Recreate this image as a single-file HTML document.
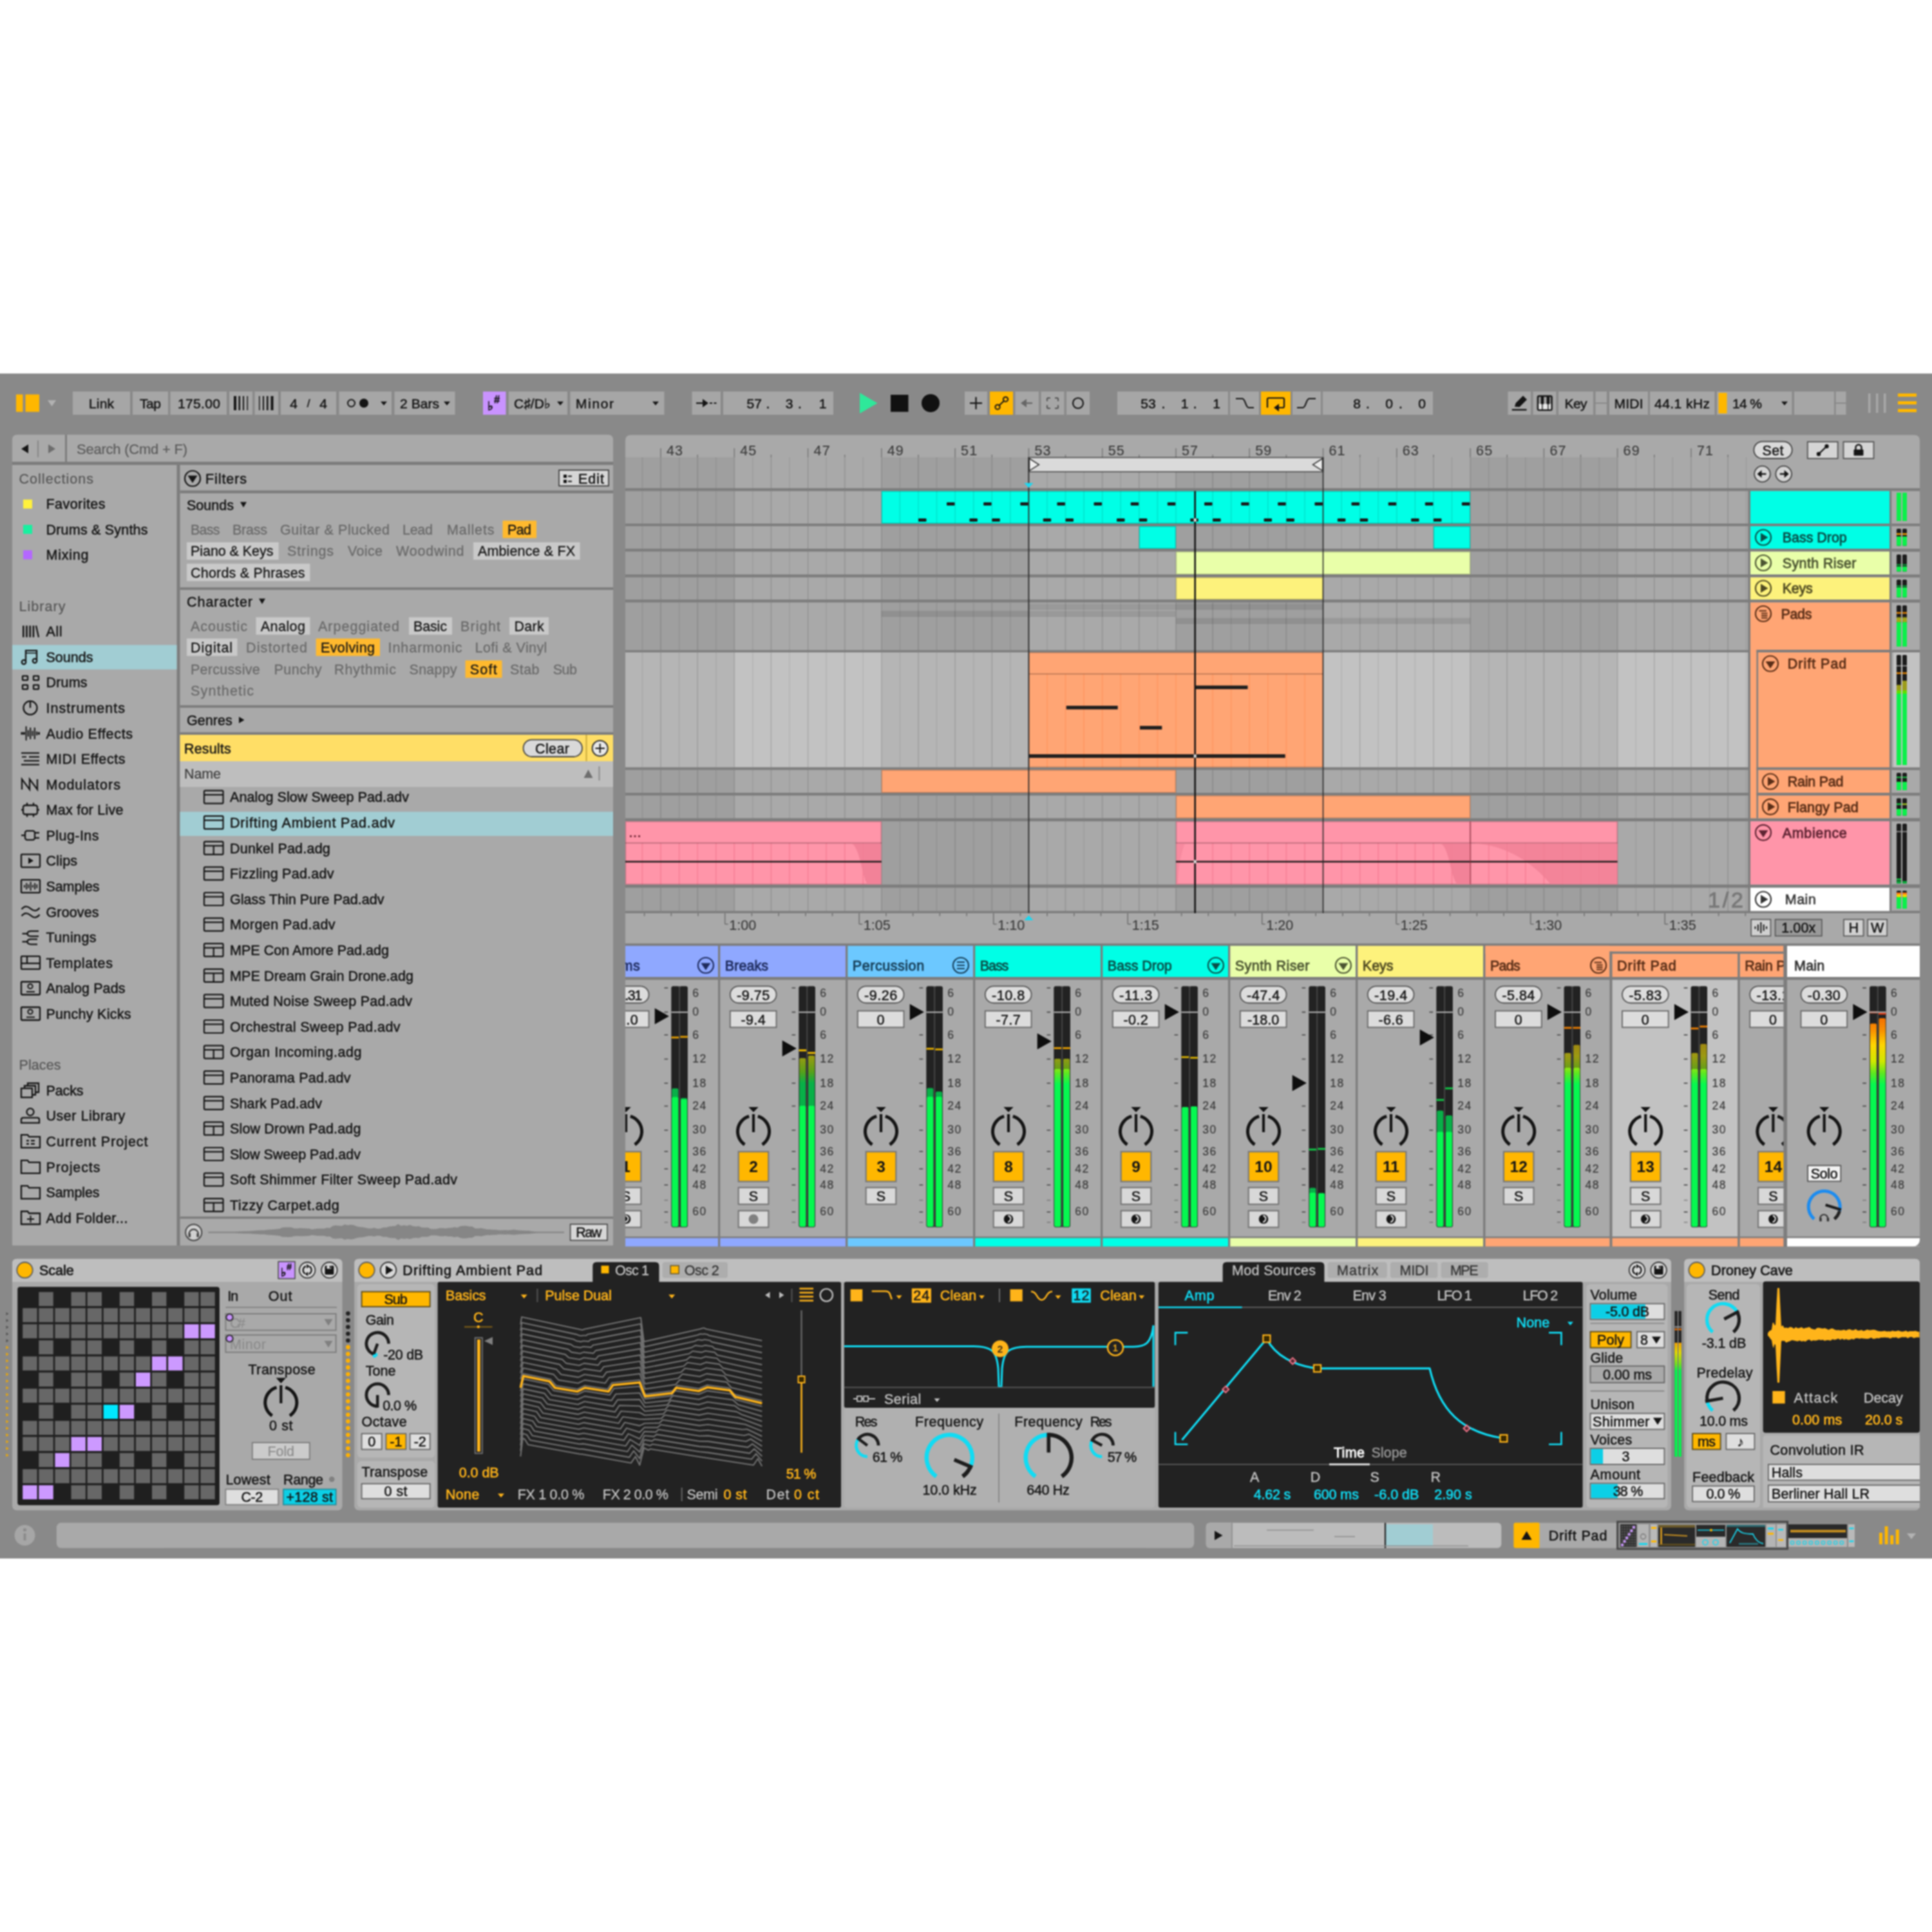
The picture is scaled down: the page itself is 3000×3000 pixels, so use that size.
<!DOCTYPE html>
<html><head><meta charset="utf-8"><title>Live</title>
<style>html,body{margin:0;padding:0;background:#fff}svg{display:block}text{font-family:"Liberation Sans",sans-serif;white-space:pre}</style>
</head><body>
<svg width="3000" height="3000" viewBox="0 0 3000 3000">
<g style="filter:blur(0.9px)"><rect x="-10" y="-10" width="3020" height="3020" fill="#fff"/>
<rect x="-10" y="580" width="3020" height="1840" fill="#898989"/>
<rect x="25" y="612.5" width="10.5" height="27" fill="#ffb700"/>
<rect x="39.5" y="612.5" width="21.5" height="27" fill="#ffb700"/>
<polygon points="74,621.5 87,621.5 80.5,631" fill="#b2b2b2" />
<rect x="113" y="608" width="89" height="36" fill="#a6a6a6"/>
<text x="157.5" y="633.5" font-size="21" fill="#151515" text-anchor="middle" textLength="39" lengthAdjust="spacing" stroke="#151515" stroke-width="0.5" >Link</text>
<rect x="206" y="608" width="55" height="36" fill="#a6a6a6"/>
<text x="233.5" y="633.5" font-size="21" fill="#151515" text-anchor="middle" textLength="33" lengthAdjust="spacing" stroke="#151515" stroke-width="0.5" >Tap</text>
<rect x="264.5" y="608" width="87.5" height="36" fill="#a6a6a6"/>
<text x="309" y="633.5" font-size="21" fill="#151515" text-anchor="middle" textLength="66" lengthAdjust="spacing" stroke="#151515" stroke-width="0.5" >175.00</text>
<rect x="356" y="608" width="36" height="36" fill="#a6a6a6"/>
<rect x="363" y="615" width="4" height="22" fill="#151515"/>
<rect x="370.5" y="615" width="2.5" height="22" fill="#151515"/>
<rect x="377" y="615" width="2" height="22" fill="#151515"/>
<rect x="383.5" y="615" width="1.5" height="22" fill="#151515"/>
<rect x="395.5" y="608" width="36.5" height="36" fill="#a6a6a6"/>
<rect x="402" y="615" width="1.5" height="22" fill="#151515"/>
<rect x="408" y="615" width="2" height="22" fill="#151515"/>
<rect x="414" y="615" width="2.5" height="22" fill="#151515"/>
<rect x="420.5" y="615" width="4" height="22" fill="#151515"/>
<rect x="436" y="608" width="86" height="36" fill="#a6a6a6"/>
<text x="456" y="633.5" font-size="21" fill="#151515" text-anchor="middle" stroke="#151515" stroke-width="0.5" >4</text>
<text x="479" y="632.1" font-size="17" fill="#151515" text-anchor="middle" stroke="#151515" stroke-width="0.5" >/</text>
<text x="502" y="633.5" font-size="21" fill="#151515" text-anchor="middle" stroke="#151515" stroke-width="0.5" >4</text>
<rect x="526.5" y="608" width="81.5" height="36" fill="#a6a6a6"/>
<circle cx="545.5" cy="626" r="5.5" fill="none" stroke="#151515" stroke-width="2" />
<circle cx="565" cy="626" r="7" fill="#151515" />
<polygon points="591,623.5 601,623.5 596,629.5" fill="#151515" />
<rect x="612.5" y="608" width="94" height="36" fill="#a6a6a6"/>
<text x="621" y="633.5" font-size="21" fill="#151515" textLength="61" lengthAdjust="spacing" stroke="#151515" stroke-width="0.5" >2 Bars</text>
<polygon points="689,623.5 699,623.5 694,629.5" fill="#151515" />
<rect x="750" y="608" width="35.5" height="36" fill="#c993ff"/>
<text x="756.5" y="636.8" font-size="19" fill="#151515" stroke="#151515" stroke-width="0.9" >♭</text>
<text x="767" y="626.4" font-size="16.5" fill="#151515" font-weight="bold" stroke="#151515" stroke-width="0.4" >#</text>
<rect x="790" y="608" width="91" height="36" fill="#a6a6a6"/>
<text x="798" y="633.5" font-size="21" fill="#151515" textLength="57" lengthAdjust="spacing" stroke="#151515" stroke-width="0.5" >C♯/D♭</text>
<polygon points="865,623.5 875,623.5 870,629.5" fill="#151515" />
<rect x="885.5" y="608" width="146" height="36" fill="#a6a6a6"/>
<text x="894" y="633.5" font-size="21" fill="#151515" textLength="59" lengthAdjust="spacing" stroke="#151515" stroke-width="0.5" >Minor</text>
<polygon points="1013,623.5 1023,623.5 1018,629.5" fill="#151515" />
<rect x="1074.5" y="608" width="44.5" height="36" fill="#a6a6a6"/>
<line x1="1081" y1="626" x2="1097" y2="626" stroke="#151515" stroke-width="2.2" />
<polygon points="1091,619.5 1100,626 1091,632.5" fill="#151515" />
<line x1="1102" y1="626" x2="1106" y2="626" stroke="#151515" stroke-width="2" />
<line x1="1108.5" y1="626" x2="1112.5" y2="626" stroke="#151515" stroke-width="2" />
<rect x="1123" y="608" width="171" height="36" fill="#a6a6a6"/>
<text x="1171.3" y="633.5" font-size="21" fill="#151515" text-anchor="middle" stroke="#151515" stroke-width="0.5" >57</text>
<text x="1192.5" y="633.5" font-size="21" fill="#151515" text-anchor="middle" stroke="#151515" stroke-width="0.5" >.</text>
<text x="1225.5" y="633.5" font-size="21" fill="#151515" text-anchor="middle" stroke="#151515" stroke-width="0.5" >3</text>
<text x="1242" y="633.5" font-size="21" fill="#151515" text-anchor="middle" stroke="#151515" stroke-width="0.5" >.</text>
<text x="1277.5" y="633.5" font-size="21" fill="#151515" text-anchor="middle" stroke="#151515" stroke-width="0.5" >1</text>
<polygon points="1335,610 1335,642 1362.5,626" fill="#2ee89a" />
<rect x="1383" y="613" width="27.5" height="26.5" fill="#111"/>
<circle cx="1445" cy="626" r="14" fill="#111" />
<rect x="1498" y="608" width="35" height="36" fill="#a6a6a6"/>
<line x1="1506" y1="626" x2="1525" y2="626" stroke="#151515" stroke-width="2.2" />
<line x1="1515.5" y1="616.5" x2="1515.5" y2="635.5" stroke="#151515" stroke-width="2.2" />
<rect x="1537" y="608" width="36" height="36" fill="#ffb700"/>
<circle cx="1549" cy="632" r="3.6" fill="none" stroke="#151515" stroke-width="2" />
<circle cx="1561.5" cy="620" r="3.6" fill="none" stroke="#151515" stroke-width="2" />
<line x1="1551.5" y1="629.5" x2="1559" y2="622.5" stroke="#151515" stroke-width="2" />
<rect x="1576.5" y="608" width="36.5" height="36" fill="#a6a6a6"/>
<line x1="1588" y1="626" x2="1603" y2="626" stroke="#666" stroke-width="2.2" />
<polygon points="1594,619.5 1585,626 1594,632.5" fill="#666" />
<rect x="1616.5" y="608" width="36" height="36" fill="#a6a6a6"/>
<path d="M1626 618h5M1626 618v5" fill="none" stroke="#555" stroke-width="2" />
<path d="M1643 618h-5M1643 618v5" fill="none" stroke="#555" stroke-width="2" />
<path d="M1626 634h5M1626 634v-5" fill="none" stroke="#555" stroke-width="2" />
<path d="M1643 634h-5M1643 634v-5" fill="none" stroke="#555" stroke-width="2" />
<rect x="1656" y="608" width="36" height="36" fill="#a6a6a6"/>
<circle cx="1674" cy="626" r="8" fill="none" stroke="#151515" stroke-width="2.2" />
<rect x="1735" y="608" width="172" height="36" fill="#a6a6a6"/>
<text x="1783" y="633.5" font-size="21" fill="#151515" text-anchor="middle" stroke="#151515" stroke-width="0.5" >53</text>
<text x="1806.4" y="633.5" font-size="21" fill="#151515" text-anchor="middle" stroke="#151515" stroke-width="0.5" >.</text>
<text x="1839.5" y="633.5" font-size="21" fill="#151515" text-anchor="middle" stroke="#151515" stroke-width="0.5" >1</text>
<text x="1855.6" y="633.5" font-size="21" fill="#151515" text-anchor="middle" stroke="#151515" stroke-width="0.5" >.</text>
<text x="1889.2" y="633.5" font-size="21" fill="#151515" text-anchor="middle" stroke="#151515" stroke-width="0.5" >1</text>
<rect x="1910" y="608" width="45" height="36" fill="#a6a6a6"/>
<path d="M1919 619h10c5 0 5 14 10 14h8" fill="none" stroke="#151515" stroke-width="2.2" />
<rect x="1958" y="608" width="46" height="36" fill="#ffb700"/>
<path d="M1968 633v-13a2 2 0 0 1 2-2h22a2 2 0 0 1 2 2v11a2 2 0 0 1-2 2h-6" fill="none" stroke="#151515" stroke-width="2.2" />
<polygon points="1978,633 1986,627 1986,639" fill="#151515" />
<rect x="2007" y="608" width="44" height="36" fill="#a6a6a6"/>
<path d="M2014 633h9c5 0 5-14 10-14h10" fill="none" stroke="#151515" stroke-width="2.2" />
<rect x="2054" y="608" width="171" height="36" fill="#a6a6a6"/>
<text x="2107" y="633.5" font-size="21" fill="#151515" text-anchor="middle" stroke="#151515" stroke-width="0.5" >8</text>
<text x="2124" y="633.5" font-size="21" fill="#151515" text-anchor="middle" stroke="#151515" stroke-width="0.5" >.</text>
<text x="2157" y="633.5" font-size="21" fill="#151515" text-anchor="middle" stroke="#151515" stroke-width="0.5" >0</text>
<text x="2175" y="633.5" font-size="21" fill="#151515" text-anchor="middle" stroke="#151515" stroke-width="0.5" >.</text>
<text x="2208" y="633.5" font-size="21" fill="#151515" text-anchor="middle" stroke="#151515" stroke-width="0.5" >0</text>
<rect x="2341.5" y="608" width="35.5" height="36" fill="#a6a6a6"/>
<path d="M2352 631.5l1.5 -5.5l11.5 -11.5l6 6l-11.5 11.5z" fill="#151515" />
<line x1="2347.7" y1="636.3" x2="2370.5" y2="636.3" stroke="#151515" stroke-width="2.4" />
<rect x="2380.5" y="608" width="36" height="36" fill="#a6a6a6"/>
<rect x="2388" y="615" width="21.5" height="21.8" fill="#a6a6a6" rx="2" stroke="#151515" stroke-width="2.6"/>
<rect x="2389.3" y="627" width="19" height="8.5" fill="#e8e8e8"/>
<rect x="2392.6" y="615" width="4.6" height="12.5" fill="#151515"/>
<rect x="2401.6" y="615" width="4.6" height="12.5" fill="#151515"/>
<line x1="2394.9" y1="627" x2="2394.9" y2="636" stroke="#151515" stroke-width="1.4" />
<line x1="2403.9" y1="627" x2="2403.9" y2="636" stroke="#151515" stroke-width="1.4" />
<rect x="2420" y="608" width="54" height="36" fill="#a6a6a6"/>
<text x="2447" y="633.5" font-size="21" fill="#151515" text-anchor="middle" textLength="35" lengthAdjust="spacing" stroke="#151515" stroke-width="0.5" >Key</text>
<rect x="2477.5" y="608" width="17.5" height="17" fill="#a6a6a6"/>
<rect x="2477.5" y="627" width="17.5" height="17" fill="#a6a6a6"/>
<rect x="2499" y="608" width="60" height="36" fill="#a6a6a6"/>
<text x="2529" y="633.5" font-size="21" fill="#151515" text-anchor="middle" textLength="45" lengthAdjust="spacing" stroke="#151515" stroke-width="0.5" >MIDI</text>
<rect x="2562" y="608" width="100.5" height="36" fill="#a6a6a6"/>
<text x="2612" y="633.5" font-size="21" fill="#151515" text-anchor="middle" textLength="86" lengthAdjust="spacing" stroke="#151515" stroke-width="0.5" >44.1 kHz</text>
<rect x="2666" y="608" width="116.5" height="36" fill="#a6a6a6"/>
<rect x="2668.5" y="610" width="13" height="32" fill="#ffb700"/>
<text x="2690" y="633.5" font-size="21" fill="#151515" textLength="46" lengthAdjust="spacing" stroke="#151515" stroke-width="0.5" >14 %</text>
<polygon points="2766,623.5 2776,623.5 2771,629.5" fill="#151515" />
<rect x="2786" y="608" width="62" height="36" fill="#a6a6a6"/>
<rect x="2850.5" y="608" width="16" height="17" fill="#a6a6a6"/>
<rect x="2850.5" y="627" width="16" height="17" fill="#a6a6a6"/>
<rect x="2901" y="611" width="3.5" height="30" fill="#a8a8a8"/>
<rect x="2913" y="611" width="3.5" height="30" fill="#a8a8a8"/>
<rect x="2925" y="611" width="3.5" height="30" fill="#a8a8a8"/>
<rect x="2947" y="611" width="29" height="5" fill="#ffb700"/>
<rect x="2947" y="623" width="29" height="5" fill="#ffb700"/>
<rect x="2947" y="635" width="29" height="5" fill="#ffb700"/>
<clipPath id="dvclip"><rect x="0" y="1950" width="2981" height="400"/></clipPath>
<linearGradient id="dvm" gradientUnits="userSpaceOnUse" x1="0" y1="2060" x2="0" y2="2262"><stop offset="0" stop-color="#f06000"/><stop offset="0.12" stop-color="#f8a000"/><stop offset="0.2" stop-color="#e8e000"/><stop offset="0.29" stop-color="#70e820"/><stop offset="0.34" stop-color="#06f850"/><stop offset="1" stop-color="#06f850"/></linearGradient>
<path d="M19 1934V683q0 -8 8 -8H944q8 0 8 8V1934z" fill="#a9a9a9" />
<rect x="19" y="717" width="933" height="5" fill="#7d7d7d"/>
<rect x="101" y="675" width="3" height="44" fill="#7d7d7d"/>
<polygon points="33,697 44,690 44,704" fill="#151515" />
<line x1="59" y1="684" x2="59" y2="710" stroke="#7d7d7d" stroke-width="1.5" />
<polygon points="86,697 75,690 75,704" fill="#6d6d6d" />
<text x="119" y="704.9" font-size="22" fill="#5a5a5a" textLength="172" lengthAdjust="spacing" stroke="#5a5a5a" stroke-width="0.2" >Search (Cmd + F)</text>
<rect x="274.5" y="722" width="5" height="1212" fill="#7d7d7d"/>
<text x="29.5" y="750.7" font-size="21.5" fill="#555" textLength="115.5" lengthAdjust="spacing" stroke="#555" stroke-width="0.2" >Collections</text>
<rect x="36" y="775.7" width="14" height="14" fill="#fff13c"/>
<text x="71.5" y="790.4" font-size="21.5" fill="#151515" textLength="92" lengthAdjust="spacing" stroke="#151515" stroke-width="0.5" >Favorites</text>
<rect x="36" y="815" width="14" height="14" fill="#19f0a0"/>
<text x="71.5" y="829.7" font-size="21.5" fill="#151515" textLength="158" lengthAdjust="spacing" stroke="#151515" stroke-width="0.5" >Drums &amp; Synths</text>
<rect x="36" y="854.5" width="14" height="14" fill="#b467ff"/>
<text x="71.5" y="869.2" font-size="21.5" fill="#151515" textLength="66" lengthAdjust="spacing" stroke="#151515" stroke-width="0.5" >Mixing</text>
<text x="29.5" y="948.7" font-size="21.5" fill="#555" textLength="72" lengthAdjust="spacing" stroke="#555" stroke-width="0.2" >Library</text>
<rect x="35" y="971.5" width="2.6" height="18" fill="#151515"/>
<rect x="40.2" y="971.5" width="2.6" height="18" fill="#151515"/>
<rect x="45.4" y="971.5" width="2.6" height="18" fill="#151515"/>
<rect x="50.6" y="971.5" width="2.6" height="18" fill="#151515"/>
<line x1="56" y1="971.5" x2="60" y2="989.5" stroke="#151515" stroke-width="2.3" />
<text x="71.5" y="988.2" font-size="21.5" fill="#151515" textLength="25" lengthAdjust="spacing" stroke="#151515" stroke-width="0.5" >All</text>
<rect x="19" y="1001.5" width="255.5" height="38" fill="#a1cdd3"/>
<path d="M40 1027.1v-17h17v15" fill="none" stroke="#151515" stroke-width="2.3" />
<line x1="40" y1="1014.1" x2="57" y2="1014.1" stroke="#151515" stroke-width="1.6" />
<circle cx="37" cy="1028.1" r="3.2" fill="none" stroke="#151515" stroke-width="2.3" />
<circle cx="54" cy="1026.1" r="3.2" fill="none" stroke="#151515" stroke-width="2.3" />
<text x="71.5" y="1027.8" font-size="21.5" fill="#151515" textLength="73" lengthAdjust="spacing" stroke="#151515" stroke-width="0.5" >Sounds</text>
<rect x="35" y="1049.6" width="8" height="6.5" fill="none" rx="0.5" stroke="#151515" stroke-width="2.3"/>
<rect x="35" y="1063.6" width="8" height="6.5" fill="none" rx="0.5" stroke="#151515" stroke-width="2.3"/>
<rect x="52" y="1049.6" width="8" height="6.5" fill="none" rx="0.5" stroke="#151515" stroke-width="2.3"/>
<rect x="52" y="1063.6" width="8" height="6.5" fill="none" rx="0.5" stroke="#151515" stroke-width="2.3"/>
<text x="71.5" y="1067.3" font-size="21.5" fill="#151515" textLength="64" lengthAdjust="spacing" stroke="#151515" stroke-width="0.5" >Drums</text>
<circle cx="47" cy="1099.2" r="10.5" fill="none" stroke="#151515" stroke-width="2.3" />
<line x1="47" y1="1088.2" x2="47" y2="1099.2" stroke="#151515" stroke-width="2.3" />
<text x="71.5" y="1106.9" font-size="21.5" fill="#151515" textLength="122.5" lengthAdjust="spacing" stroke="#151515" stroke-width="0.5" >Instruments</text>
<line x1="34" y1="1136.8" x2="34" y2="1140.8" stroke="#151515" stroke-width="3" />
<line x1="37.3" y1="1136.8" x2="37.3" y2="1140.8" stroke="#151515" stroke-width="3" />
<line x1="40.6" y1="1127.8" x2="40.6" y2="1149.8" stroke="#151515" stroke-width="2" />
<line x1="43.9" y1="1133.8" x2="43.9" y2="1143.8" stroke="#151515" stroke-width="2" />
<line x1="47.2" y1="1129.8" x2="47.2" y2="1147.8" stroke="#151515" stroke-width="2" />
<line x1="50.5" y1="1134.8" x2="50.5" y2="1142.8" stroke="#151515" stroke-width="2" />
<line x1="53.8" y1="1129.8" x2="53.8" y2="1147.8" stroke="#151515" stroke-width="2" />
<line x1="57.1" y1="1135.8" x2="57.1" y2="1141.8" stroke="#151515" stroke-width="2" />
<line x1="60.4" y1="1136.8" x2="60.4" y2="1140.8" stroke="#151515" stroke-width="3" />
<text x="71.5" y="1146.5" font-size="21.5" fill="#151515" textLength="134.6" lengthAdjust="spacing" stroke="#151515" stroke-width="0.5" >Audio Effects</text>
<line x1="33" y1="1169.3" x2="61" y2="1169.3" stroke="#151515" stroke-width="2.2" />
<line x1="45" y1="1175.3" x2="61" y2="1175.3" stroke="#151515" stroke-width="2.2" />
<line x1="37" y1="1181.3" x2="61" y2="1181.3" stroke="#151515" stroke-width="2.2" />
<line x1="33" y1="1187.3" x2="61" y2="1187.3" stroke="#151515" stroke-width="2.2" />
<rect x="34" y="1172.3" width="9" height="5" fill="#a9a9a9"/>
<line x1="34" y1="1175.3" x2="41" y2="1175.3" stroke="#151515" stroke-width="2" />
<text x="71.5" y="1186" font-size="21.5" fill="#151515" textLength="123" lengthAdjust="spacing" stroke="#151515" stroke-width="0.5" >MIDI Effects</text>
<path d="M34 1225.9v-16l12 16v-16l12 16v-16" fill="none" stroke="#151515" stroke-width="2.3" />
<text x="71.5" y="1225.6" font-size="21.5" fill="#151515" textLength="115.4" lengthAdjust="spacing" stroke="#151515" stroke-width="0.5" >Modulators</text>
<rect x="36" y="1250.5" width="22" height="14" fill="none" rx="3" stroke="#151515" stroke-width="2.3"/>
<line x1="33" y1="1257.5" x2="36" y2="1257.5" stroke="#151515" stroke-width="2.3" />
<line x1="58" y1="1257.5" x2="61" y2="1257.5" stroke="#151515" stroke-width="2.3" />
<line x1="42" y1="1246.5" x2="42" y2="1250.5" stroke="#151515" stroke-width="2.3" />
<line x1="42" y1="1264.5" x2="42" y2="1268.5" stroke="#151515" stroke-width="2.3" />
<line x1="52" y1="1246.5" x2="52" y2="1250.5" stroke="#151515" stroke-width="2.3" />
<line x1="52" y1="1264.5" x2="52" y2="1268.5" stroke="#151515" stroke-width="2.3" />
<text x="71.5" y="1265.2" font-size="21.5" fill="#151515" textLength="120" lengthAdjust="spacing" stroke="#151515" stroke-width="0.5" >Max for Live</text>
<rect x="39" y="1290.1" width="15" height="14" fill="none" rx="3" stroke="#151515" stroke-width="2.3"/>
<line x1="33" y1="1297.1" x2="39" y2="1297.1" stroke="#151515" stroke-width="2.3" />
<line x1="54" y1="1293.1" x2="61" y2="1293.1" stroke="#151515" stroke-width="2.3" />
<line x1="54" y1="1301.1" x2="61" y2="1301.1" stroke="#151515" stroke-width="2.3" />
<text x="71.5" y="1304.8" font-size="21.5" fill="#151515" textLength="82" lengthAdjust="spacing" stroke="#151515" stroke-width="0.5" >Plug-Ins</text>
<rect x="33" y="1326.6" width="29" height="20" fill="none" rx="1" stroke="#151515" stroke-width="2.3"/>
<polygon points="44,1331.6 44,1341.6 52,1336.6" fill="#151515" />
<text x="71.5" y="1344.3" font-size="21.5" fill="#151515" textLength="48.6" lengthAdjust="spacing" stroke="#151515" stroke-width="0.5" >Clips</text>
<rect x="33" y="1366.2" width="29" height="20" fill="none" rx="1" stroke="#151515" stroke-width="2.3"/>
<line x1="38" y1="1374.2" x2="38" y2="1378.2" stroke="#151515" stroke-width="1.8" />
<line x1="41.2" y1="1371.2" x2="41.2" y2="1381.2" stroke="#151515" stroke-width="1.8" />
<line x1="44.4" y1="1373.2" x2="44.4" y2="1379.2" stroke="#151515" stroke-width="1.8" />
<line x1="47.6" y1="1369.2" x2="47.6" y2="1383.2" stroke="#151515" stroke-width="1.8" />
<line x1="50.8" y1="1374.2" x2="50.8" y2="1378.2" stroke="#151515" stroke-width="1.8" />
<line x1="54" y1="1371.2" x2="54" y2="1381.2" stroke="#151515" stroke-width="1.8" />
<line x1="57.2" y1="1373.2" x2="57.2" y2="1379.2" stroke="#151515" stroke-width="1.8" />
<text x="71.5" y="1383.9" font-size="21.5" fill="#151515" textLength="83" lengthAdjust="spacing" stroke="#151515" stroke-width="0.5" >Samples</text>
<path d="M33.5 1411.8c4.5 -5.5 9 -5.5 14 -1s9.5 4.5 14 -1" fill="none" stroke="#151515" stroke-width="2.3" />
<path d="M33.5 1422.3c4.5 -5.5 9 -5.5 14 -1s9.5 4.5 14 -1" fill="none" stroke="#151515" stroke-width="2.3" />
<text x="71.5" y="1423.5" font-size="21.5" fill="#151515" textLength="82" lengthAdjust="spacing" stroke="#151515" stroke-width="0.5" >Grooves</text>
<line x1="34.5" y1="1449.8" x2="42.5" y2="1449.8" stroke="#151515" stroke-width="2.3" />
<path d="M60 1445.8H48.5q-6 0 -6 4t6 4H60" fill="none" stroke="#151515" stroke-width="2.3" />
<line x1="34.5" y1="1462.3" x2="42.5" y2="1462.3" stroke="#151515" stroke-width="2.3" />
<path d="M58 1458.3H48.5q-6 0 -6 4t6 4H58" fill="none" stroke="#151515" stroke-width="2.3" />
<text x="71.5" y="1463" font-size="21.5" fill="#151515" textLength="78" lengthAdjust="spacing" stroke="#151515" stroke-width="0.5" >Tunings</text>
<rect x="33" y="1484.9" width="29" height="20" fill="none" rx="1" stroke="#151515" stroke-width="2.3"/>
<line x1="33" y1="1495.9" x2="62" y2="1495.9" stroke="#151515" stroke-width="2.3" />
<line x1="42" y1="1484.9" x2="42" y2="1495.9" stroke="#151515" stroke-width="2.3" />
<text x="71.5" y="1502.6" font-size="21.5" fill="#151515" textLength="103.5" lengthAdjust="spacing" stroke="#151515" stroke-width="0.5" >Templates</text>
<rect x="33" y="1524.5" width="29" height="20" fill="none" rx="1" stroke="#151515" stroke-width="2.3"/>
<circle cx="47" cy="1531.5" r="3.6" fill="none" stroke="#151515" stroke-width="2" />
<line x1="41" y1="1540" x2="54" y2="1540" stroke="#151515" stroke-width="2" />
<text x="71.5" y="1542.2" font-size="21.5" fill="#151515" textLength="123" lengthAdjust="spacing" stroke="#151515" stroke-width="0.5" >Analog Pads</text>
<rect x="33" y="1564" width="29" height="20" fill="none" rx="1" stroke="#151515" stroke-width="2.3"/>
<circle cx="47" cy="1571" r="3.6" fill="none" stroke="#151515" stroke-width="2" />
<line x1="41" y1="1579.5" x2="54" y2="1579.5" stroke="#151515" stroke-width="2" />
<text x="71.5" y="1581.7" font-size="21.5" fill="#151515" textLength="132" lengthAdjust="spacing" stroke="#151515" stroke-width="0.5" >Punchy Kicks</text>
<text x="29.5" y="1660.7" font-size="21.5" fill="#555" textLength="65" lengthAdjust="spacing" stroke="#555" stroke-width="0.2" >Places</text>
<rect x="33" y="1690" width="17" height="14" fill="none" stroke="#151515" stroke-width="2.3"/>
<path d="M38 1690v-4h17v14h-4" fill="none" stroke="#151515" stroke-width="2.3" />
<path d="M43 1686v-4h17v14h-4" fill="none" stroke="#151515" stroke-width="2.3" />
<text x="71.5" y="1700.7" font-size="21.5" fill="#151515" textLength="58" lengthAdjust="spacing" stroke="#151515" stroke-width="0.5" >Packs</text>
<circle cx="47" cy="1726.6" r="5.5" fill="none" stroke="#151515" stroke-width="2.3" />
<path d="M33 1743.6v-5q0 -3 3 -3h22q3 0 3 3v5z" fill="none" stroke="#151515" stroke-width="2.3" />
<text x="71.5" y="1740.3" font-size="21.5" fill="#151515" textLength="122.7" lengthAdjust="spacing" stroke="#151515" stroke-width="0.5" >User Library</text>
<path d="M33 1782.2v-20h10l2 3h17v17z" fill="none" stroke="#151515" stroke-width="2.3" />
<line x1="41" y1="1771.2" x2="45" y2="1771.2" stroke="#151515" stroke-width="2.4" />
<line x1="48" y1="1771.2" x2="54" y2="1771.2" stroke="#151515" stroke-width="2.4" />
<line x1="41" y1="1776.2" x2="45" y2="1776.2" stroke="#151515" stroke-width="2.4" />
<line x1="48" y1="1776.2" x2="54" y2="1776.2" stroke="#151515" stroke-width="2.4" />
<text x="71.5" y="1779.9" font-size="21.5" fill="#151515" textLength="158" lengthAdjust="spacing" stroke="#151515" stroke-width="0.5" >Current Project</text>
<path d="M33 1821.8v-20h10l2 3h17v17z" fill="none" stroke="#151515" stroke-width="2.3" />
<text x="71.5" y="1819.5" font-size="21.5" fill="#151515" textLength="84" lengthAdjust="spacing" stroke="#151515" stroke-width="0.5" >Projects</text>
<path d="M33 1861.4v-20h10l2 3h17v17z" fill="none" stroke="#151515" stroke-width="2.3" />
<text x="71.5" y="1859.1" font-size="21.5" fill="#151515" textLength="83" lengthAdjust="spacing" stroke="#151515" stroke-width="0.5" >Samples</text>
<path d="M33 1901v-20h10l2 3h17v17z" fill="none" stroke="#151515" stroke-width="2.3" />
<line x1="42" y1="1893" x2="53" y2="1893" stroke="#151515" stroke-width="2" />
<line x1="47.5" y1="1887.5" x2="47.5" y2="1898.5" stroke="#151515" stroke-width="2" />
<text x="71.5" y="1898.7" font-size="21.5" fill="#151515" textLength="127" lengthAdjust="spacing" stroke="#151515" stroke-width="0.5" >Add Folder...</text>
<circle cx="299" cy="743" r="12" fill="none" stroke="#151515" stroke-width="2.2" />
<polygon points="291.5,738.5 306.5,738.5 299,750" fill="#151515" />
<text x="319" y="750.7" font-size="21.5" fill="#151515" textLength="64" lengthAdjust="spacing" stroke="#151515" stroke-width="0.5" >Filters</text>
<rect x="868" y="730" width="77" height="24.5" fill="#d6d6d6" stroke="#333" stroke-width="1.6"/>
<rect x="875" y="737" width="5" height="5" fill="#151515"/>
<line x1="882" y1="739.5" x2="888" y2="739.5" stroke="#151515" stroke-width="2" />
<rect x="875" y="745" width="5" height="5" fill="#151515"/>
<line x1="882" y1="747.5" x2="888" y2="747.5" stroke="#151515" stroke-width="2" />
<text x="898" y="750.7" font-size="21.5" fill="#151515" textLength="40" lengthAdjust="spacing" stroke="#151515" stroke-width="0.5" >Edit</text>
<rect x="279.5" y="761.5" width="672.5" height="4.5" fill="#7d7d7d"/>
<text x="290" y="791.7" font-size="21.5" fill="#151515" textLength="73" lengthAdjust="spacing" stroke="#151515" stroke-width="0.5" >Sounds</text>
<polygon points="373,779.5 383,779.5 378,788" fill="#151515" />
<text x="296" y="829.7" font-size="21.5" fill="#6a6a6a" textLength="45.6" lengthAdjust="spacing" stroke="#6a6a6a" stroke-width="0.3" >Bass</text>
<text x="361" y="829.7" font-size="21.5" fill="#6a6a6a" textLength="54" lengthAdjust="spacing" stroke="#6a6a6a" stroke-width="0.3" >Brass</text>
<text x="435" y="829.7" font-size="21.5" fill="#6a6a6a" textLength="170" lengthAdjust="spacing" stroke="#6a6a6a" stroke-width="0.3" >Guitar &amp; Plucked</text>
<text x="625" y="829.7" font-size="21.5" fill="#6a6a6a" textLength="47" lengthAdjust="spacing" stroke="#6a6a6a" stroke-width="0.3" >Lead</text>
<text x="694" y="829.7" font-size="21.5" fill="#6a6a6a" textLength="73.6" lengthAdjust="spacing" stroke="#6a6a6a" stroke-width="0.3" >Mallets</text>
<rect x="780.5" y="808.5" width="52.5" height="27" fill="#ffb92e"/>
<text x="788" y="829.7" font-size="21.5" fill="#151515" textLength="37" lengthAdjust="spacing" stroke="#151515" stroke-width="0.3" >Pad</text>
<rect x="290" y="842.1" width="142.7" height="27" fill="#c9c9c9"/>
<text x="296" y="863.3" font-size="21.5" fill="#151515" textLength="128.4" lengthAdjust="spacing" stroke="#151515" stroke-width="0.3" >Piano &amp; Keys</text>
<text x="446" y="863.3" font-size="21.5" fill="#6a6a6a" textLength="72" lengthAdjust="spacing" stroke="#6a6a6a" stroke-width="0.3" >Strings</text>
<text x="540" y="863.3" font-size="21.5" fill="#6a6a6a" textLength="54" lengthAdjust="spacing" stroke="#6a6a6a" stroke-width="0.3" >Voice</text>
<text x="615" y="863.3" font-size="21.5" fill="#6a6a6a" textLength="105.5" lengthAdjust="spacing" stroke="#6a6a6a" stroke-width="0.3" >Woodwind</text>
<rect x="735" y="842.1" width="165.6" height="27" fill="#c9c9c9"/>
<text x="742" y="863.3" font-size="21.5" fill="#151515" textLength="151" lengthAdjust="spacing" stroke="#151515" stroke-width="0.3" >Ambience &amp; FX</text>
<rect x="290" y="875.3" width="191.4" height="27" fill="#c9c9c9"/>
<text x="296" y="896.5" font-size="21.5" fill="#151515" textLength="177.6" lengthAdjust="spacing" stroke="#151515" stroke-width="0.3" >Chords &amp; Phrases</text>
<rect x="279.5" y="912" width="672.5" height="4" fill="#7d7d7d"/>
<text x="290" y="941.7" font-size="21.5" fill="#151515" textLength="102" lengthAdjust="spacing" stroke="#151515" stroke-width="0.5" >Character</text>
<polygon points="402,929.5 412,929.5 407,938" fill="#151515" />
<text x="296" y="979.7" font-size="21.5" fill="#6a6a6a" textLength="88" lengthAdjust="spacing" stroke="#6a6a6a" stroke-width="0.3" >Acoustic</text>
<rect x="397.5" y="958.5" width="83.9" height="27" fill="#c9c9c9"/>
<text x="404.8" y="979.7" font-size="21.5" fill="#151515" textLength="69.2" lengthAdjust="spacing" stroke="#151515" stroke-width="0.3" >Analog</text>
<text x="494" y="979.7" font-size="21.5" fill="#6a6a6a" textLength="126" lengthAdjust="spacing" stroke="#6a6a6a" stroke-width="0.3" >Arpeggiated</text>
<rect x="635" y="958.5" width="67" height="27" fill="#c9c9c9"/>
<text x="642" y="979.7" font-size="21.5" fill="#151515" textLength="52" lengthAdjust="spacing" stroke="#151515" stroke-width="0.3" >Basic</text>
<text x="715" y="979.7" font-size="21.5" fill="#6a6a6a" textLength="62" lengthAdjust="spacing" stroke="#6a6a6a" stroke-width="0.3" >Bright</text>
<rect x="791" y="958.5" width="61" height="27" fill="#c9c9c9"/>
<text x="798.6" y="979.7" font-size="21.5" fill="#151515" textLength="46.1" lengthAdjust="spacing" stroke="#151515" stroke-width="0.3" >Dark</text>
<rect x="290" y="991.5" width="78.5" height="27" fill="#c9c9c9"/>
<text x="296" y="1012.7" font-size="21.5" fill="#151515" textLength="65" lengthAdjust="spacing" stroke="#151515" stroke-width="0.3" >Digital</text>
<text x="382" y="1012.7" font-size="21.5" fill="#6a6a6a" textLength="95" lengthAdjust="spacing" stroke="#6a6a6a" stroke-width="0.3" >Distorted</text>
<rect x="490.7" y="991.5" width="99.3" height="27" fill="#ffb92e"/>
<text x="498" y="1012.7" font-size="21.5" fill="#151515" textLength="84" lengthAdjust="spacing" stroke="#151515" stroke-width="0.3" >Evolving</text>
<text x="602.5" y="1012.7" font-size="21.5" fill="#6a6a6a" textLength="114.9" lengthAdjust="spacing" stroke="#6a6a6a" stroke-width="0.3" >Inharmonic</text>
<text x="737.6" y="1012.7" font-size="21.5" fill="#6a6a6a" textLength="111.8" lengthAdjust="spacing" stroke="#6a6a6a" stroke-width="0.3" >Lofi &amp; Vinyl</text>
<text x="296" y="1046.7" font-size="21.5" fill="#6a6a6a" textLength="107.7" lengthAdjust="spacing" stroke="#6a6a6a" stroke-width="0.3" >Percussive</text>
<text x="425.5" y="1046.7" font-size="21.5" fill="#6a6a6a" textLength="74" lengthAdjust="spacing" stroke="#6a6a6a" stroke-width="0.3" >Punchy</text>
<text x="519" y="1046.7" font-size="21.5" fill="#6a6a6a" textLength="96" lengthAdjust="spacing" stroke="#6a6a6a" stroke-width="0.3" >Rhythmic</text>
<text x="635.6" y="1046.7" font-size="21.5" fill="#6a6a6a" textLength="74" lengthAdjust="spacing" stroke="#6a6a6a" stroke-width="0.3" >Snappy</text>
<rect x="722.6" y="1025.5" width="56.9" height="27" fill="#ffb92e"/>
<text x="729.8" y="1046.7" font-size="21.5" fill="#151515" textLength="41.9" lengthAdjust="spacing" stroke="#151515" stroke-width="0.3" >Soft</text>
<text x="792" y="1046.7" font-size="21.5" fill="#6a6a6a" textLength="45.5" lengthAdjust="spacing" stroke="#6a6a6a" stroke-width="0.3" >Stab</text>
<text x="858.7" y="1046.7" font-size="21.5" fill="#6a6a6a" textLength="37.3" lengthAdjust="spacing" stroke="#6a6a6a" stroke-width="0.3" >Sub</text>
<text x="296" y="1079.7" font-size="21.5" fill="#6a6a6a" textLength="98" lengthAdjust="spacing" stroke="#6a6a6a" stroke-width="0.3" >Synthetic</text>
<rect x="279.5" y="1095" width="672.5" height="4" fill="#7d7d7d"/>
<text x="290" y="1125.7" font-size="21.5" fill="#151515" textLength="70.8" lengthAdjust="spacing" stroke="#151515" stroke-width="0.5" >Genres</text>
<polygon points="371,1113 371,1123 379.5,1118" fill="#151515" />
<rect x="279.5" y="1137" width="672.5" height="4" fill="#7d7d7d"/>
<rect x="279.5" y="1141" width="672.5" height="41" fill="#ffde66"/>
<text x="286" y="1169.7" font-size="21.5" fill="#151515" textLength="72.7" lengthAdjust="spacing" stroke="#151515" stroke-width="0.5" >Results</text>
<rect x="812.6" y="1148.6" width="91.4" height="26.4" fill="#d9d9d9" rx="13.2" stroke="#444" stroke-width="1.8"/>
<text x="831" y="1169.7" font-size="21.5" fill="#151515" textLength="53" lengthAdjust="spacing" stroke="#151515" stroke-width="0.5" >Clear</text>
<line x1="910.5" y1="1141" x2="910.5" y2="1182" stroke="#c9a93a" stroke-width="2" />
<circle cx="931.7" cy="1162" r="12" fill="#e8e8e8" stroke="#333" stroke-width="2" />
<line x1="924.5" y1="1162" x2="939" y2="1162" stroke="#151515" stroke-width="2" />
<line x1="931.7" y1="1154.8" x2="931.7" y2="1169.2" stroke="#151515" stroke-width="2" />
<rect x="279.5" y="1182" width="672.5" height="40" fill="#bebebe"/>
<text x="286" y="1209.1" font-size="21.5" fill="#3a3a3a" textLength="57" lengthAdjust="spacing" stroke="#3a3a3a" stroke-width="0.2" >Name</text>
<polygon points="906.5,1208 920.5,1208 913.5,1195" fill="#6e6e6e" />
<line x1="930.5" y1="1190" x2="930.5" y2="1212" stroke="#8a8a8a" stroke-width="2" />
<rect x="317" y="1227.6" width="29.5" height="20" fill="none" rx="1.5" stroke="#151515" stroke-width="2.2"/>
<line x1="317" y1="1234.1" x2="346.5" y2="1234.1" stroke="#151515" stroke-width="2.2" />
<text x="357" y="1245.3" font-size="21.5" fill="#151515" textLength="278" lengthAdjust="spacing" stroke="#151515" stroke-width="0.5" >Analog Slow Sweep Pad.adv</text>
<rect x="279.5" y="1260.5" width="672.5" height="37.5" fill="#a1cdd3"/>
<rect x="317" y="1267.2" width="29.5" height="20" fill="none" rx="1.5" stroke="#151515" stroke-width="2.2"/>
<line x1="317" y1="1273.7" x2="346.5" y2="1273.7" stroke="#151515" stroke-width="2.2" />
<text x="357" y="1284.9" font-size="21.5" fill="#151515" textLength="256" lengthAdjust="spacing" stroke="#151515" stroke-width="0.5" >Drifting Ambient Pad.adv</text>
<rect x="317" y="1306.8" width="29.5" height="20" fill="none" rx="1.5" stroke="#151515" stroke-width="2.2"/>
<line x1="317" y1="1313.3" x2="346.5" y2="1313.3" stroke="#151515" stroke-width="2.2" />
<line x1="331.7" y1="1313.3" x2="331.7" y2="1326.8" stroke="#151515" stroke-width="2.2" />
<text x="357" y="1324.5" font-size="21.5" fill="#151515" textLength="155.8" lengthAdjust="spacing" stroke="#151515" stroke-width="0.5" >Dunkel Pad.adg</text>
<rect x="317" y="1346.4" width="29.5" height="20" fill="none" rx="1.5" stroke="#151515" stroke-width="2.2"/>
<line x1="317" y1="1352.9" x2="346.5" y2="1352.9" stroke="#151515" stroke-width="2.2" />
<text x="357" y="1364.1" font-size="21.5" fill="#151515" textLength="161.5" lengthAdjust="spacing" stroke="#151515" stroke-width="0.5" >Fizzling Pad.adv</text>
<rect x="317" y="1386" width="29.5" height="20" fill="none" rx="1.5" stroke="#151515" stroke-width="2.2"/>
<line x1="317" y1="1392.5" x2="346.5" y2="1392.5" stroke="#151515" stroke-width="2.2" />
<text x="357" y="1403.7" font-size="21.5" fill="#151515" textLength="239.6" lengthAdjust="spacing" stroke="#151515" stroke-width="0.5" >Glass Thin Pure Pad.adv</text>
<rect x="317" y="1425.6" width="29.5" height="20" fill="none" rx="1.5" stroke="#151515" stroke-width="2.2"/>
<line x1="317" y1="1432.1" x2="346.5" y2="1432.1" stroke="#151515" stroke-width="2.2" />
<text x="357" y="1443.3" font-size="21.5" fill="#151515" textLength="163.6" lengthAdjust="spacing" stroke="#151515" stroke-width="0.5" >Morgen Pad.adv</text>
<rect x="317" y="1465.2" width="29.5" height="20" fill="none" rx="1.5" stroke="#151515" stroke-width="2.2"/>
<line x1="317" y1="1471.7" x2="346.5" y2="1471.7" stroke="#151515" stroke-width="2.2" />
<line x1="331.7" y1="1471.7" x2="331.7" y2="1485.2" stroke="#151515" stroke-width="2.2" />
<text x="357" y="1482.9" font-size="21.5" fill="#151515" textLength="247" lengthAdjust="spacing" stroke="#151515" stroke-width="0.5" >MPE Con Amore Pad.adg</text>
<rect x="317" y="1504.8" width="29.5" height="20" fill="none" rx="1.5" stroke="#151515" stroke-width="2.2"/>
<line x1="317" y1="1511.3" x2="346.5" y2="1511.3" stroke="#151515" stroke-width="2.2" />
<line x1="331.7" y1="1511.3" x2="331.7" y2="1524.8" stroke="#151515" stroke-width="2.2" />
<text x="357" y="1522.5" font-size="21.5" fill="#151515" textLength="285" lengthAdjust="spacing" stroke="#151515" stroke-width="0.5" >MPE Dream Grain Drone.adg</text>
<rect x="317" y="1544.4" width="29.5" height="20" fill="none" rx="1.5" stroke="#151515" stroke-width="2.2"/>
<line x1="317" y1="1550.9" x2="346.5" y2="1550.9" stroke="#151515" stroke-width="2.2" />
<text x="357" y="1562.1" font-size="21.5" fill="#151515" textLength="283" lengthAdjust="spacing" stroke="#151515" stroke-width="0.5" >Muted Noise Sweep Pad.adv</text>
<rect x="317" y="1584" width="29.5" height="20" fill="none" rx="1.5" stroke="#151515" stroke-width="2.2"/>
<line x1="317" y1="1590.5" x2="346.5" y2="1590.5" stroke="#151515" stroke-width="2.2" />
<text x="357" y="1601.7" font-size="21.5" fill="#151515" textLength="264.5" lengthAdjust="spacing" stroke="#151515" stroke-width="0.5" >Orchestral Sweep Pad.adv</text>
<rect x="317" y="1623.6" width="29.5" height="20" fill="none" rx="1.5" stroke="#151515" stroke-width="2.2"/>
<line x1="317" y1="1630.1" x2="346.5" y2="1630.1" stroke="#151515" stroke-width="2.2" />
<line x1="331.7" y1="1630.1" x2="331.7" y2="1643.6" stroke="#151515" stroke-width="2.2" />
<text x="357" y="1641.3" font-size="21.5" fill="#151515" textLength="204.5" lengthAdjust="spacing" stroke="#151515" stroke-width="0.5" >Organ Incoming.adg</text>
<rect x="317" y="1663.2" width="29.5" height="20" fill="none" rx="1.5" stroke="#151515" stroke-width="2.2"/>
<line x1="317" y1="1669.7" x2="346.5" y2="1669.7" stroke="#151515" stroke-width="2.2" />
<text x="357" y="1680.9" font-size="21.5" fill="#151515" textLength="187.4" lengthAdjust="spacing" stroke="#151515" stroke-width="0.5" >Panorama Pad.adv</text>
<rect x="317" y="1702.8" width="29.5" height="20" fill="none" rx="1.5" stroke="#151515" stroke-width="2.2"/>
<line x1="317" y1="1709.3" x2="346.5" y2="1709.3" stroke="#151515" stroke-width="2.2" />
<text x="357" y="1720.5" font-size="21.5" fill="#151515" textLength="142.9" lengthAdjust="spacing" stroke="#151515" stroke-width="0.5" >Shark Pad.adv</text>
<rect x="317" y="1742.4" width="29.5" height="20" fill="none" rx="1.5" stroke="#151515" stroke-width="2.2"/>
<line x1="317" y1="1748.9" x2="346.5" y2="1748.9" stroke="#151515" stroke-width="2.2" />
<line x1="331.7" y1="1748.9" x2="331.7" y2="1762.4" stroke="#151515" stroke-width="2.2" />
<text x="357" y="1760.1" font-size="21.5" fill="#151515" textLength="203.4" lengthAdjust="spacing" stroke="#151515" stroke-width="0.5" >Slow Drown Pad.adg</text>
<rect x="317" y="1782" width="29.5" height="20" fill="none" rx="1.5" stroke="#151515" stroke-width="2.2"/>
<line x1="317" y1="1788.5" x2="346.5" y2="1788.5" stroke="#151515" stroke-width="2.2" />
<text x="357" y="1799.7" font-size="21.5" fill="#151515" textLength="202.9" lengthAdjust="spacing" stroke="#151515" stroke-width="0.5" >Slow Sweep Pad.adv</text>
<rect x="317" y="1821.6" width="29.5" height="20" fill="none" rx="1.5" stroke="#151515" stroke-width="2.2"/>
<line x1="317" y1="1828.1" x2="346.5" y2="1828.1" stroke="#151515" stroke-width="2.2" />
<text x="357" y="1839.3" font-size="21.5" fill="#151515" textLength="353" lengthAdjust="spacing" stroke="#151515" stroke-width="0.5" >Soft Shimmer Filter Sweep Pad.adv</text>
<rect x="317" y="1861.2" width="29.5" height="20" fill="none" rx="1.5" stroke="#151515" stroke-width="2.2"/>
<line x1="317" y1="1867.7" x2="346.5" y2="1867.7" stroke="#151515" stroke-width="2.2" />
<line x1="331.7" y1="1867.7" x2="331.7" y2="1881.2" stroke="#151515" stroke-width="2.2" />
<text x="357" y="1878.9" font-size="21.5" fill="#151515" textLength="169.8" lengthAdjust="spacing" stroke="#151515" stroke-width="0.5" >Tizzy Carpet.adg</text>
<rect x="279.5" y="1889" width="672.5" height="3.5" fill="#7d7d7d"/>
<circle cx="300.7" cy="1913.7" r="12.5" fill="#d0d0d0" stroke="#444" stroke-width="2" />
<path d="M293.5 1916a7.2 7.2 0 0 1 14.4 0" fill="none" stroke="#444" stroke-width="2.2" />
<rect x="292.5" y="1915" width="3.5" height="6" fill="#444"/>
<rect x="305.4" y="1915" width="3.5" height="6" fill="#444"/>
<path d="M323.5 1912.5L328.1 1912.5L332.7 1912.5L337.3 1912.5L341.9 1912.5L346.5 1912.5L351.1 1912.5L355.7 1912.5L360.3 1912.5L364.9 1912.5L369.5 1912.3L374.1 1912L378.8 1911.7L383.4 1911.7L388 1911.6L392.6 1911.3L397.2 1910.8L401.8 1910.6L406.4 1910.2L411 1910.3L415.6 1909.4L420.2 1909.2L424.8 1908.9L429.4 1908.5L434 1907.9L438.6 1905.9L443.2 1905.8L447.8 1905.7L452.4 1905.8L457 1907.4L461.6 1907.4L466.2 1907.1L470.8 1907.3L475.4 1907.5L480 1907.7L484.6 1909.1L489.2 1908.2L493.9 1907.8L498.5 1907.7L503.1 1907.8L507.7 1906.4L512.3 1906.7L516.9 1903.4L521.5 1902.8L526.1 1903.2L530.7 1903.8L535.3 1901.2L539.9 1902.6L544.5 1901.7L549.1 1902.3L553.7 1904.2L558.3 1905.2L562.9 1905.4L567.5 1906.5L572.1 1907.6L576.7 1907.6L581.3 1906.6L585.9 1908.1L590.5 1907.8L595.1 1905.9L599.8 1906.1L604.4 1904.6L609 1904L613.6 1903.8L618.2 1900.7L622.8 1903.5L627.4 1902.5L632 1903.5L636.6 1902.1L641.2 1904L645.8 1904.4L650.4 1904L655 1906.1L659.6 1906.2L664.2 1906.1L668.8 1908.3L673.4 1908.6L678 1908.3L682.6 1907.1L687.2 1907.1L691.8 1907.4L696.4 1906.7L701 1906.6L705.6 1905.4L710.2 1906.3L714.9 1904.1L719.5 1903.5L724.1 1903.5L728.7 1904.6L733.3 1904.6L737.9 1907.6L742.5 1907.6L747.1 1906.9L751.7 1908L756.3 1909.1L760.9 1908.9L765.5 1909.6L770.1 1909.6L774.7 1910.2L779.3 1910.3L783.9 1910L788.5 1910.2L793.1 1909.9L797.7 1909.3L802.3 1910.1L806.9 1910.6L811.5 1910.8L816.1 1911L820.8 1911.1L825.4 1911.7L830 1912.2L834.6 1912.5L839.2 1912.5L843.8 1912.5L848.4 1912.5L853 1912.5L857.6 1912.5L862.2 1912.5L866.8 1912.5L871.4 1912.5L876 1912.5L876 1914.8L871.4 1914.8L866.8 1914.8L862.2 1914.8L857.6 1914.8L853 1914.8L848.4 1914.8L843.8 1914.8L839.2 1914.8L834.6 1914.8L830 1915L825.4 1915.5L820.8 1916.1L816.1 1916.1L811.5 1916.3L806.9 1916.5L802.3 1917L797.7 1917.6L793.1 1917.1L788.5 1916.8L783.9 1917L779.3 1916.8L774.7 1916.8L770.1 1917.4L765.5 1917.4L760.9 1918L756.3 1917.8L751.7 1918.8L747.1 1919.8L742.5 1919.2L737.9 1919.2L733.3 1921.9L728.7 1921.9L724.1 1922.8L719.5 1922.9L714.9 1922.3L710.2 1920.3L705.6 1921.2L701 1920.1L696.4 1920L691.8 1919.3L687.2 1919.7L682.6 1919.6L678 1918.6L673.4 1918.3L668.8 1918.6L664.2 1920.5L659.6 1920.4L655 1920.6L650.4 1922.4L645.8 1922L641.2 1922.4L636.6 1924.1L632 1922.9L627.4 1923.8L622.8 1922.9L618.2 1925.4L613.6 1922.6L609 1922.4L604.4 1921.9L599.8 1920.5L595.1 1920.7L590.5 1919L585.9 1918.7L581.3 1920.1L576.7 1919.2L572.1 1919.2L567.5 1920.2L562.9 1921.2L558.3 1921.4L553.7 1922.3L549.1 1923.9L544.5 1924.5L539.9 1923.7L535.3 1924.9L530.7 1922.7L526.1 1923.1L521.5 1923.5L516.9 1923L512.3 1920L507.7 1920.3L503.1 1919L498.5 1919.1L493.9 1919L489.2 1918.6L484.6 1917.8L480 1919.1L475.4 1919.3L470.8 1919.4L466.2 1919.6L461.6 1919.3L457 1919.4L452.4 1920.8L447.8 1920.9L443.2 1920.8L438.6 1920.7L434 1919L429.4 1918.4L424.8 1918.1L420.2 1917.7L415.6 1917.5L411 1916.8L406.4 1916.8L401.8 1916.5L397.2 1916.3L392.6 1915.9L388 1915.6L383.4 1915.5L378.8 1915.5L374.1 1915.2L369.5 1915L364.9 1914.8L360.3 1914.8L355.7 1914.8L351.1 1914.8L346.5 1914.8L341.9 1914.8L337.3 1914.8L332.7 1914.8L328.1 1914.8L323.5 1914.8z" fill="#868686" />
<rect x="885.6" y="1901" width="57.4" height="25" fill="#d6d6d6" stroke="#444" stroke-width="1.6"/>
<text x="914.3" y="1921.4" font-size="21.5" fill="#151515" text-anchor="middle" textLength="40" lengthAdjust="spacing" stroke="#151515" stroke-width="0.5" >Raw</text>
<path d="M971 1465V684q0 -8.5 8.5 -8.5H2972.5q8.5 0 8.5 8.5V1465z" fill="#a9a9a9" />
<rect x="971" y="710" width="1743" height="48" fill="#a9a9a9"/>
<rect x="971" y="710" width="169.3" height="48" fill="#9f9f9f"/>
<rect x="1368.8" y="710" width="228.6" height="48" fill="#9f9f9f"/>
<rect x="1826" y="710" width="228.6" height="48" fill="#9f9f9f"/>
<rect x="2283.1" y="710" width="228.6" height="48" fill="#9f9f9f"/>
<path d="M1026 710V758M1083.1 710V758M1140.3 710V758M1197.4 710V758M1254.6 710V758M1311.7 710V758M1368.8 710V758M1426 710V758M1483.1 710V758M1540.3 710V758M1597.4 710V758M1654.5 710V758M1711.7 710V758M1768.8 710V758M1826 710V758M1883.1 710V758M1940.2 710V758M1997.4 710V758M2054.5 710V758M2111.7 710V758M2168.8 710V758M2225.9 710V758M2283.1 710V758M2340.2 710V758M2397.4 710V758M2454.5 710V758M2511.6 710V758M2568.8 710V758M2625.9 710V758M2683.1 710V758" fill="none" stroke="rgba(0,0,0,0.13)" stroke-width="1.6" />
<path d="M997.4 710V758M1054.6 710V758M1111.7 710V758M1168.8 710V758M1226 710V758M1283.1 710V758M1340.3 710V758M1397.4 710V758M1454.5 710V758M1511.7 710V758M1568.8 710V758M1626 710V758M1683.1 710V758M1740.2 710V758M1797.4 710V758M1854.5 710V758M1911.7 710V758M1968.8 710V758M2026 710V758M2083.1 710V758M2140.2 710V758M2197.4 710V758M2254.5 710V758M2311.7 710V758M2368.8 710V758M2425.9 710V758M2483.1 710V758M2540.2 710V758M2597.3 710V758M2654.5 710V758M2711.6 710V758" fill="none" stroke="rgba(0,0,0,0.07)" stroke-width="1.6" />
<line x1="1026" y1="696" x2="1026" y2="710" stroke="#7a7a7a" stroke-width="1.6" />
<text x="1035" y="706.7" font-size="21.5" fill="#3c3c3c" textLength="25" lengthAdjust="spacing" stroke="#3c3c3c" stroke-width="0.2" >43</text>
<line x1="1083.1" y1="706" x2="1083.1" y2="710" stroke="#7a7a7a" stroke-width="1.6" />
<line x1="1140.3" y1="696" x2="1140.3" y2="710" stroke="#7a7a7a" stroke-width="1.6" />
<text x="1149.3" y="706.7" font-size="21.5" fill="#3c3c3c" textLength="25" lengthAdjust="spacing" stroke="#3c3c3c" stroke-width="0.2" >45</text>
<line x1="1197.4" y1="706" x2="1197.4" y2="710" stroke="#7a7a7a" stroke-width="1.6" />
<line x1="1254.6" y1="696" x2="1254.6" y2="710" stroke="#7a7a7a" stroke-width="1.6" />
<text x="1263.6" y="706.7" font-size="21.5" fill="#3c3c3c" textLength="25" lengthAdjust="spacing" stroke="#3c3c3c" stroke-width="0.2" >47</text>
<line x1="1311.7" y1="706" x2="1311.7" y2="710" stroke="#7a7a7a" stroke-width="1.6" />
<line x1="1368.8" y1="696" x2="1368.8" y2="710" stroke="#7a7a7a" stroke-width="1.6" />
<text x="1377.8" y="706.7" font-size="21.5" fill="#3c3c3c" textLength="25" lengthAdjust="spacing" stroke="#3c3c3c" stroke-width="0.2" >49</text>
<line x1="1426" y1="706" x2="1426" y2="710" stroke="#7a7a7a" stroke-width="1.6" />
<line x1="1483.1" y1="696" x2="1483.1" y2="710" stroke="#7a7a7a" stroke-width="1.6" />
<text x="1492.1" y="706.7" font-size="21.5" fill="#3c3c3c" textLength="25" lengthAdjust="spacing" stroke="#3c3c3c" stroke-width="0.2" >51</text>
<line x1="1540.3" y1="706" x2="1540.3" y2="710" stroke="#7a7a7a" stroke-width="1.6" />
<line x1="1597.4" y1="696" x2="1597.4" y2="710" stroke="#7a7a7a" stroke-width="1.6" />
<text x="1606.4" y="706.7" font-size="21.5" fill="#3c3c3c" textLength="25" lengthAdjust="spacing" stroke="#3c3c3c" stroke-width="0.2" >53</text>
<line x1="1654.5" y1="706" x2="1654.5" y2="710" stroke="#7a7a7a" stroke-width="1.6" />
<line x1="1711.7" y1="696" x2="1711.7" y2="710" stroke="#7a7a7a" stroke-width="1.6" />
<text x="1720.7" y="706.7" font-size="21.5" fill="#3c3c3c" textLength="25" lengthAdjust="spacing" stroke="#3c3c3c" stroke-width="0.2" >55</text>
<line x1="1768.8" y1="706" x2="1768.8" y2="710" stroke="#7a7a7a" stroke-width="1.6" />
<line x1="1826" y1="696" x2="1826" y2="710" stroke="#7a7a7a" stroke-width="1.6" />
<text x="1835" y="706.7" font-size="21.5" fill="#3c3c3c" textLength="25" lengthAdjust="spacing" stroke="#3c3c3c" stroke-width="0.2" >57</text>
<line x1="1883.1" y1="706" x2="1883.1" y2="710" stroke="#7a7a7a" stroke-width="1.6" />
<line x1="1940.2" y1="696" x2="1940.2" y2="710" stroke="#7a7a7a" stroke-width="1.6" />
<text x="1949.2" y="706.7" font-size="21.5" fill="#3c3c3c" textLength="25" lengthAdjust="spacing" stroke="#3c3c3c" stroke-width="0.2" >59</text>
<line x1="1997.4" y1="706" x2="1997.4" y2="710" stroke="#7a7a7a" stroke-width="1.6" />
<line x1="2054.5" y1="696" x2="2054.5" y2="710" stroke="#7a7a7a" stroke-width="1.6" />
<text x="2063.5" y="706.7" font-size="21.5" fill="#3c3c3c" textLength="25" lengthAdjust="spacing" stroke="#3c3c3c" stroke-width="0.2" >61</text>
<line x1="2111.7" y1="706" x2="2111.7" y2="710" stroke="#7a7a7a" stroke-width="1.6" />
<line x1="2168.8" y1="696" x2="2168.8" y2="710" stroke="#7a7a7a" stroke-width="1.6" />
<text x="2177.8" y="706.7" font-size="21.5" fill="#3c3c3c" textLength="25" lengthAdjust="spacing" stroke="#3c3c3c" stroke-width="0.2" >63</text>
<line x1="2225.9" y1="706" x2="2225.9" y2="710" stroke="#7a7a7a" stroke-width="1.6" />
<line x1="2283.1" y1="696" x2="2283.1" y2="710" stroke="#7a7a7a" stroke-width="1.6" />
<text x="2292.1" y="706.7" font-size="21.5" fill="#3c3c3c" textLength="25" lengthAdjust="spacing" stroke="#3c3c3c" stroke-width="0.2" >65</text>
<line x1="2340.2" y1="706" x2="2340.2" y2="710" stroke="#7a7a7a" stroke-width="1.6" />
<line x1="2397.4" y1="696" x2="2397.4" y2="710" stroke="#7a7a7a" stroke-width="1.6" />
<text x="2406.4" y="706.7" font-size="21.5" fill="#3c3c3c" textLength="25" lengthAdjust="spacing" stroke="#3c3c3c" stroke-width="0.2" >67</text>
<line x1="2454.5" y1="706" x2="2454.5" y2="710" stroke="#7a7a7a" stroke-width="1.6" />
<line x1="2511.6" y1="696" x2="2511.6" y2="710" stroke="#7a7a7a" stroke-width="1.6" />
<text x="2520.6" y="706.7" font-size="21.5" fill="#3c3c3c" textLength="25" lengthAdjust="spacing" stroke="#3c3c3c" stroke-width="0.2" >69</text>
<line x1="2568.8" y1="706" x2="2568.8" y2="710" stroke="#7a7a7a" stroke-width="1.6" />
<line x1="2625.9" y1="696" x2="2625.9" y2="710" stroke="#7a7a7a" stroke-width="1.6" />
<text x="2634.9" y="706.7" font-size="21.5" fill="#3c3c3c" textLength="25" lengthAdjust="spacing" stroke="#3c3c3c" stroke-width="0.2" >71</text>
<line x1="2683.1" y1="706" x2="2683.1" y2="710" stroke="#7a7a7a" stroke-width="1.6" />
<rect x="971" y="762.5" width="1743" height="50.5" fill="#a9a9a9"/>
<rect x="971" y="762.5" width="169.3" height="50.5" fill="#9f9f9f"/>
<rect x="1368.8" y="762.5" width="228.6" height="50.5" fill="#9f9f9f"/>
<rect x="1826" y="762.5" width="228.6" height="50.5" fill="#9f9f9f"/>
<rect x="2283.1" y="762.5" width="228.6" height="50.5" fill="#9f9f9f"/>
<path d="M1026 762.5V813M1083.1 762.5V813M1140.3 762.5V813M1197.4 762.5V813M1254.6 762.5V813M1311.7 762.5V813M1368.8 762.5V813M1426 762.5V813M1483.1 762.5V813M1540.3 762.5V813M1597.4 762.5V813M1654.5 762.5V813M1711.7 762.5V813M1768.8 762.5V813M1826 762.5V813M1883.1 762.5V813M1940.2 762.5V813M1997.4 762.5V813M2054.5 762.5V813M2111.7 762.5V813M2168.8 762.5V813M2225.9 762.5V813M2283.1 762.5V813M2340.2 762.5V813M2397.4 762.5V813M2454.5 762.5V813M2511.6 762.5V813M2568.8 762.5V813M2625.9 762.5V813M2683.1 762.5V813" fill="none" stroke="rgba(0,0,0,0.13)" stroke-width="1.6" />
<path d="M997.4 762.5V813M1054.6 762.5V813M1111.7 762.5V813M1168.8 762.5V813M1226 762.5V813M1283.1 762.5V813M1340.3 762.5V813M1397.4 762.5V813M1454.5 762.5V813M1511.7 762.5V813M1568.8 762.5V813M1626 762.5V813M1683.1 762.5V813M1740.2 762.5V813M1797.4 762.5V813M1854.5 762.5V813M1911.7 762.5V813M1968.8 762.5V813M2026 762.5V813M2083.1 762.5V813M2140.2 762.5V813M2197.4 762.5V813M2254.5 762.5V813M2311.7 762.5V813M2368.8 762.5V813M2425.9 762.5V813M2483.1 762.5V813M2540.2 762.5V813M2597.3 762.5V813M2654.5 762.5V813M2711.6 762.5V813" fill="none" stroke="rgba(0,0,0,0.07)" stroke-width="1.6" />
<rect x="971" y="817" width="1743" height="35" fill="#a9a9a9"/>
<rect x="971" y="817" width="169.3" height="35" fill="#9f9f9f"/>
<rect x="1368.8" y="817" width="228.6" height="35" fill="#9f9f9f"/>
<rect x="1826" y="817" width="228.6" height="35" fill="#9f9f9f"/>
<rect x="2283.1" y="817" width="228.6" height="35" fill="#9f9f9f"/>
<path d="M1026 817V852M1083.1 817V852M1140.3 817V852M1197.4 817V852M1254.6 817V852M1311.7 817V852M1368.8 817V852M1426 817V852M1483.1 817V852M1540.3 817V852M1597.4 817V852M1654.5 817V852M1711.7 817V852M1768.8 817V852M1826 817V852M1883.1 817V852M1940.2 817V852M1997.4 817V852M2054.5 817V852M2111.7 817V852M2168.8 817V852M2225.9 817V852M2283.1 817V852M2340.2 817V852M2397.4 817V852M2454.5 817V852M2511.6 817V852M2568.8 817V852M2625.9 817V852M2683.1 817V852" fill="none" stroke="rgba(0,0,0,0.13)" stroke-width="1.6" />
<path d="M997.4 817V852M1054.6 817V852M1111.7 817V852M1168.8 817V852M1226 817V852M1283.1 817V852M1340.3 817V852M1397.4 817V852M1454.5 817V852M1511.7 817V852M1568.8 817V852M1626 817V852M1683.1 817V852M1740.2 817V852M1797.4 817V852M1854.5 817V852M1911.7 817V852M1968.8 817V852M2026 817V852M2083.1 817V852M2140.2 817V852M2197.4 817V852M2254.5 817V852M2311.7 817V852M2368.8 817V852M2425.9 817V852M2483.1 817V852M2540.2 817V852M2597.3 817V852M2654.5 817V852M2711.6 817V852" fill="none" stroke="rgba(0,0,0,0.07)" stroke-width="1.6" />
<rect x="971" y="856.5" width="1743" height="35.5" fill="#a9a9a9"/>
<rect x="971" y="856.5" width="169.3" height="35.5" fill="#9f9f9f"/>
<rect x="1368.8" y="856.5" width="228.6" height="35.5" fill="#9f9f9f"/>
<rect x="1826" y="856.5" width="228.6" height="35.5" fill="#9f9f9f"/>
<rect x="2283.1" y="856.5" width="228.6" height="35.5" fill="#9f9f9f"/>
<path d="M1026 856.5V892M1083.1 856.5V892M1140.3 856.5V892M1197.4 856.5V892M1254.6 856.5V892M1311.7 856.5V892M1368.8 856.5V892M1426 856.5V892M1483.1 856.5V892M1540.3 856.5V892M1597.4 856.5V892M1654.5 856.5V892M1711.7 856.5V892M1768.8 856.5V892M1826 856.5V892M1883.1 856.5V892M1940.2 856.5V892M1997.4 856.5V892M2054.5 856.5V892M2111.7 856.5V892M2168.8 856.5V892M2225.9 856.5V892M2283.1 856.5V892M2340.2 856.5V892M2397.4 856.5V892M2454.5 856.5V892M2511.6 856.5V892M2568.8 856.5V892M2625.9 856.5V892M2683.1 856.5V892" fill="none" stroke="rgba(0,0,0,0.13)" stroke-width="1.6" />
<path d="M997.4 856.5V892M1054.6 856.5V892M1111.7 856.5V892M1168.8 856.5V892M1226 856.5V892M1283.1 856.5V892M1340.3 856.5V892M1397.4 856.5V892M1454.5 856.5V892M1511.7 856.5V892M1568.8 856.5V892M1626 856.5V892M1683.1 856.5V892M1740.2 856.5V892M1797.4 856.5V892M1854.5 856.5V892M1911.7 856.5V892M1968.8 856.5V892M2026 856.5V892M2083.1 856.5V892M2140.2 856.5V892M2197.4 856.5V892M2254.5 856.5V892M2311.7 856.5V892M2368.8 856.5V892M2425.9 856.5V892M2483.1 856.5V892M2540.2 856.5V892M2597.3 856.5V892M2654.5 856.5V892M2711.6 856.5V892" fill="none" stroke="rgba(0,0,0,0.07)" stroke-width="1.6" />
<rect x="971" y="896.5" width="1743" height="34.5" fill="#a9a9a9"/>
<rect x="971" y="896.5" width="169.3" height="34.5" fill="#9f9f9f"/>
<rect x="1368.8" y="896.5" width="228.6" height="34.5" fill="#9f9f9f"/>
<rect x="1826" y="896.5" width="228.6" height="34.5" fill="#9f9f9f"/>
<rect x="2283.1" y="896.5" width="228.6" height="34.5" fill="#9f9f9f"/>
<path d="M1026 896.5V931M1083.1 896.5V931M1140.3 896.5V931M1197.4 896.5V931M1254.6 896.5V931M1311.7 896.5V931M1368.8 896.5V931M1426 896.5V931M1483.1 896.5V931M1540.3 896.5V931M1597.4 896.5V931M1654.5 896.5V931M1711.7 896.5V931M1768.8 896.5V931M1826 896.5V931M1883.1 896.5V931M1940.2 896.5V931M1997.4 896.5V931M2054.5 896.5V931M2111.7 896.5V931M2168.8 896.5V931M2225.9 896.5V931M2283.1 896.5V931M2340.2 896.5V931M2397.4 896.5V931M2454.5 896.5V931M2511.6 896.5V931M2568.8 896.5V931M2625.9 896.5V931M2683.1 896.5V931" fill="none" stroke="rgba(0,0,0,0.13)" stroke-width="1.6" />
<path d="M997.4 896.5V931M1054.6 896.5V931M1111.7 896.5V931M1168.8 896.5V931M1226 896.5V931M1283.1 896.5V931M1340.3 896.5V931M1397.4 896.5V931M1454.5 896.5V931M1511.7 896.5V931M1568.8 896.5V931M1626 896.5V931M1683.1 896.5V931M1740.2 896.5V931M1797.4 896.5V931M1854.5 896.5V931M1911.7 896.5V931M1968.8 896.5V931M2026 896.5V931M2083.1 896.5V931M2140.2 896.5V931M2197.4 896.5V931M2254.5 896.5V931M2311.7 896.5V931M2368.8 896.5V931M2425.9 896.5V931M2483.1 896.5V931M2540.2 896.5V931M2597.3 896.5V931M2654.5 896.5V931M2711.6 896.5V931" fill="none" stroke="rgba(0,0,0,0.07)" stroke-width="1.6" />
<rect x="971" y="935.5" width="1743" height="74" fill="#a9a9a9"/>
<rect x="971" y="935.5" width="169.3" height="74" fill="#9f9f9f"/>
<rect x="1368.8" y="935.5" width="228.6" height="74" fill="#9f9f9f"/>
<rect x="1826" y="935.5" width="228.6" height="74" fill="#9f9f9f"/>
<rect x="2283.1" y="935.5" width="228.6" height="74" fill="#9f9f9f"/>
<path d="M1026 935.5V1009.5M1083.1 935.5V1009.5M1140.3 935.5V1009.5M1197.4 935.5V1009.5M1254.6 935.5V1009.5M1311.7 935.5V1009.5M1368.8 935.5V1009.5M1426 935.5V1009.5M1483.1 935.5V1009.5M1540.3 935.5V1009.5M1597.4 935.5V1009.5M1654.5 935.5V1009.5M1711.7 935.5V1009.5M1768.8 935.5V1009.5M1826 935.5V1009.5M1883.1 935.5V1009.5M1940.2 935.5V1009.5M1997.4 935.5V1009.5M2054.5 935.5V1009.5M2111.7 935.5V1009.5M2168.8 935.5V1009.5M2225.9 935.5V1009.5M2283.1 935.5V1009.5M2340.2 935.5V1009.5M2397.4 935.5V1009.5M2454.5 935.5V1009.5M2511.6 935.5V1009.5M2568.8 935.5V1009.5M2625.9 935.5V1009.5M2683.1 935.5V1009.5" fill="none" stroke="rgba(0,0,0,0.13)" stroke-width="1.6" />
<path d="M997.4 935.5V1009.5M1054.6 935.5V1009.5M1111.7 935.5V1009.5M1168.8 935.5V1009.5M1226 935.5V1009.5M1283.1 935.5V1009.5M1340.3 935.5V1009.5M1397.4 935.5V1009.5M1454.5 935.5V1009.5M1511.7 935.5V1009.5M1568.8 935.5V1009.5M1626 935.5V1009.5M1683.1 935.5V1009.5M1740.2 935.5V1009.5M1797.4 935.5V1009.5M1854.5 935.5V1009.5M1911.7 935.5V1009.5M1968.8 935.5V1009.5M2026 935.5V1009.5M2083.1 935.5V1009.5M2140.2 935.5V1009.5M2197.4 935.5V1009.5M2254.5 935.5V1009.5M2311.7 935.5V1009.5M2368.8 935.5V1009.5M2425.9 935.5V1009.5M2483.1 935.5V1009.5M2540.2 935.5V1009.5M2597.3 935.5V1009.5M2654.5 935.5V1009.5M2711.6 935.5V1009.5" fill="none" stroke="rgba(0,0,0,0.07)" stroke-width="1.6" />
<rect x="971" y="1013" width="1743" height="178.5" fill="#c2c2c2"/>
<rect x="971" y="1013" width="169.3" height="178.5" fill="#b5b5b5"/>
<rect x="1368.8" y="1013" width="228.6" height="178.5" fill="#b5b5b5"/>
<rect x="1826" y="1013" width="228.6" height="178.5" fill="#b5b5b5"/>
<rect x="2283.1" y="1013" width="228.6" height="178.5" fill="#b5b5b5"/>
<path d="M1026 1013V1191.5M1083.1 1013V1191.5M1140.3 1013V1191.5M1197.4 1013V1191.5M1254.6 1013V1191.5M1311.7 1013V1191.5M1368.8 1013V1191.5M1426 1013V1191.5M1483.1 1013V1191.5M1540.3 1013V1191.5M1597.4 1013V1191.5M1654.5 1013V1191.5M1711.7 1013V1191.5M1768.8 1013V1191.5M1826 1013V1191.5M1883.1 1013V1191.5M1940.2 1013V1191.5M1997.4 1013V1191.5M2054.5 1013V1191.5M2111.7 1013V1191.5M2168.8 1013V1191.5M2225.9 1013V1191.5M2283.1 1013V1191.5M2340.2 1013V1191.5M2397.4 1013V1191.5M2454.5 1013V1191.5M2511.6 1013V1191.5M2568.8 1013V1191.5M2625.9 1013V1191.5M2683.1 1013V1191.5" fill="none" stroke="rgba(0,0,0,0.13)" stroke-width="1.6" />
<path d="M997.4 1013V1191.5M1054.6 1013V1191.5M1111.7 1013V1191.5M1168.8 1013V1191.5M1226 1013V1191.5M1283.1 1013V1191.5M1340.3 1013V1191.5M1397.4 1013V1191.5M1454.5 1013V1191.5M1511.7 1013V1191.5M1568.8 1013V1191.5M1626 1013V1191.5M1683.1 1013V1191.5M1740.2 1013V1191.5M1797.4 1013V1191.5M1854.5 1013V1191.5M1911.7 1013V1191.5M1968.8 1013V1191.5M2026 1013V1191.5M2083.1 1013V1191.5M2140.2 1013V1191.5M2197.4 1013V1191.5M2254.5 1013V1191.5M2311.7 1013V1191.5M2368.8 1013V1191.5M2425.9 1013V1191.5M2483.1 1013V1191.5M2540.2 1013V1191.5M2597.3 1013V1191.5M2654.5 1013V1191.5M2711.6 1013V1191.5" fill="none" stroke="rgba(0,0,0,0.07)" stroke-width="1.6" />
<rect x="971" y="1195.5" width="1743" height="35.5" fill="#a9a9a9"/>
<rect x="971" y="1195.5" width="169.3" height="35.5" fill="#9f9f9f"/>
<rect x="1368.8" y="1195.5" width="228.6" height="35.5" fill="#9f9f9f"/>
<rect x="1826" y="1195.5" width="228.6" height="35.5" fill="#9f9f9f"/>
<rect x="2283.1" y="1195.5" width="228.6" height="35.5" fill="#9f9f9f"/>
<path d="M1026 1195.5V1231M1083.1 1195.5V1231M1140.3 1195.5V1231M1197.4 1195.5V1231M1254.6 1195.5V1231M1311.7 1195.5V1231M1368.8 1195.5V1231M1426 1195.5V1231M1483.1 1195.5V1231M1540.3 1195.5V1231M1597.4 1195.5V1231M1654.5 1195.5V1231M1711.7 1195.5V1231M1768.8 1195.5V1231M1826 1195.5V1231M1883.1 1195.5V1231M1940.2 1195.5V1231M1997.4 1195.5V1231M2054.5 1195.5V1231M2111.7 1195.5V1231M2168.8 1195.5V1231M2225.9 1195.5V1231M2283.1 1195.5V1231M2340.2 1195.5V1231M2397.4 1195.5V1231M2454.5 1195.5V1231M2511.6 1195.5V1231M2568.8 1195.5V1231M2625.9 1195.5V1231M2683.1 1195.5V1231" fill="none" stroke="rgba(0,0,0,0.13)" stroke-width="1.6" />
<path d="M997.4 1195.5V1231M1054.6 1195.5V1231M1111.7 1195.5V1231M1168.8 1195.5V1231M1226 1195.5V1231M1283.1 1195.5V1231M1340.3 1195.5V1231M1397.4 1195.5V1231M1454.5 1195.5V1231M1511.7 1195.5V1231M1568.8 1195.5V1231M1626 1195.5V1231M1683.1 1195.5V1231M1740.2 1195.5V1231M1797.4 1195.5V1231M1854.5 1195.5V1231M1911.7 1195.5V1231M1968.8 1195.5V1231M2026 1195.5V1231M2083.1 1195.5V1231M2140.2 1195.5V1231M2197.4 1195.5V1231M2254.5 1195.5V1231M2311.7 1195.5V1231M2368.8 1195.5V1231M2425.9 1195.5V1231M2483.1 1195.5V1231M2540.2 1195.5V1231M2597.3 1195.5V1231M2654.5 1195.5V1231M2711.6 1195.5V1231" fill="none" stroke="rgba(0,0,0,0.07)" stroke-width="1.6" />
<rect x="971" y="1235.3" width="1743" height="35.2" fill="#a9a9a9"/>
<rect x="971" y="1235.3" width="169.3" height="35.2" fill="#9f9f9f"/>
<rect x="1368.8" y="1235.3" width="228.6" height="35.2" fill="#9f9f9f"/>
<rect x="1826" y="1235.3" width="228.6" height="35.2" fill="#9f9f9f"/>
<rect x="2283.1" y="1235.3" width="228.6" height="35.2" fill="#9f9f9f"/>
<path d="M1026 1235.3V1270.5M1083.1 1235.3V1270.5M1140.3 1235.3V1270.5M1197.4 1235.3V1270.5M1254.6 1235.3V1270.5M1311.7 1235.3V1270.5M1368.8 1235.3V1270.5M1426 1235.3V1270.5M1483.1 1235.3V1270.5M1540.3 1235.3V1270.5M1597.4 1235.3V1270.5M1654.5 1235.3V1270.5M1711.7 1235.3V1270.5M1768.8 1235.3V1270.5M1826 1235.3V1270.5M1883.1 1235.3V1270.5M1940.2 1235.3V1270.5M1997.4 1235.3V1270.5M2054.5 1235.3V1270.5M2111.7 1235.3V1270.5M2168.8 1235.3V1270.5M2225.9 1235.3V1270.5M2283.1 1235.3V1270.5M2340.2 1235.3V1270.5M2397.4 1235.3V1270.5M2454.5 1235.3V1270.5M2511.6 1235.3V1270.5M2568.8 1235.3V1270.5M2625.9 1235.3V1270.5M2683.1 1235.3V1270.5" fill="none" stroke="rgba(0,0,0,0.13)" stroke-width="1.6" />
<path d="M997.4 1235.3V1270.5M1054.6 1235.3V1270.5M1111.7 1235.3V1270.5M1168.8 1235.3V1270.5M1226 1235.3V1270.5M1283.1 1235.3V1270.5M1340.3 1235.3V1270.5M1397.4 1235.3V1270.5M1454.5 1235.3V1270.5M1511.7 1235.3V1270.5M1568.8 1235.3V1270.5M1626 1235.3V1270.5M1683.1 1235.3V1270.5M1740.2 1235.3V1270.5M1797.4 1235.3V1270.5M1854.5 1235.3V1270.5M1911.7 1235.3V1270.5M1968.8 1235.3V1270.5M2026 1235.3V1270.5M2083.1 1235.3V1270.5M2140.2 1235.3V1270.5M2197.4 1235.3V1270.5M2254.5 1235.3V1270.5M2311.7 1235.3V1270.5M2368.8 1235.3V1270.5M2425.9 1235.3V1270.5M2483.1 1235.3V1270.5M2540.2 1235.3V1270.5M2597.3 1235.3V1270.5M2654.5 1235.3V1270.5M2711.6 1235.3V1270.5" fill="none" stroke="rgba(0,0,0,0.07)" stroke-width="1.6" />
<rect x="971" y="1275.3" width="1743" height="98.2" fill="#a9a9a9"/>
<rect x="971" y="1275.3" width="169.3" height="98.2" fill="#9f9f9f"/>
<rect x="1368.8" y="1275.3" width="228.6" height="98.2" fill="#9f9f9f"/>
<rect x="1826" y="1275.3" width="228.6" height="98.2" fill="#9f9f9f"/>
<rect x="2283.1" y="1275.3" width="228.6" height="98.2" fill="#9f9f9f"/>
<path d="M1026 1275.3V1373.5M1083.1 1275.3V1373.5M1140.3 1275.3V1373.5M1197.4 1275.3V1373.5M1254.6 1275.3V1373.5M1311.7 1275.3V1373.5M1368.8 1275.3V1373.5M1426 1275.3V1373.5M1483.1 1275.3V1373.5M1540.3 1275.3V1373.5M1597.4 1275.3V1373.5M1654.5 1275.3V1373.5M1711.7 1275.3V1373.5M1768.8 1275.3V1373.5M1826 1275.3V1373.5M1883.1 1275.3V1373.5M1940.2 1275.3V1373.5M1997.4 1275.3V1373.5M2054.5 1275.3V1373.5M2111.7 1275.3V1373.5M2168.8 1275.3V1373.5M2225.9 1275.3V1373.5M2283.1 1275.3V1373.5M2340.2 1275.3V1373.5M2397.4 1275.3V1373.5M2454.5 1275.3V1373.5M2511.6 1275.3V1373.5M2568.8 1275.3V1373.5M2625.9 1275.3V1373.5M2683.1 1275.3V1373.5" fill="none" stroke="rgba(0,0,0,0.13)" stroke-width="1.6" />
<path d="M997.4 1275.3V1373.5M1054.6 1275.3V1373.5M1111.7 1275.3V1373.5M1168.8 1275.3V1373.5M1226 1275.3V1373.5M1283.1 1275.3V1373.5M1340.3 1275.3V1373.5M1397.4 1275.3V1373.5M1454.5 1275.3V1373.5M1511.7 1275.3V1373.5M1568.8 1275.3V1373.5M1626 1275.3V1373.5M1683.1 1275.3V1373.5M1740.2 1275.3V1373.5M1797.4 1275.3V1373.5M1854.5 1275.3V1373.5M1911.7 1275.3V1373.5M1968.8 1275.3V1373.5M2026 1275.3V1373.5M2083.1 1275.3V1373.5M2140.2 1275.3V1373.5M2197.4 1275.3V1373.5M2254.5 1275.3V1373.5M2311.7 1275.3V1373.5M2368.8 1275.3V1373.5M2425.9 1275.3V1373.5M2483.1 1275.3V1373.5M2540.2 1275.3V1373.5M2597.3 1275.3V1373.5M2654.5 1275.3V1373.5M2711.6 1275.3V1373.5" fill="none" stroke="rgba(0,0,0,0.07)" stroke-width="1.6" />
<rect x="971" y="1378.5" width="1743" height="36" fill="#a9a9a9"/>
<rect x="971" y="1378.5" width="169.3" height="36" fill="#9f9f9f"/>
<rect x="1368.8" y="1378.5" width="228.6" height="36" fill="#9f9f9f"/>
<rect x="1826" y="1378.5" width="228.6" height="36" fill="#9f9f9f"/>
<rect x="2283.1" y="1378.5" width="228.6" height="36" fill="#9f9f9f"/>
<path d="M1026 1378.5V1414.5M1083.1 1378.5V1414.5M1140.3 1378.5V1414.5M1197.4 1378.5V1414.5M1254.6 1378.5V1414.5M1311.7 1378.5V1414.5M1368.8 1378.5V1414.5M1426 1378.5V1414.5M1483.1 1378.5V1414.5M1540.3 1378.5V1414.5M1597.4 1378.5V1414.5M1654.5 1378.5V1414.5M1711.7 1378.5V1414.5M1768.8 1378.5V1414.5M1826 1378.5V1414.5M1883.1 1378.5V1414.5M1940.2 1378.5V1414.5M1997.4 1378.5V1414.5M2054.5 1378.5V1414.5M2111.7 1378.5V1414.5M2168.8 1378.5V1414.5M2225.9 1378.5V1414.5M2283.1 1378.5V1414.5M2340.2 1378.5V1414.5M2397.4 1378.5V1414.5M2454.5 1378.5V1414.5M2511.6 1378.5V1414.5M2568.8 1378.5V1414.5M2625.9 1378.5V1414.5M2683.1 1378.5V1414.5" fill="none" stroke="rgba(0,0,0,0.13)" stroke-width="1.6" />
<path d="M997.4 1378.5V1414.5M1054.6 1378.5V1414.5M1111.7 1378.5V1414.5M1168.8 1378.5V1414.5M1226 1378.5V1414.5M1283.1 1378.5V1414.5M1340.3 1378.5V1414.5M1397.4 1378.5V1414.5M1454.5 1378.5V1414.5M1511.7 1378.5V1414.5M1568.8 1378.5V1414.5M1626 1378.5V1414.5M1683.1 1378.5V1414.5M1740.2 1378.5V1414.5M1797.4 1378.5V1414.5M1854.5 1378.5V1414.5M1911.7 1378.5V1414.5M1968.8 1378.5V1414.5M2026 1378.5V1414.5M2083.1 1378.5V1414.5M2140.2 1378.5V1414.5M2197.4 1378.5V1414.5M2254.5 1378.5V1414.5M2311.7 1378.5V1414.5M2368.8 1378.5V1414.5M2425.9 1378.5V1414.5M2483.1 1378.5V1414.5M2540.2 1378.5V1414.5M2597.3 1378.5V1414.5M2654.5 1378.5V1414.5M2711.6 1378.5V1414.5" fill="none" stroke="rgba(0,0,0,0.07)" stroke-width="1.6" />
<rect x="971" y="758" width="2010" height="4.5" fill="#7d7d7d"/>
<rect x="971" y="813" width="2010" height="4" fill="#7d7d7d"/>
<rect x="971" y="852" width="2010" height="4.5" fill="#7d7d7d"/>
<rect x="971" y="892" width="2010" height="4.5" fill="#7d7d7d"/>
<rect x="971" y="931" width="2010" height="4.5" fill="#7d7d7d"/>
<rect x="971" y="1009.5" width="2010" height="3.5" fill="#7d7d7d"/>
<rect x="971" y="1191.5" width="2010" height="4" fill="#7d7d7d"/>
<rect x="971" y="1231" width="2010" height="4.3" fill="#7d7d7d"/>
<rect x="971" y="1270.5" width="2010" height="4.8" fill="#7d7d7d"/>
<rect x="971" y="1373.5" width="2010" height="5" fill="#7d7d7d"/>
<rect x="971" y="1414.5" width="2010" height="3.5" fill="#7d7d7d"/>
<rect x="1368.8" y="762.5" width="914.2" height="50.5" fill="#00ffe6"/>
<path d="M1397.4 762.5V813M1426 762.5V813M1454.5 762.5V813M1483.1 762.5V813M1511.7 762.5V813M1540.3 762.5V813M1568.8 762.5V813M1597.4 762.5V813M1626 762.5V813M1654.5 762.5V813M1683.1 762.5V813M1711.7 762.5V813M1740.2 762.5V813M1768.8 762.5V813M1797.4 762.5V813M1826 762.5V813M1854.5 762.5V813M1883.1 762.5V813M1911.7 762.5V813M1940.2 762.5V813M1968.8 762.5V813M1997.4 762.5V813M2026 762.5V813M2054.5 762.5V813M2083.1 762.5V813M2111.7 762.5V813M2140.2 762.5V813M2168.8 762.5V813M2197.4 762.5V813M2225.9 762.5V813M2254.5 762.5V813" fill="none" stroke="rgba(0,0,0,0.12)" stroke-width="1.4" />
<rect x="1369.4" y="763.1" width="913" height="49.3" fill="none" stroke="rgba(0,0,0,0.22)" stroke-width="1.2"/>
<rect x="1470" y="780" width="12.5" height="5" fill="#1a1a1a" rx="1"/>
<rect x="1527.1" y="780" width="12.5" height="5" fill="#1a1a1a" rx="1"/>
<rect x="1584.3" y="780" width="12.5" height="5" fill="#1a1a1a" rx="1"/>
<rect x="1641.4" y="780" width="12.5" height="5" fill="#1a1a1a" rx="1"/>
<rect x="1698.5" y="780" width="12.5" height="5" fill="#1a1a1a" rx="1"/>
<rect x="1755.7" y="780" width="12.5" height="5" fill="#1a1a1a" rx="1"/>
<rect x="1812.8" y="780" width="12.5" height="5" fill="#1a1a1a" rx="1"/>
<rect x="1870" y="780" width="12.5" height="5" fill="#1a1a1a" rx="1"/>
<rect x="1927.1" y="780" width="12.5" height="5" fill="#1a1a1a" rx="1"/>
<rect x="1984.2" y="780" width="12.5" height="5" fill="#1a1a1a" rx="1"/>
<rect x="2041.4" y="780" width="12.5" height="5" fill="#1a1a1a" rx="1"/>
<rect x="2098.5" y="780" width="12.5" height="5" fill="#1a1a1a" rx="1"/>
<rect x="2155.7" y="780" width="12.5" height="5" fill="#1a1a1a" rx="1"/>
<rect x="2212.8" y="780" width="12.5" height="5" fill="#1a1a1a" rx="1"/>
<rect x="2269.9" y="780" width="12.5" height="5" fill="#1a1a1a" rx="1"/>
<rect x="1426" y="805" width="12.5" height="5" fill="#1a1a1a" rx="1"/>
<rect x="1505.4" y="805" width="12.5" height="5" fill="#1a1a1a" rx="1"/>
<rect x="1540.3" y="805" width="12.5" height="5" fill="#1a1a1a" rx="1"/>
<rect x="1619.7" y="805" width="12.5" height="5" fill="#1a1a1a" rx="1"/>
<rect x="1654.5" y="805" width="12.5" height="5" fill="#1a1a1a" rx="1"/>
<rect x="1734" y="805" width="12.5" height="5" fill="#1a1a1a" rx="1"/>
<rect x="1768.8" y="805" width="12.5" height="5" fill="#1a1a1a" rx="1"/>
<rect x="1848.2" y="805" width="12.5" height="5" fill="#1a1a1a" rx="1"/>
<rect x="1883.1" y="805" width="12.5" height="5" fill="#1a1a1a" rx="1"/>
<rect x="1962.5" y="805" width="12.5" height="5" fill="#1a1a1a" rx="1"/>
<rect x="1997.4" y="805" width="12.5" height="5" fill="#1a1a1a" rx="1"/>
<rect x="2076.8" y="805" width="12.5" height="5" fill="#1a1a1a" rx="1"/>
<rect x="2111.7" y="805" width="12.5" height="5" fill="#1a1a1a" rx="1"/>
<rect x="2191.1" y="805" width="12.5" height="5" fill="#1a1a1a" rx="1"/>
<rect x="2225.9" y="805" width="12.5" height="5" fill="#1a1a1a" rx="1"/>
<rect x="1768.8" y="817" width="57.1" height="35" fill="#00ffe6"/>
<rect x="1769.4" y="817.6" width="55.9" height="33.8" fill="none" stroke="rgba(0,0,0,0.22)" stroke-width="1.2"/>
<rect x="2225.9" y="817" width="57.1" height="35" fill="#00ffe6"/>
<rect x="2226.5" y="817.6" width="55.9" height="33.8" fill="none" stroke="rgba(0,0,0,0.22)" stroke-width="1.2"/>
<rect x="1826" y="856.5" width="457.1" height="35.5" fill="#e9ffa9"/>
<rect x="1826.6" y="857.1" width="455.9" height="34.3" fill="none" stroke="rgba(0,0,0,0.22)" stroke-width="1.2"/>
<rect x="1826" y="896.5" width="228.6" height="34.5" fill="#fdf27c"/>
<rect x="1826.6" y="897.1" width="227.4" height="33.3" fill="none" stroke="rgba(0,0,0,0.22)" stroke-width="1.2"/>
<rect x="1597.4" y="937.5" width="457.1" height="9.5" fill="rgba(0,0,0,0.09)"/>
<rect x="1368.8" y="948.5" width="457.1" height="9.5" fill="rgba(0,0,0,0.09)"/>
<rect x="1826" y="959.5" width="457.1" height="9.5" fill="rgba(0,0,0,0.09)"/>
<rect x="1597.4" y="1013" width="457.1" height="178.5" fill="#ffa574"/>
<path d="M1626 1046.5V1191.5M1654.5 1046.5V1191.5M1683.1 1046.5V1191.5M1711.7 1046.5V1191.5M1740.2 1046.5V1191.5M1768.8 1046.5V1191.5M1797.4 1046.5V1191.5M1826 1046.5V1191.5M1854.5 1046.5V1191.5M1883.1 1046.5V1191.5M1911.7 1046.5V1191.5M1940.2 1046.5V1191.5M1968.8 1046.5V1191.5M1997.4 1046.5V1191.5M2026 1046.5V1191.5" fill="none" stroke="rgba(255,120,60,0.35)" stroke-width="1.4" />
<rect x="1598" y="1013.6" width="455.9" height="177.3" fill="none" stroke="rgba(0,0,0,0.22)" stroke-width="1.2"/>
<line x1="1597.4" y1="1046.5" x2="2054.5" y2="1046.5" stroke="rgba(0,0,0,0.3)" stroke-width="1.4" />
<rect x="1856" y="1064.5" width="81.5" height="5.6" fill="#1f1f1f"/>
<rect x="1655.7" y="1095.9" width="80" height="5.6" fill="#1f1f1f"/>
<rect x="1770" y="1127.2" width="34.3" height="5.6" fill="#1f1f1f"/>
<rect x="1597.3" y="1171.2" width="398.4" height="5.6" fill="#1f1f1f"/>
<rect x="1368.8" y="1195.5" width="457.1" height="35.5" fill="#ffa574"/>
<rect x="1369.4" y="1196.1" width="455.9" height="34.3" fill="none" stroke="rgba(0,0,0,0.22)" stroke-width="1.2"/>
<rect x="1826" y="1235.3" width="457.1" height="35.2" fill="#ffa574"/>
<rect x="1826.6" y="1235.9" width="455.9" height="34" fill="none" stroke="rgba(0,0,0,0.22)" stroke-width="1.2"/>
<rect x="971" y="1275.3" width="397.8" height="98.2" fill="#ff95a9"/>
<path d="M997.4 1309V1373.5M1026 1309V1373.5M1054.6 1309V1373.5M1083.1 1309V1373.5M1111.7 1309V1373.5M1140.3 1309V1373.5M1168.8 1309V1373.5M1197.4 1309V1373.5M1226 1309V1373.5M1254.6 1309V1373.5M1283.1 1309V1373.5M1311.7 1309V1373.5M1340.3 1309V1373.5" fill="none" stroke="rgba(220,60,90,0.28)" stroke-width="1.4" />
<rect x="971.6" y="1275.9" width="396.6" height="97" fill="none" stroke="rgba(0,0,0,0.22)" stroke-width="1.2"/>
<line x1="971" y1="1309" x2="1368.8" y2="1309" stroke="rgba(0,0,0,0.3)" stroke-width="1.4" />
<rect x="1826" y="1275.3" width="457.1" height="98.2" fill="#ff95a9"/>
<path d="M1854.5 1309V1373.5M1883.1 1309V1373.5M1911.7 1309V1373.5M1940.2 1309V1373.5M1968.8 1309V1373.5M1997.4 1309V1373.5M2026 1309V1373.5M2054.5 1309V1373.5M2083.1 1309V1373.5M2111.7 1309V1373.5M2140.2 1309V1373.5M2168.8 1309V1373.5M2197.4 1309V1373.5M2225.9 1309V1373.5M2254.5 1309V1373.5" fill="none" stroke="rgba(220,60,90,0.28)" stroke-width="1.4" />
<rect x="1826.6" y="1275.9" width="455.9" height="97" fill="none" stroke="rgba(0,0,0,0.22)" stroke-width="1.2"/>
<line x1="1826" y1="1309" x2="2283.1" y2="1309" stroke="rgba(0,0,0,0.3)" stroke-width="1.4" />
<rect x="2283.1" y="1275.3" width="228.6" height="98.2" fill="#ff95a9"/>
<path d="M2311.7 1309V1373.5M2340.2 1309V1373.5M2368.8 1309V1373.5M2397.4 1309V1373.5M2425.9 1309V1373.5M2454.5 1309V1373.5M2483.1 1309V1373.5" fill="none" stroke="rgba(220,60,90,0.28)" stroke-width="1.4" />
<rect x="2283.7" y="1275.9" width="227.4" height="97" fill="none" stroke="rgba(0,0,0,0.22)" stroke-width="1.2"/>
<line x1="2283.1" y1="1309" x2="2511.6" y2="1309" stroke="rgba(0,0,0,0.3)" stroke-width="1.4" />
<path d="M1321 1309.5C1335 1312 1338 1360 1347 1373H1367V1309.5z" fill="#f07f95" opacity="0.85"/>
<path d="M1826 1373V1309.5h14C1832 1330 1830 1350 1829 1373z" fill="#f07f95" opacity="0.5"/>
<path d="M2236 1309.5C2250 1313 2252 1360 2262.5 1373H2283.1 V1309.5z" fill="#f07f95" opacity="0.85"/>
<path d="M2287.1 1309.5C2340 1312 2380 1340 2408 1373H2511.6V1309.5z" fill="#f07f95" opacity="0.8"/>
<line x1="971" y1="1338" x2="1368.8" y2="1338" stroke="#1c1c1c" stroke-width="2.6" />
<line x1="1826" y1="1338" x2="2283.1" y2="1338" stroke="#1c1c1c" stroke-width="2.6" />
<line x1="2283.1" y1="1338" x2="2511.6" y2="1338" stroke="#1c1c1c" stroke-width="2.6" />
<line x1="2283.1" y1="1275.3" x2="2283.1" y2="1373.5" stroke="rgba(150,40,60,0.6)" stroke-width="1.5" />
<rect x="978" y="1297" width="3" height="3" fill="#7d3040"/>
<rect x="984.5" y="1297" width="3" height="3" fill="#7d3040"/>
<rect x="991" y="1297" width="3" height="3" fill="#7d3040"/>
<rect x="1597.4" y="710.5" width="457.1" height="22" fill="#dadada" stroke="#444" stroke-width="1.5"/>
<path d="M1598.4 712l15 9.5l-15 9.5z" fill="#ededed" stroke="#333" stroke-width="1.5" />
<path d="M2053.5 712l-15 9.5l15 9.5z" fill="#ededed" stroke="#333" stroke-width="1.5" />
<line x1="1597.4" y1="710" x2="1597.4" y2="1418" stroke="#2a2a2a" stroke-width="1.8" />
<line x1="2054.5" y1="710" x2="2054.5" y2="1418" stroke="#2a2a2a" stroke-width="1.6" />
<polygon points="1590.4,750 1604.4,750 1597.4,757.5" fill="#19d8f0" />
<line x1="1855.7" y1="762.5" x2="1855.7" y2="1418" stroke="#151515" stroke-width="2.6" />
<rect x="1853.7" y="805" width="4" height="5" fill="#e0e0e0"/>
<rect x="1853.7" y="1171.5" width="4" height="5" fill="#e0e0e0"/>
<rect x="1853.7" y="1335.5" width="4" height="5" fill="#e0e0e0"/>
<text x="2707" y="1409.2" font-size="34" fill="#787878" text-anchor="end" textLength="55" lengthAdjust="spacing" stroke="#787878" stroke-width="1" >1/2</text>
<rect x="971" y="1418" width="2010" height="47" fill="#a9a9a9"/>
<line x1="1000.6" y1="1418" x2="1000.6" y2="1422.5" stroke="#707070" stroke-width="1.6" />
<line x1="1042.3" y1="1418" x2="1042.3" y2="1422.5" stroke="#707070" stroke-width="1.6" />
<line x1="1084" y1="1418" x2="1084" y2="1422.5" stroke="#707070" stroke-width="1.6" />
<line x1="1125.7" y1="1418" x2="1125.7" y2="1435" stroke="#707070" stroke-width="1.6" />
<line x1="1125.7" y1="1435" x2="1130.7" y2="1435" stroke="#707070" stroke-width="1.6" />
<text x="1132.2" y="1443.7" font-size="21.5" fill="#3c3c3c" textLength="42" lengthAdjust="spacing" stroke="#3c3c3c" stroke-width="0.2" >1:00</text>
<line x1="1167.4" y1="1418" x2="1167.4" y2="1422.5" stroke="#707070" stroke-width="1.6" />
<line x1="1209.1" y1="1418" x2="1209.1" y2="1422.5" stroke="#707070" stroke-width="1.6" />
<line x1="1250.8" y1="1418" x2="1250.8" y2="1422.5" stroke="#707070" stroke-width="1.6" />
<line x1="1292.5" y1="1418" x2="1292.5" y2="1422.5" stroke="#707070" stroke-width="1.6" />
<line x1="1334.2" y1="1418" x2="1334.2" y2="1435" stroke="#707070" stroke-width="1.6" />
<line x1="1334.2" y1="1435" x2="1339.2" y2="1435" stroke="#707070" stroke-width="1.6" />
<text x="1340.7" y="1443.7" font-size="21.5" fill="#3c3c3c" textLength="42" lengthAdjust="spacing" stroke="#3c3c3c" stroke-width="0.2" >1:05</text>
<line x1="1375.9" y1="1418" x2="1375.9" y2="1422.5" stroke="#707070" stroke-width="1.6" />
<line x1="1417.6" y1="1418" x2="1417.6" y2="1422.5" stroke="#707070" stroke-width="1.6" />
<line x1="1459.3" y1="1418" x2="1459.3" y2="1422.5" stroke="#707070" stroke-width="1.6" />
<line x1="1501" y1="1418" x2="1501" y2="1422.5" stroke="#707070" stroke-width="1.6" />
<line x1="1542.7" y1="1418" x2="1542.7" y2="1435" stroke="#707070" stroke-width="1.6" />
<line x1="1542.7" y1="1435" x2="1547.7" y2="1435" stroke="#707070" stroke-width="1.6" />
<text x="1549.2" y="1443.7" font-size="21.5" fill="#3c3c3c" textLength="42" lengthAdjust="spacing" stroke="#3c3c3c" stroke-width="0.2" >1:10</text>
<line x1="1584.4" y1="1418" x2="1584.4" y2="1422.5" stroke="#707070" stroke-width="1.6" />
<line x1="1626.1" y1="1418" x2="1626.1" y2="1422.5" stroke="#707070" stroke-width="1.6" />
<line x1="1667.8" y1="1418" x2="1667.8" y2="1422.5" stroke="#707070" stroke-width="1.6" />
<line x1="1709.5" y1="1418" x2="1709.5" y2="1422.5" stroke="#707070" stroke-width="1.6" />
<line x1="1751.2" y1="1418" x2="1751.2" y2="1435" stroke="#707070" stroke-width="1.6" />
<line x1="1751.2" y1="1435" x2="1756.2" y2="1435" stroke="#707070" stroke-width="1.6" />
<text x="1757.7" y="1443.7" font-size="21.5" fill="#3c3c3c" textLength="42" lengthAdjust="spacing" stroke="#3c3c3c" stroke-width="0.2" >1:15</text>
<line x1="1792.9" y1="1418" x2="1792.9" y2="1422.5" stroke="#707070" stroke-width="1.6" />
<line x1="1834.6" y1="1418" x2="1834.6" y2="1422.5" stroke="#707070" stroke-width="1.6" />
<line x1="1876.3" y1="1418" x2="1876.3" y2="1422.5" stroke="#707070" stroke-width="1.6" />
<line x1="1918" y1="1418" x2="1918" y2="1422.5" stroke="#707070" stroke-width="1.6" />
<line x1="1959.7" y1="1418" x2="1959.7" y2="1435" stroke="#707070" stroke-width="1.6" />
<line x1="1959.7" y1="1435" x2="1964.7" y2="1435" stroke="#707070" stroke-width="1.6" />
<text x="1966.2" y="1443.7" font-size="21.5" fill="#3c3c3c" textLength="42" lengthAdjust="spacing" stroke="#3c3c3c" stroke-width="0.2" >1:20</text>
<line x1="2001.4" y1="1418" x2="2001.4" y2="1422.5" stroke="#707070" stroke-width="1.6" />
<line x1="2043.1" y1="1418" x2="2043.1" y2="1422.5" stroke="#707070" stroke-width="1.6" />
<line x1="2084.8" y1="1418" x2="2084.8" y2="1422.5" stroke="#707070" stroke-width="1.6" />
<line x1="2126.5" y1="1418" x2="2126.5" y2="1422.5" stroke="#707070" stroke-width="1.6" />
<line x1="2168.2" y1="1418" x2="2168.2" y2="1435" stroke="#707070" stroke-width="1.6" />
<line x1="2168.2" y1="1435" x2="2173.2" y2="1435" stroke="#707070" stroke-width="1.6" />
<text x="2174.7" y="1443.7" font-size="21.5" fill="#3c3c3c" textLength="42" lengthAdjust="spacing" stroke="#3c3c3c" stroke-width="0.2" >1:25</text>
<line x1="2209.9" y1="1418" x2="2209.9" y2="1422.5" stroke="#707070" stroke-width="1.6" />
<line x1="2251.6" y1="1418" x2="2251.6" y2="1422.5" stroke="#707070" stroke-width="1.6" />
<line x1="2293.3" y1="1418" x2="2293.3" y2="1422.5" stroke="#707070" stroke-width="1.6" />
<line x1="2335" y1="1418" x2="2335" y2="1422.5" stroke="#707070" stroke-width="1.6" />
<line x1="2376.7" y1="1418" x2="2376.7" y2="1435" stroke="#707070" stroke-width="1.6" />
<line x1="2376.7" y1="1435" x2="2381.7" y2="1435" stroke="#707070" stroke-width="1.6" />
<text x="2383.2" y="1443.7" font-size="21.5" fill="#3c3c3c" textLength="42" lengthAdjust="spacing" stroke="#3c3c3c" stroke-width="0.2" >1:30</text>
<line x1="2418.4" y1="1418" x2="2418.4" y2="1422.5" stroke="#707070" stroke-width="1.6" />
<line x1="2460.1" y1="1418" x2="2460.1" y2="1422.5" stroke="#707070" stroke-width="1.6" />
<line x1="2501.8" y1="1418" x2="2501.8" y2="1422.5" stroke="#707070" stroke-width="1.6" />
<line x1="2543.5" y1="1418" x2="2543.5" y2="1422.5" stroke="#707070" stroke-width="1.6" />
<line x1="2585.2" y1="1418" x2="2585.2" y2="1435" stroke="#707070" stroke-width="1.6" />
<line x1="2585.2" y1="1435" x2="2590.2" y2="1435" stroke="#707070" stroke-width="1.6" />
<text x="2591.7" y="1443.7" font-size="21.5" fill="#3c3c3c" textLength="42" lengthAdjust="spacing" stroke="#3c3c3c" stroke-width="0.2" >1:35</text>
<line x1="2626.9" y1="1418" x2="2626.9" y2="1422.5" stroke="#707070" stroke-width="1.6" />
<line x1="2668.6" y1="1418" x2="2668.6" y2="1422.5" stroke="#707070" stroke-width="1.6" />
<line x1="2710.3" y1="1418" x2="2710.3" y2="1422.5" stroke="#707070" stroke-width="1.6" />
<polygon points="1590.4,1429 1604.4,1429 1597.4,1421.5" fill="#19d8f0" />
<rect x="2714.5" y="758" width="3.5" height="660" fill="#7d7d7d"/>
<rect x="2934" y="762.5" width="3.5" height="652" fill="#7d7d7d"/>
<rect x="2937.5" y="762.5" width="2.5" height="652" fill="#a9a9a9"/>
<rect x="2937.5" y="813" width="43.5" height="4" fill="#7d7d7d"/>
<rect x="2937.5" y="852" width="43.5" height="4.5" fill="#7d7d7d"/>
<rect x="2937.5" y="892" width="43.5" height="4.5" fill="#7d7d7d"/>
<rect x="2937.5" y="931" width="43.5" height="4.5" fill="#7d7d7d"/>
<rect x="2937.5" y="1009.5" width="43.5" height="3.5" fill="#7d7d7d"/>
<rect x="2937.5" y="1191.5" width="43.5" height="4" fill="#7d7d7d"/>
<rect x="2937.5" y="1231" width="43.5" height="4.3" fill="#7d7d7d"/>
<rect x="2937.5" y="1270.5" width="43.5" height="4.8" fill="#7d7d7d"/>
<rect x="2937.5" y="1373.5" width="43.5" height="5" fill="#7d7d7d"/>
<rect x="2937.5" y="1414.5" width="43.5" height="3.5" fill="#7d7d7d"/>
<rect x="2718" y="762.5" width="216" height="50.5" fill="#00ffe6"/>
<rect x="2718" y="817" width="216" height="35" fill="#00ffe6"/>
<circle cx="2738" cy="834.5" r="12" fill="none" stroke="#0a4f49" stroke-width="2.2" />
<polygon points="2734,827.5 2734,841.5 2745.5,834.5" fill="#0a4f49" />
<text x="2767.8" y="842.2" font-size="21.5" fill="#0a4f49" textLength="100" lengthAdjust="spacing" stroke="#0a4f49" stroke-width="0.8" >Bass Drop</text>
<rect x="2718" y="856.5" width="216" height="35.5" fill="#e9ffa9"/>
<circle cx="2738" cy="874" r="12" fill="none" stroke="#4c5532" stroke-width="2.2" />
<polygon points="2734,867 2734,881 2745.5,874" fill="#4c5532" />
<text x="2767.8" y="881.7" font-size="21.5" fill="#4c5532" textLength="114.7" lengthAdjust="spacing" stroke="#4c5532" stroke-width="0.8" >Synth Riser</text>
<rect x="2718" y="896.5" width="216" height="34.5" fill="#fdf27c"/>
<circle cx="2738" cy="913.5" r="12" fill="none" stroke="#4f4a22" stroke-width="2.2" />
<polygon points="2734,906.5 2734,920.5 2745.5,913.5" fill="#4f4a22" />
<text x="2767.8" y="921.2" font-size="21.5" fill="#4f4a22" textLength="47" lengthAdjust="spacing" stroke="#4f4a22" stroke-width="0.8" >Keys</text>
<rect x="2718" y="935.5" width="216" height="335" fill="#ffa574"/>
<circle cx="2738" cy="953" r="12" fill="none" stroke="#5a2f18" stroke-width="2.2" />
<line x1="2731.5" y1="948.5" x2="2743" y2="948.5" stroke="#5a2f18" stroke-width="2" />
<line x1="2735" y1="952.5" x2="2744.5" y2="952.5" stroke="#5a2f18" stroke-width="2" />
<line x1="2735" y1="956" x2="2744.5" y2="956" stroke="#5a2f18" stroke-width="2" />
<line x1="2735" y1="959.5" x2="2744.5" y2="959.5" stroke="#5a2f18" stroke-width="2" />
<text x="2765.4" y="960.7" font-size="21.5" fill="#5a2f18" textLength="48" lengthAdjust="spacing" stroke="#5a2f18" stroke-width="0.8" >Pads</text>
<rect x="2727.5" y="1009" width="206.5" height="4" fill="#7d7d7d"/>
<rect x="2727.5" y="1009" width="2.5" height="261.5" fill="#7d7d7d"/>
<rect x="2727.5" y="1191.5" width="206.5" height="4" fill="#7d7d7d"/>
<rect x="2727.5" y="1231" width="206.5" height="4.3" fill="#7d7d7d"/>
<circle cx="2749" cy="1030.5" r="12" fill="none" stroke="#5a2f18" stroke-width="2.2" />
<polygon points="2741.5,1027 2756.5,1027 2749,1038" fill="#5a2f18" />
<text x="2775.8" y="1038.2" font-size="21.5" fill="#5a2f18" textLength="91.5" lengthAdjust="spacing" stroke="#5a2f18" stroke-width="0.8" >Drift Pad</text>
<circle cx="2749" cy="1213.5" r="12" fill="none" stroke="#5a2f18" stroke-width="2.2" />
<polygon points="2745,1206.5 2745,1220.5 2756.5,1213.5" fill="#5a2f18" />
<text x="2775.8" y="1221.2" font-size="21.5" fill="#5a2f18" textLength="86.7" lengthAdjust="spacing" stroke="#5a2f18" stroke-width="0.8" >Rain Pad</text>
<circle cx="2749" cy="1252.8" r="12" fill="none" stroke="#5a2f18" stroke-width="2.2" />
<polygon points="2745,1245.8 2745,1259.8 2756.5,1252.8" fill="#5a2f18" />
<text x="2775.8" y="1260.5" font-size="21.5" fill="#5a2f18" textLength="110" lengthAdjust="spacing" stroke="#5a2f18" stroke-width="0.8" >Flangy Pad</text>
<rect x="2718" y="1275.3" width="216" height="98.2" fill="#ff95a9"/>
<circle cx="2738" cy="1292.8" r="12" fill="none" stroke="#5e2433" stroke-width="2.2" />
<polygon points="2730.5,1289.3 2745.5,1289.3 2738,1300.3" fill="#5e2433" />
<text x="2767.8" y="1300.5" font-size="21.5" fill="#5e2433" textLength="100" lengthAdjust="spacing" stroke="#5e2433" stroke-width="0.8" >Ambience</text>
<rect x="2718" y="1378.5" width="216" height="36" fill="#ffffff"/>
<circle cx="2738" cy="1396.5" r="12" fill="none" stroke="#333" stroke-width="2.2" />
<polygon points="2734,1389.5 2734,1403.5 2745.5,1396.5" fill="#333" />
<text x="2771.8" y="1404.2" font-size="21.5" fill="#333" textLength="48" lengthAdjust="spacing" stroke="#333" stroke-width="0.6" >Main</text>
<rect x="2940" y="1013" width="41" height="178.5" fill="#c2c2c2"/>
<rect x="2945" y="765" width="7" height="44" fill="#1c1c1c" rx="1.5"/>
<rect x="2954" y="765" width="7" height="44" fill="#1c1c1c" rx="1.5"/>
<rect x="2945" y="765" width="7" height="44" fill="#0cf04a" rx="1"/>
<rect x="2954" y="765" width="7" height="44" fill="#0cf04a" rx="1"/>
<rect x="2945" y="821" width="7" height="26.5" fill="#1c1c1c" rx="1.5"/>
<rect x="2954" y="821" width="7" height="26.5" fill="#1c1c1c" rx="1.5"/>
<rect x="2945" y="828" width="7" height="2.5" fill="#f0a000"/>
<rect x="2954" y="828" width="7" height="2.5" fill="#f0a000"/>
<rect x="2945" y="833" width="7" height="14.5" fill="#0cf04a" rx="1"/>
<rect x="2954" y="833" width="7" height="14.5" fill="#0cf04a" rx="1"/>
<rect x="2945" y="861" width="7" height="26.5" fill="#1c1c1c" rx="1.5"/>
<rect x="2954" y="861" width="7" height="26.5" fill="#1c1c1c" rx="1.5"/>
<rect x="2945" y="876" width="7" height="2" fill="#0a9a38"/>
<rect x="2954" y="876" width="7" height="2" fill="#0a9a38"/>
<rect x="2945" y="879.5" width="7" height="8" fill="#0cf04a" rx="1"/>
<rect x="2954" y="879.5" width="7" height="8" fill="#0cf04a" rx="1"/>
<rect x="2945" y="900" width="7" height="27.5" fill="#1c1c1c" rx="1.5"/>
<rect x="2954" y="900" width="7" height="27.5" fill="#1c1c1c" rx="1.5"/>
<rect x="2945" y="909" width="7" height="2" fill="#0a9a38"/>
<rect x="2954" y="909" width="7" height="2" fill="#0a9a38"/>
<rect x="2945" y="912" width="7" height="15.5" fill="#0cf04a" rx="1"/>
<rect x="2954" y="912" width="7" height="15.5" fill="#0cf04a" rx="1"/>
<rect x="2945" y="940" width="7" height="64" fill="#1c1c1c" rx="1.5"/>
<rect x="2954" y="940" width="7" height="64" fill="#1c1c1c" rx="1.5"/>
<rect x="2945" y="950.5" width="7" height="2.5" fill="#e08000"/>
<rect x="2954" y="950.5" width="7" height="2.5" fill="#e08000"/>
<rect x="2945" y="958.5" width="7" height="7.5" fill="#a3a41c" rx="1"/>
<rect x="2954" y="958.5" width="7" height="7.5" fill="#a3a41c" rx="1"/>
<rect x="2945" y="966" width="7" height="38" fill="#0cf04a" rx="1"/>
<rect x="2954" y="966" width="7" height="38" fill="#0cf04a" rx="1"/>
<rect x="2945" y="1017" width="7" height="171" fill="#1c1c1c" rx="1.5"/>
<rect x="2954" y="1017" width="7" height="171" fill="#1c1c1c" rx="1.5"/>
<rect x="2945" y="1044" width="7" height="2.5" fill="#e08000"/>
<rect x="2954" y="1044" width="7" height="2.5" fill="#e08000"/>
<rect x="2945" y="1063.5" width="7" height="12.5" fill="#9c9c1a" rx="1"/>
<rect x="2954" y="1057" width="7" height="19" fill="#9c9c1a" rx="1"/>
<rect x="2945" y="1072" width="7" height="6" fill="#5fe000" rx="1"/>
<rect x="2954" y="1072" width="7" height="6" fill="#5fe000" rx="1"/>
<rect x="2945" y="1077" width="7" height="111" fill="#0cf04a" rx="1"/>
<rect x="2954" y="1077" width="7" height="111" fill="#0cf04a" rx="1"/>
<rect x="2945" y="1033" width="7" height="1.6" fill="#9a9a9a"/>
<rect x="2954" y="1033" width="7" height="1.6" fill="#9a9a9a"/>
<rect x="2945" y="1200" width="7" height="27" fill="#1c1c1c" rx="1.5"/>
<rect x="2954" y="1200" width="7" height="27" fill="#1c1c1c" rx="1.5"/>
<rect x="2945" y="1206" width="7" height="2" fill="#12c040"/>
<rect x="2954" y="1206" width="7" height="2" fill="#12c040"/>
<rect x="2945" y="1214" width="7" height="13" fill="#0cf04a" rx="1"/>
<rect x="2954" y="1214" width="7" height="13" fill="#0cf04a" rx="1"/>
<rect x="2945" y="1239.5" width="7" height="27" fill="#1c1c1c" rx="1.5"/>
<rect x="2954" y="1239.5" width="7" height="27" fill="#1c1c1c" rx="1.5"/>
<rect x="2945" y="1247.5" width="7" height="2.5" fill="#12c040"/>
<rect x="2954" y="1247.5" width="7" height="2.5" fill="#9abf20"/>
<rect x="2945" y="1256" width="7" height="10.5" fill="#0cf04a" rx="1"/>
<rect x="2954" y="1256" width="7" height="10.5" fill="#0cf04a" rx="1"/>
<rect x="2945" y="1279" width="7" height="93" fill="#1c1c1c" rx="1.5"/>
<rect x="2954" y="1279" width="7" height="93" fill="#1c1c1c" rx="1.5"/>
<rect x="2945" y="1364.5" width="7" height="2" fill="#0cf04a"/>
<rect x="2945" y="1368" width="7" height="4" fill="#0aa83a" rx="1"/>
<rect x="2954" y="1368" width="7" height="4" fill="#0aa83a" rx="1"/>
<rect x="2945" y="1290.5" width="7" height="1.6" fill="#9a9a9a"/>
<rect x="2954" y="1290.5" width="7" height="1.6" fill="#9a9a9a"/>
<rect x="2945" y="1383" width="7" height="28" fill="#1c1c1c" rx="1.5"/>
<rect x="2954" y="1383" width="7" height="28" fill="#1c1c1c" rx="1.5"/>
<rect x="2945" y="1386" width="7" height="3" fill="#ff7a1a"/>
<rect x="2954" y="1386" width="7" height="3" fill="#ff7a1a"/>
<rect x="2945" y="1389" width="7" height="4" fill="#f5d800" rx="1"/>
<rect x="2954" y="1389" width="7" height="4" fill="#f5d800" rx="1"/>
<rect x="2945" y="1393" width="7" height="18" fill="#0cf04a" rx="1"/>
<rect x="2954" y="1393" width="7" height="18" fill="#0cf04a" rx="1"/>
<rect x="2723.4" y="685.6" width="59.3" height="26.4" fill="#dadada" rx="13.2" stroke="#444" stroke-width="1.8"/>
<text x="2753" y="706.7" font-size="21.5" fill="#151515" text-anchor="middle" textLength="33" lengthAdjust="spacing" stroke="#151515" stroke-width="0.5" >Set</text>
<rect x="2806.8" y="686" width="46.9" height="26" fill="#d4d4d4" stroke="#555" stroke-width="1.8"/>
<circle cx="2824" cy="705" r="3.2" fill="#151515" />
<circle cx="2836.5" cy="693" r="3.2" fill="#151515" />
<line x1="2824" y1="705" x2="2836.5" y2="693" stroke="#151515" stroke-width="2.4" />
<rect x="2862.5" y="686" width="47" height="26" fill="#d4d4d4" stroke="#555" stroke-width="1.8"/>
<rect x="2878.5" y="698" width="15" height="9.5" fill="#151515" rx="1"/>
<path d="M2881.5 698v-3a4.5 4.5 0 0 1 9 0v3" fill="none" stroke="#151515" stroke-width="2.4" />
<circle cx="2736.5" cy="736" r="12.3" fill="#d4d4d4" stroke="#444" stroke-width="1.8" />
<line x1="2730.5" y1="736" x2="2742.5" y2="736" stroke="#151515" stroke-width="2.4" />
<polygon points="2728.5,736 2735.5,730 2735.5,742" fill="#151515" />
<circle cx="2769.7" cy="736" r="12.3" fill="#d4d4d4" stroke="#444" stroke-width="1.8" />
<line x1="2763.7" y1="736" x2="2775.7" y2="736" stroke="#151515" stroke-width="2.4" />
<polygon points="2777.7,736 2770.7,730 2770.7,742" fill="#151515" />
<rect x="2719.2" y="1427.7" width="30.2" height="25.7" fill="#d0d0d0" stroke="#555" stroke-width="1.6"/>
<line x1="2725.5" y1="1438.5" x2="2725.5" y2="1442.5" stroke="#151515" stroke-width="2" />
<line x1="2729.9" y1="1435.5" x2="2729.9" y2="1445.5" stroke="#151515" stroke-width="2" />
<line x1="2734.3" y1="1432" x2="2734.3" y2="1449" stroke="#151515" stroke-width="2" />
<line x1="2738.7" y1="1435.5" x2="2738.7" y2="1445.5" stroke="#151515" stroke-width="2" />
<line x1="2743.1" y1="1438.5" x2="2743.1" y2="1442.5" stroke="#151515" stroke-width="2" />
<rect x="2756.6" y="1427.7" width="72.2" height="25.7" fill="#9a9a9a" stroke="#555" stroke-width="1.6"/>
<text x="2792.7" y="1448.2" font-size="21.5" fill="#151515" text-anchor="middle" textLength="53" lengthAdjust="spacing" stroke="#151515" stroke-width="0.5" >1.00x</text>
<rect x="2863" y="1427.7" width="30.5" height="25.7" fill="#d0d0d0" stroke="#555" stroke-width="1.6"/>
<text x="2878.2" y="1448.2" font-size="21.5" fill="#151515" text-anchor="middle" stroke="#151515" stroke-width="0.5" >H</text>
<rect x="2900.2" y="1427.7" width="30" height="25.7" fill="#d0d0d0" stroke="#555" stroke-width="1.6"/>
<text x="2915.2" y="1448.2" font-size="21.5" fill="#151515" text-anchor="middle" stroke="#151515" stroke-width="0.5" >W</text>
<linearGradient id="mdim" gradientUnits="userSpaceOnUse" x1="0" y1="1531.5" x2="0" y2="1905.5"><stop offset="0.0000" stop-color="#8a2a10"/><stop offset="0.1075" stop-color="#a04a10"/><stop offset="0.2019" stop-color="#a07810"/><stop offset="0.2901" stop-color="#9c9a12"/><stop offset="0.3543" stop-color="#5aa01a"/><stop offset="0.4024" stop-color="#08b048"/><stop offset="1.0000" stop-color="#08b048"/></linearGradient>
<linearGradient id="mbright" gradientUnits="userSpaceOnUse" x1="0" y1="1531.5" x2="0" y2="1905.5"><stop offset="0.0000" stop-color="#ff3010"/><stop offset="0.1075" stop-color="#f06000"/><stop offset="0.1832" stop-color="#f89000"/><stop offset="0.2420" stop-color="#ffd400"/><stop offset="0.3115" stop-color="#d0e800"/><stop offset="0.3596" stop-color="#60e820"/><stop offset="0.4078" stop-color="#06f850"/><stop offset="1.0000" stop-color="#06f850"/></linearGradient>
<clipPath id="mixclip"><rect x="971" y="1460" width="1798.6" height="480"/></clipPath>
<rect x="971" y="1465" width="2010" height="3.7" fill="#7d7d7d"/>
<rect x="971" y="1468.7" width="2010" height="466.8" fill="#7d7d7d"/>
<g clip-path="url(#mixclip)">
<rect x="920.3" y="1468.7" width="194.7" height="48.3" fill="#8fa8ff"/>
<text x="927.8" y="1506.7" font-size="21.5" fill="#1f2c5e" textLength="66" lengthAdjust="spacing" stroke="#1f2c5e" stroke-width="0.8" >Drums</text>
<circle cx="1095.9" cy="1499" r="12" fill="none" stroke="#1f2c5e" stroke-width="2.2" />
<polygon points="1088.4,1495.5 1103.4,1495.5 1095.9,1506.5" fill="#1f2c5e" />
<rect x="920.3" y="1517" width="194.7" height="4.5" fill="#7d7d7d"/>
<rect x="920.3" y="1521.5" width="194.7" height="398.5" fill="#a9a9a9"/>
<rect x="920.3" y="1920" width="194.7" height="2.5" fill="#7d7d7d"/>
<rect x="920.3" y="1922.5" width="194.7" height="13" fill="#8fa8ff"/>
<rect x="935.8" y="1531.3" width="71.7" height="26.2" fill="#dcdcdc" rx="13.1" stroke="#555" stroke-width="1.8"/>
<text x="971.6" y="1552.7" font-size="21.5" fill="#151515" text-anchor="middle" textLength="51" lengthAdjust="spacing" stroke="#151515" stroke-width="0.5" >-11.31</text>
<rect x="935.8" y="1569.7" width="71.7" height="25.6" fill="#dcdcdc" stroke="#666" stroke-width="1.8"/>
<text x="971.6" y="1590.7" font-size="21.5" fill="#151515" text-anchor="middle" textLength="38" lengthAdjust="spacing" stroke="#151515" stroke-width="0.5" >-1.0</text>
<line x1="1031.5" y1="1534" x2="1037.2" y2="1534" stroke="#5c5c5c" stroke-width="2.2" opacity="1"/>
<line x1="1031.5" y1="1571.7" x2="1037.2" y2="1571.7" stroke="#5c5c5c" stroke-width="2.2" opacity="1"/>
<line x1="1031.5" y1="1607" x2="1037.2" y2="1607" stroke="#5c5c5c" stroke-width="2.2" opacity="1"/>
<line x1="1031.5" y1="1644.5" x2="1037.2" y2="1644.5" stroke="#5c5c5c" stroke-width="2.2" opacity="1"/>
<line x1="1031.5" y1="1682" x2="1037.2" y2="1682" stroke="#5c5c5c" stroke-width="2.2" opacity="1"/>
<line x1="1031.5" y1="1717.5" x2="1037.2" y2="1717.5" stroke="#5c5c5c" stroke-width="2.2" opacity="1"/>
<line x1="1031.5" y1="1755" x2="1037.2" y2="1755" stroke="#5c5c5c" stroke-width="2.2" opacity="1"/>
<line x1="1031.5" y1="1788" x2="1037.2" y2="1788" stroke="#5c5c5c" stroke-width="2.2" opacity="1"/>
<line x1="1031.5" y1="1815" x2="1037.2" y2="1815" stroke="#5c5c5c" stroke-width="2.2" opacity="1"/>
<line x1="1031.5" y1="1840" x2="1037.2" y2="1840" stroke="#5c5c5c" stroke-width="2.2" opacity="1"/>
<line x1="1031.5" y1="1863.7" x2="1037.2" y2="1863.7" stroke="#5c5c5c" stroke-width="2.2" opacity="0.45"/>
<line x1="1031.5" y1="1882" x2="1037.2" y2="1882" stroke="#5c5c5c" stroke-width="2.2" opacity="1"/>
<line x1="1031.5" y1="1898" x2="1037.2" y2="1898" stroke="#5c5c5c" stroke-width="2.2" opacity="0.45"/>
<rect x="1042.5" y="1531.5" width="25.3" height="374" fill="#444" rx="3"/>
<rect x="1042.5" y="1531.5" width="11.6" height="374" fill="#222" rx="2.5"/>
<rect x="1043.3" y="1690" width="10" height="214.7" fill="url(#mdim)" rx="2"/>
<rect x="1043.3" y="1703.5" width="10" height="201.2" fill="url(#mbright)" rx="2"/>
<rect x="1042.5" y="1609.6" width="11.6" height="2.8" fill="#e8a000"/>
<rect x="1056.2" y="1531.5" width="11.6" height="374" fill="#222" rx="2.5"/>
<rect x="1057" y="1705" width="10" height="199.7" fill="url(#mdim)" rx="2"/>
<rect x="1057" y="1707" width="10" height="197.7" fill="url(#mbright)" rx="2"/>
<rect x="1056.2" y="1608.6" width="11.6" height="2.8" fill="#e8a000"/>
<line x1="1042.5" y1="1571.7" x2="1067.8" y2="1571.7" stroke="#b8b8b8" stroke-width="2" />
<text x="1075.3" y="1548" font-size="17.5" fill="#3a3a3a" textLength="10.5" lengthAdjust="spacing" stroke="#3a3a3a" stroke-width="0.2" >6</text>
<text x="1075.3" y="1577.1" font-size="17.5" fill="#3a3a3a" textLength="10.5" lengthAdjust="spacing" stroke="#3a3a3a" stroke-width="0.2" >0</text>
<text x="1075.3" y="1613" font-size="17.5" fill="#3a3a3a" textLength="10.5" lengthAdjust="spacing" stroke="#3a3a3a" stroke-width="0.2" >6</text>
<text x="1075.3" y="1650.3" font-size="17.5" fill="#3a3a3a" textLength="21" lengthAdjust="spacing" stroke="#3a3a3a" stroke-width="0.2" >12</text>
<text x="1075.3" y="1688" font-size="17.5" fill="#3a3a3a" textLength="21" lengthAdjust="spacing" stroke="#3a3a3a" stroke-width="0.2" >18</text>
<text x="1075.3" y="1723" font-size="17.5" fill="#3a3a3a" textLength="21" lengthAdjust="spacing" stroke="#3a3a3a" stroke-width="0.2" >24</text>
<text x="1075.3" y="1760.3" font-size="17.5" fill="#3a3a3a" textLength="21" lengthAdjust="spacing" stroke="#3a3a3a" stroke-width="0.2" >30</text>
<text x="1075.3" y="1793.8" font-size="17.5" fill="#3a3a3a" textLength="21" lengthAdjust="spacing" stroke="#3a3a3a" stroke-width="0.2" >36</text>
<text x="1075.3" y="1821.3" font-size="17.5" fill="#3a3a3a" textLength="21" lengthAdjust="spacing" stroke="#3a3a3a" stroke-width="0.2" >42</text>
<text x="1075.3" y="1845.8" font-size="17.5" fill="#3a3a3a" textLength="21" lengthAdjust="spacing" stroke="#3a3a3a" stroke-width="0.2" >48</text>
<text x="1075.3" y="1887.1" font-size="17.5" fill="#3a3a3a" textLength="21" lengthAdjust="spacing" stroke="#3a3a3a" stroke-width="0.2" >60</text>
<polygon points="1016.7,1565.5 1016.7,1590.5 1038.9,1578" fill="#0e0e0e" />
<path d="M978.8 1733.4A24.5 24.5 0 0 1 985.7 1777.3" fill="none" stroke="#151515" stroke-width="5" stroke-linecap="butt"/>
<path d="M965.2 1733.4A24.5 24.5 0 0 0 958.3 1777.3" fill="none" stroke="#151515" stroke-width="5" />
<line x1="972" y1="1730" x2="972" y2="1758" stroke="#151515" stroke-width="4.2" />
<polygon points="964.3,1719 979.7,1719 972,1727" fill="#151515" />
<rect x="948.7" y="1788.3" width="46.6" height="46.4" fill="#ffb700" stroke="#787878" stroke-width="2.2"/>
<text x="972" y="1820.3" font-size="24.5" fill="#151515" text-anchor="middle" font-weight="bold" >1</text>
<rect x="948.7" y="1844" width="46.6" height="26" fill="#d8d8d8" stroke="#787878" stroke-width="2.2"/>
<text x="972" y="1864.7" font-size="21.5" fill="#151515" text-anchor="middle" stroke="#151515" stroke-width="0.5" >S</text>
<rect x="948.7" y="1880" width="46.6" height="25.8" fill="#d8d8d8" stroke="#787878" stroke-width="2.2"/>
<circle cx="972" cy="1893" r="7.3" fill="#151515" />
<path d="M971.5 1887.5q5.5 2.5 3.5 7q-1.2 2.8 -4 3" fill="none" stroke="#e4e4e4" stroke-width="2" />
<rect x="1118.3" y="1468.7" width="194.7" height="48.3" fill="#8fa8ff"/>
<text x="1125.8" y="1506.7" font-size="21.5" fill="#1f2c5e" textLength="67.3" lengthAdjust="spacing" stroke="#1f2c5e" stroke-width="0.8" >Breaks</text>
<rect x="1118.3" y="1517" width="194.7" height="4.5" fill="#7d7d7d"/>
<rect x="1118.3" y="1521.5" width="194.7" height="398.5" fill="#a9a9a9"/>
<rect x="1118.3" y="1920" width="194.7" height="2.5" fill="#7d7d7d"/>
<rect x="1118.3" y="1922.5" width="194.7" height="13" fill="#8fa8ff"/>
<rect x="1133.8" y="1531.3" width="71.7" height="26.2" fill="#dcdcdc" rx="13.1" stroke="#555" stroke-width="1.8"/>
<text x="1169.6" y="1552.7" font-size="21.5" fill="#151515" text-anchor="middle" textLength="51" lengthAdjust="spacing" stroke="#151515" stroke-width="0.5" >-9.75</text>
<rect x="1133.8" y="1569.7" width="71.7" height="25.6" fill="#dcdcdc" stroke="#666" stroke-width="1.8"/>
<text x="1169.6" y="1590.7" font-size="21.5" fill="#151515" text-anchor="middle" textLength="38" lengthAdjust="spacing" stroke="#151515" stroke-width="0.5" >-9.4</text>
<line x1="1229.5" y1="1534" x2="1235.2" y2="1534" stroke="#5c5c5c" stroke-width="2.2" opacity="1"/>
<line x1="1229.5" y1="1571.7" x2="1235.2" y2="1571.7" stroke="#5c5c5c" stroke-width="2.2" opacity="1"/>
<line x1="1229.5" y1="1607" x2="1235.2" y2="1607" stroke="#5c5c5c" stroke-width="2.2" opacity="1"/>
<line x1="1229.5" y1="1644.5" x2="1235.2" y2="1644.5" stroke="#5c5c5c" stroke-width="2.2" opacity="1"/>
<line x1="1229.5" y1="1682" x2="1235.2" y2="1682" stroke="#5c5c5c" stroke-width="2.2" opacity="1"/>
<line x1="1229.5" y1="1717.5" x2="1235.2" y2="1717.5" stroke="#5c5c5c" stroke-width="2.2" opacity="1"/>
<line x1="1229.5" y1="1755" x2="1235.2" y2="1755" stroke="#5c5c5c" stroke-width="2.2" opacity="1"/>
<line x1="1229.5" y1="1788" x2="1235.2" y2="1788" stroke="#5c5c5c" stroke-width="2.2" opacity="1"/>
<line x1="1229.5" y1="1815" x2="1235.2" y2="1815" stroke="#5c5c5c" stroke-width="2.2" opacity="1"/>
<line x1="1229.5" y1="1840" x2="1235.2" y2="1840" stroke="#5c5c5c" stroke-width="2.2" opacity="1"/>
<line x1="1229.5" y1="1863.7" x2="1235.2" y2="1863.7" stroke="#5c5c5c" stroke-width="2.2" opacity="0.45"/>
<line x1="1229.5" y1="1882" x2="1235.2" y2="1882" stroke="#5c5c5c" stroke-width="2.2" opacity="1"/>
<line x1="1229.5" y1="1898" x2="1235.2" y2="1898" stroke="#5c5c5c" stroke-width="2.2" opacity="0.45"/>
<rect x="1240.5" y="1531.5" width="25.3" height="374" fill="#444" rx="3"/>
<rect x="1240.5" y="1531.5" width="11.6" height="374" fill="#222" rx="2.5"/>
<rect x="1241.3" y="1643" width="10" height="261.7" fill="url(#mdim)" rx="2"/>
<rect x="1241.3" y="1717" width="10" height="187.7" fill="url(#mbright)" rx="2"/>
<rect x="1240.5" y="1629.6" width="11.6" height="2.8" fill="#ffc800"/>
<rect x="1254.2" y="1531.5" width="11.6" height="374" fill="#222" rx="2.5"/>
<rect x="1255" y="1639" width="10" height="265.7" fill="url(#mdim)" rx="2"/>
<rect x="1255" y="1717" width="10" height="187.7" fill="url(#mbright)" rx="2"/>
<rect x="1254.2" y="1633.6" width="11.6" height="2.8" fill="#ffc800"/>
<line x1="1240.5" y1="1571.7" x2="1265.8" y2="1571.7" stroke="#b8b8b8" stroke-width="2" />
<text x="1273.3" y="1548" font-size="17.5" fill="#3a3a3a" textLength="10.5" lengthAdjust="spacing" stroke="#3a3a3a" stroke-width="0.2" >6</text>
<text x="1273.3" y="1577.1" font-size="17.5" fill="#3a3a3a" textLength="10.5" lengthAdjust="spacing" stroke="#3a3a3a" stroke-width="0.2" >0</text>
<text x="1273.3" y="1613" font-size="17.5" fill="#3a3a3a" textLength="10.5" lengthAdjust="spacing" stroke="#3a3a3a" stroke-width="0.2" >6</text>
<text x="1273.3" y="1650.3" font-size="17.5" fill="#3a3a3a" textLength="21" lengthAdjust="spacing" stroke="#3a3a3a" stroke-width="0.2" >12</text>
<text x="1273.3" y="1688" font-size="17.5" fill="#3a3a3a" textLength="21" lengthAdjust="spacing" stroke="#3a3a3a" stroke-width="0.2" >18</text>
<text x="1273.3" y="1723" font-size="17.5" fill="#3a3a3a" textLength="21" lengthAdjust="spacing" stroke="#3a3a3a" stroke-width="0.2" >24</text>
<text x="1273.3" y="1760.3" font-size="17.5" fill="#3a3a3a" textLength="21" lengthAdjust="spacing" stroke="#3a3a3a" stroke-width="0.2" >30</text>
<text x="1273.3" y="1793.8" font-size="17.5" fill="#3a3a3a" textLength="21" lengthAdjust="spacing" stroke="#3a3a3a" stroke-width="0.2" >36</text>
<text x="1273.3" y="1821.3" font-size="17.5" fill="#3a3a3a" textLength="21" lengthAdjust="spacing" stroke="#3a3a3a" stroke-width="0.2" >42</text>
<text x="1273.3" y="1845.8" font-size="17.5" fill="#3a3a3a" textLength="21" lengthAdjust="spacing" stroke="#3a3a3a" stroke-width="0.2" >48</text>
<text x="1273.3" y="1887.1" font-size="17.5" fill="#3a3a3a" textLength="21" lengthAdjust="spacing" stroke="#3a3a3a" stroke-width="0.2" >60</text>
<polygon points="1214.7,1615.5 1214.7,1640.5 1236.9,1628" fill="#0e0e0e" />
<path d="M1176.8 1733.4A24.5 24.5 0 0 1 1183.7 1777.3" fill="none" stroke="#151515" stroke-width="5" stroke-linecap="butt"/>
<path d="M1163.2 1733.4A24.5 24.5 0 0 0 1156.3 1777.3" fill="none" stroke="#151515" stroke-width="5" />
<line x1="1170" y1="1730" x2="1170" y2="1758" stroke="#151515" stroke-width="4.2" />
<polygon points="1162.3,1719 1177.7,1719 1170,1727" fill="#151515" />
<rect x="1146.7" y="1788.3" width="46.6" height="46.4" fill="#ffb700" stroke="#787878" stroke-width="2.2"/>
<text x="1170" y="1820.3" font-size="24.5" fill="#151515" text-anchor="middle" font-weight="bold" >2</text>
<rect x="1146.7" y="1844" width="46.6" height="26" fill="#d8d8d8" stroke="#787878" stroke-width="2.2"/>
<text x="1170" y="1864.7" font-size="21.5" fill="#151515" text-anchor="middle" stroke="#151515" stroke-width="0.5" >S</text>
<rect x="1146.7" y="1880" width="46.6" height="25.8" fill="#d8d8d8" stroke="#787878" stroke-width="2.2"/>
<circle cx="1170" cy="1893" r="7.5" fill="#808080" />
<rect x="1316.3" y="1468.7" width="194.7" height="48.3" fill="#6cc8ff"/>
<text x="1323.8" y="1506.7" font-size="21.5" fill="#173e57" textLength="111.3" lengthAdjust="spacing" stroke="#173e57" stroke-width="0.8" >Percussion</text>
<circle cx="1491.9" cy="1499" r="12" fill="none" stroke="#173e57" stroke-width="2.2" />
<line x1="1485.9" y1="1494" x2="1497.9" y2="1494" stroke="#173e57" stroke-width="2" />
<line x1="1485.9" y1="1499" x2="1497.9" y2="1499" stroke="#173e57" stroke-width="2" />
<line x1="1485.9" y1="1504" x2="1497.9" y2="1504" stroke="#173e57" stroke-width="2" />
<rect x="1316.3" y="1517" width="194.7" height="4.5" fill="#7d7d7d"/>
<rect x="1316.3" y="1521.5" width="194.7" height="398.5" fill="#a9a9a9"/>
<rect x="1316.3" y="1920" width="194.7" height="2.5" fill="#7d7d7d"/>
<rect x="1316.3" y="1922.5" width="194.7" height="13" fill="#6cc8ff"/>
<rect x="1331.8" y="1531.3" width="71.7" height="26.2" fill="#dcdcdc" rx="13.1" stroke="#555" stroke-width="1.8"/>
<text x="1367.6" y="1552.7" font-size="21.5" fill="#151515" text-anchor="middle" textLength="51" lengthAdjust="spacing" stroke="#151515" stroke-width="0.5" >-9.26</text>
<rect x="1331.8" y="1569.7" width="71.7" height="25.6" fill="#dcdcdc" stroke="#666" stroke-width="1.8"/>
<text x="1367.6" y="1590.7" font-size="21.5" fill="#151515" text-anchor="middle" textLength="11" lengthAdjust="spacing" stroke="#151515" stroke-width="0.5" >0</text>
<line x1="1427.5" y1="1534" x2="1433.2" y2="1534" stroke="#5c5c5c" stroke-width="2.2" opacity="1"/>
<line x1="1427.5" y1="1571.7" x2="1433.2" y2="1571.7" stroke="#5c5c5c" stroke-width="2.2" opacity="1"/>
<line x1="1427.5" y1="1607" x2="1433.2" y2="1607" stroke="#5c5c5c" stroke-width="2.2" opacity="1"/>
<line x1="1427.5" y1="1644.5" x2="1433.2" y2="1644.5" stroke="#5c5c5c" stroke-width="2.2" opacity="1"/>
<line x1="1427.5" y1="1682" x2="1433.2" y2="1682" stroke="#5c5c5c" stroke-width="2.2" opacity="1"/>
<line x1="1427.5" y1="1717.5" x2="1433.2" y2="1717.5" stroke="#5c5c5c" stroke-width="2.2" opacity="1"/>
<line x1="1427.5" y1="1755" x2="1433.2" y2="1755" stroke="#5c5c5c" stroke-width="2.2" opacity="1"/>
<line x1="1427.5" y1="1788" x2="1433.2" y2="1788" stroke="#5c5c5c" stroke-width="2.2" opacity="1"/>
<line x1="1427.5" y1="1815" x2="1433.2" y2="1815" stroke="#5c5c5c" stroke-width="2.2" opacity="1"/>
<line x1="1427.5" y1="1840" x2="1433.2" y2="1840" stroke="#5c5c5c" stroke-width="2.2" opacity="1"/>
<line x1="1427.5" y1="1863.7" x2="1433.2" y2="1863.7" stroke="#5c5c5c" stroke-width="2.2" opacity="0.45"/>
<line x1="1427.5" y1="1882" x2="1433.2" y2="1882" stroke="#5c5c5c" stroke-width="2.2" opacity="1"/>
<line x1="1427.5" y1="1898" x2="1433.2" y2="1898" stroke="#5c5c5c" stroke-width="2.2" opacity="0.45"/>
<rect x="1438.5" y="1531.5" width="25.3" height="374" fill="#444" rx="3"/>
<rect x="1438.5" y="1531.5" width="11.6" height="374" fill="#222" rx="2.5"/>
<rect x="1439.3" y="1689.5" width="10" height="215.2" fill="url(#mdim)" rx="2"/>
<rect x="1439.3" y="1703" width="10" height="201.7" fill="url(#mbright)" rx="2"/>
<rect x="1438.5" y="1627.1" width="11.6" height="2.8" fill="#e8b000"/>
<rect x="1452.2" y="1531.5" width="11.6" height="374" fill="#222" rx="2.5"/>
<rect x="1453" y="1695" width="10" height="209.7" fill="url(#mdim)" rx="2"/>
<rect x="1453" y="1703" width="10" height="201.7" fill="url(#mbright)" rx="2"/>
<rect x="1452.2" y="1628.1" width="11.6" height="2.8" fill="#e8b000"/>
<line x1="1438.5" y1="1571.7" x2="1463.8" y2="1571.7" stroke="#b8b8b8" stroke-width="2" />
<text x="1471.3" y="1548" font-size="17.5" fill="#3a3a3a" textLength="10.5" lengthAdjust="spacing" stroke="#3a3a3a" stroke-width="0.2" >6</text>
<text x="1471.3" y="1577.1" font-size="17.5" fill="#3a3a3a" textLength="10.5" lengthAdjust="spacing" stroke="#3a3a3a" stroke-width="0.2" >0</text>
<text x="1471.3" y="1613" font-size="17.5" fill="#3a3a3a" textLength="10.5" lengthAdjust="spacing" stroke="#3a3a3a" stroke-width="0.2" >6</text>
<text x="1471.3" y="1650.3" font-size="17.5" fill="#3a3a3a" textLength="21" lengthAdjust="spacing" stroke="#3a3a3a" stroke-width="0.2" >12</text>
<text x="1471.3" y="1688" font-size="17.5" fill="#3a3a3a" textLength="21" lengthAdjust="spacing" stroke="#3a3a3a" stroke-width="0.2" >18</text>
<text x="1471.3" y="1723" font-size="17.5" fill="#3a3a3a" textLength="21" lengthAdjust="spacing" stroke="#3a3a3a" stroke-width="0.2" >24</text>
<text x="1471.3" y="1760.3" font-size="17.5" fill="#3a3a3a" textLength="21" lengthAdjust="spacing" stroke="#3a3a3a" stroke-width="0.2" >30</text>
<text x="1471.3" y="1793.8" font-size="17.5" fill="#3a3a3a" textLength="21" lengthAdjust="spacing" stroke="#3a3a3a" stroke-width="0.2" >36</text>
<text x="1471.3" y="1821.3" font-size="17.5" fill="#3a3a3a" textLength="21" lengthAdjust="spacing" stroke="#3a3a3a" stroke-width="0.2" >42</text>
<text x="1471.3" y="1845.8" font-size="17.5" fill="#3a3a3a" textLength="21" lengthAdjust="spacing" stroke="#3a3a3a" stroke-width="0.2" >48</text>
<text x="1471.3" y="1887.1" font-size="17.5" fill="#3a3a3a" textLength="21" lengthAdjust="spacing" stroke="#3a3a3a" stroke-width="0.2" >60</text>
<polygon points="1412.7,1559 1412.7,1584 1434.9,1571.5" fill="#0e0e0e" />
<path d="M1374.8 1733.4A24.5 24.5 0 0 1 1381.7 1777.3" fill="none" stroke="#151515" stroke-width="5" stroke-linecap="butt"/>
<path d="M1361.2 1733.4A24.5 24.5 0 0 0 1354.3 1777.3" fill="none" stroke="#151515" stroke-width="5" />
<line x1="1368" y1="1730" x2="1368" y2="1758" stroke="#151515" stroke-width="4.2" />
<polygon points="1360.3,1719 1375.7,1719 1368,1727" fill="#151515" />
<rect x="1344.7" y="1788.3" width="46.6" height="46.4" fill="#ffb700" stroke="#787878" stroke-width="2.2"/>
<text x="1368" y="1820.3" font-size="24.5" fill="#151515" text-anchor="middle" font-weight="bold" >3</text>
<rect x="1344.7" y="1844" width="46.6" height="26" fill="#d8d8d8" stroke="#787878" stroke-width="2.2"/>
<text x="1368" y="1864.7" font-size="21.5" fill="#151515" text-anchor="middle" stroke="#151515" stroke-width="0.5" >S</text>
<rect x="1514.3" y="1468.7" width="194.7" height="48.3" fill="#00ffe6"/>
<text x="1521.8" y="1506.7" font-size="21.5" fill="#0a4f49" textLength="44.5" lengthAdjust="spacing" stroke="#0a4f49" stroke-width="0.8" >Bass</text>
<rect x="1514.3" y="1517" width="194.7" height="4.5" fill="#7d7d7d"/>
<rect x="1514.3" y="1521.5" width="194.7" height="398.5" fill="#a9a9a9"/>
<rect x="1514.3" y="1920" width="194.7" height="2.5" fill="#7d7d7d"/>
<rect x="1514.3" y="1922.5" width="194.7" height="13" fill="#00ffe6"/>
<rect x="1529.8" y="1531.3" width="71.7" height="26.2" fill="#dcdcdc" rx="13.1" stroke="#555" stroke-width="1.8"/>
<text x="1565.6" y="1552.7" font-size="21.5" fill="#151515" text-anchor="middle" textLength="51" lengthAdjust="spacing" stroke="#151515" stroke-width="0.5" >-10.8</text>
<rect x="1529.8" y="1569.7" width="71.7" height="25.6" fill="#dcdcdc" stroke="#666" stroke-width="1.8"/>
<text x="1565.6" y="1590.7" font-size="21.5" fill="#151515" text-anchor="middle" textLength="38" lengthAdjust="spacing" stroke="#151515" stroke-width="0.5" >-7.7</text>
<line x1="1625.5" y1="1534" x2="1631.2" y2="1534" stroke="#5c5c5c" stroke-width="2.2" opacity="1"/>
<line x1="1625.5" y1="1571.7" x2="1631.2" y2="1571.7" stroke="#5c5c5c" stroke-width="2.2" opacity="1"/>
<line x1="1625.5" y1="1607" x2="1631.2" y2="1607" stroke="#5c5c5c" stroke-width="2.2" opacity="1"/>
<line x1="1625.5" y1="1644.5" x2="1631.2" y2="1644.5" stroke="#5c5c5c" stroke-width="2.2" opacity="1"/>
<line x1="1625.5" y1="1682" x2="1631.2" y2="1682" stroke="#5c5c5c" stroke-width="2.2" opacity="1"/>
<line x1="1625.5" y1="1717.5" x2="1631.2" y2="1717.5" stroke="#5c5c5c" stroke-width="2.2" opacity="1"/>
<line x1="1625.5" y1="1755" x2="1631.2" y2="1755" stroke="#5c5c5c" stroke-width="2.2" opacity="1"/>
<line x1="1625.5" y1="1788" x2="1631.2" y2="1788" stroke="#5c5c5c" stroke-width="2.2" opacity="1"/>
<line x1="1625.5" y1="1815" x2="1631.2" y2="1815" stroke="#5c5c5c" stroke-width="2.2" opacity="1"/>
<line x1="1625.5" y1="1840" x2="1631.2" y2="1840" stroke="#5c5c5c" stroke-width="2.2" opacity="1"/>
<line x1="1625.5" y1="1863.7" x2="1631.2" y2="1863.7" stroke="#5c5c5c" stroke-width="2.2" opacity="0.45"/>
<line x1="1625.5" y1="1882" x2="1631.2" y2="1882" stroke="#5c5c5c" stroke-width="2.2" opacity="1"/>
<line x1="1625.5" y1="1898" x2="1631.2" y2="1898" stroke="#5c5c5c" stroke-width="2.2" opacity="0.45"/>
<rect x="1636.5" y="1531.5" width="25.3" height="374" fill="#444" rx="3"/>
<rect x="1636.5" y="1531.5" width="11.6" height="374" fill="#222" rx="2.5"/>
<rect x="1637.3" y="1644" width="10" height="260.7" fill="url(#mdim)" rx="2"/>
<rect x="1637.3" y="1660" width="10" height="244.7" fill="url(#mbright)" rx="2"/>
<rect x="1636.5" y="1626.1" width="11.6" height="2.8" fill="#e8a000"/>
<rect x="1650.2" y="1531.5" width="11.6" height="374" fill="#222" rx="2.5"/>
<rect x="1651" y="1644" width="10" height="260.7" fill="url(#mdim)" rx="2"/>
<rect x="1651" y="1660" width="10" height="244.7" fill="url(#mbright)" rx="2"/>
<rect x="1650.2" y="1626.1" width="11.6" height="2.8" fill="#e8a000"/>
<line x1="1636.5" y1="1571.7" x2="1661.8" y2="1571.7" stroke="#b8b8b8" stroke-width="2" />
<text x="1669.3" y="1548" font-size="17.5" fill="#3a3a3a" textLength="10.5" lengthAdjust="spacing" stroke="#3a3a3a" stroke-width="0.2" >6</text>
<text x="1669.3" y="1577.1" font-size="17.5" fill="#3a3a3a" textLength="10.5" lengthAdjust="spacing" stroke="#3a3a3a" stroke-width="0.2" >0</text>
<text x="1669.3" y="1613" font-size="17.5" fill="#3a3a3a" textLength="10.5" lengthAdjust="spacing" stroke="#3a3a3a" stroke-width="0.2" >6</text>
<text x="1669.3" y="1650.3" font-size="17.5" fill="#3a3a3a" textLength="21" lengthAdjust="spacing" stroke="#3a3a3a" stroke-width="0.2" >12</text>
<text x="1669.3" y="1688" font-size="17.5" fill="#3a3a3a" textLength="21" lengthAdjust="spacing" stroke="#3a3a3a" stroke-width="0.2" >18</text>
<text x="1669.3" y="1723" font-size="17.5" fill="#3a3a3a" textLength="21" lengthAdjust="spacing" stroke="#3a3a3a" stroke-width="0.2" >24</text>
<text x="1669.3" y="1760.3" font-size="17.5" fill="#3a3a3a" textLength="21" lengthAdjust="spacing" stroke="#3a3a3a" stroke-width="0.2" >30</text>
<text x="1669.3" y="1793.8" font-size="17.5" fill="#3a3a3a" textLength="21" lengthAdjust="spacing" stroke="#3a3a3a" stroke-width="0.2" >36</text>
<text x="1669.3" y="1821.3" font-size="17.5" fill="#3a3a3a" textLength="21" lengthAdjust="spacing" stroke="#3a3a3a" stroke-width="0.2" >42</text>
<text x="1669.3" y="1845.8" font-size="17.5" fill="#3a3a3a" textLength="21" lengthAdjust="spacing" stroke="#3a3a3a" stroke-width="0.2" >48</text>
<text x="1669.3" y="1887.1" font-size="17.5" fill="#3a3a3a" textLength="21" lengthAdjust="spacing" stroke="#3a3a3a" stroke-width="0.2" >60</text>
<polygon points="1610.7,1604.5 1610.7,1629.5 1632.9,1617" fill="#0e0e0e" />
<path d="M1572.8 1733.4A24.5 24.5 0 0 1 1579.7 1777.3" fill="none" stroke="#151515" stroke-width="5" stroke-linecap="butt"/>
<path d="M1559.2 1733.4A24.5 24.5 0 0 0 1552.3 1777.3" fill="none" stroke="#151515" stroke-width="5" />
<line x1="1566" y1="1730" x2="1566" y2="1758" stroke="#151515" stroke-width="4.2" />
<polygon points="1558.3,1719 1573.7,1719 1566,1727" fill="#151515" />
<rect x="1542.7" y="1788.3" width="46.6" height="46.4" fill="#ffb700" stroke="#787878" stroke-width="2.2"/>
<text x="1566" y="1820.3" font-size="24.5" fill="#151515" text-anchor="middle" font-weight="bold" >8</text>
<rect x="1542.7" y="1844" width="46.6" height="26" fill="#d8d8d8" stroke="#787878" stroke-width="2.2"/>
<text x="1566" y="1864.7" font-size="21.5" fill="#151515" text-anchor="middle" stroke="#151515" stroke-width="0.5" >S</text>
<rect x="1542.7" y="1880" width="46.6" height="25.8" fill="#d8d8d8" stroke="#787878" stroke-width="2.2"/>
<circle cx="1566" cy="1893" r="7.3" fill="#151515" />
<path d="M1565.5 1887.5q5.5 2.5 3.5 7q-1.2 2.8 -4 3" fill="none" stroke="#e4e4e4" stroke-width="2" />
<rect x="1712.3" y="1468.7" width="194.7" height="48.3" fill="#00ffe6"/>
<text x="1719.8" y="1506.7" font-size="21.5" fill="#0a4f49" textLength="100" lengthAdjust="spacing" stroke="#0a4f49" stroke-width="0.8" >Bass Drop</text>
<circle cx="1887.9" cy="1499" r="12" fill="none" stroke="#0a4f49" stroke-width="2.2" />
<polygon points="1880.4,1495.5 1895.4,1495.5 1887.9,1506.5" fill="#0a4f49" />
<rect x="1712.3" y="1517" width="194.7" height="4.5" fill="#7d7d7d"/>
<rect x="1712.3" y="1521.5" width="194.7" height="398.5" fill="#a9a9a9"/>
<rect x="1712.3" y="1920" width="194.7" height="2.5" fill="#7d7d7d"/>
<rect x="1712.3" y="1922.5" width="194.7" height="13" fill="#00ffe6"/>
<rect x="1727.8" y="1531.3" width="71.7" height="26.2" fill="#dcdcdc" rx="13.1" stroke="#555" stroke-width="1.8"/>
<text x="1763.6" y="1552.7" font-size="21.5" fill="#151515" text-anchor="middle" textLength="51" lengthAdjust="spacing" stroke="#151515" stroke-width="0.5" >-11.3</text>
<rect x="1727.8" y="1569.7" width="71.7" height="25.6" fill="#dcdcdc" stroke="#666" stroke-width="1.8"/>
<text x="1763.6" y="1590.7" font-size="21.5" fill="#151515" text-anchor="middle" textLength="38" lengthAdjust="spacing" stroke="#151515" stroke-width="0.5" >-0.2</text>
<line x1="1823.5" y1="1534" x2="1829.2" y2="1534" stroke="#5c5c5c" stroke-width="2.2" opacity="1"/>
<line x1="1823.5" y1="1571.7" x2="1829.2" y2="1571.7" stroke="#5c5c5c" stroke-width="2.2" opacity="1"/>
<line x1="1823.5" y1="1607" x2="1829.2" y2="1607" stroke="#5c5c5c" stroke-width="2.2" opacity="1"/>
<line x1="1823.5" y1="1644.5" x2="1829.2" y2="1644.5" stroke="#5c5c5c" stroke-width="2.2" opacity="1"/>
<line x1="1823.5" y1="1682" x2="1829.2" y2="1682" stroke="#5c5c5c" stroke-width="2.2" opacity="1"/>
<line x1="1823.5" y1="1717.5" x2="1829.2" y2="1717.5" stroke="#5c5c5c" stroke-width="2.2" opacity="1"/>
<line x1="1823.5" y1="1755" x2="1829.2" y2="1755" stroke="#5c5c5c" stroke-width="2.2" opacity="1"/>
<line x1="1823.5" y1="1788" x2="1829.2" y2="1788" stroke="#5c5c5c" stroke-width="2.2" opacity="1"/>
<line x1="1823.5" y1="1815" x2="1829.2" y2="1815" stroke="#5c5c5c" stroke-width="2.2" opacity="1"/>
<line x1="1823.5" y1="1840" x2="1829.2" y2="1840" stroke="#5c5c5c" stroke-width="2.2" opacity="1"/>
<line x1="1823.5" y1="1863.7" x2="1829.2" y2="1863.7" stroke="#5c5c5c" stroke-width="2.2" opacity="0.45"/>
<line x1="1823.5" y1="1882" x2="1829.2" y2="1882" stroke="#5c5c5c" stroke-width="2.2" opacity="1"/>
<line x1="1823.5" y1="1898" x2="1829.2" y2="1898" stroke="#5c5c5c" stroke-width="2.2" opacity="0.45"/>
<rect x="1834.5" y="1531.5" width="25.3" height="374" fill="#444" rx="3"/>
<rect x="1834.5" y="1531.5" width="11.6" height="374" fill="#222" rx="2.5"/>
<rect x="1835.3" y="1719" width="10" height="185.7" fill="url(#mdim)" rx="2"/>
<rect x="1835.3" y="1719" width="10" height="185.7" fill="url(#mbright)" rx="2"/>
<rect x="1834.5" y="1640.1" width="11.6" height="2.8" fill="#d8b000"/>
<rect x="1848.2" y="1531.5" width="11.6" height="374" fill="#222" rx="2.5"/>
<rect x="1849" y="1718" width="10" height="186.7" fill="url(#mdim)" rx="2"/>
<rect x="1849" y="1718" width="10" height="186.7" fill="url(#mbright)" rx="2"/>
<rect x="1848.2" y="1641.1" width="11.6" height="2.8" fill="#d8b000"/>
<line x1="1834.5" y1="1571.7" x2="1859.8" y2="1571.7" stroke="#b8b8b8" stroke-width="2" />
<text x="1867.3" y="1548" font-size="17.5" fill="#3a3a3a" textLength="10.5" lengthAdjust="spacing" stroke="#3a3a3a" stroke-width="0.2" >6</text>
<text x="1867.3" y="1577.1" font-size="17.5" fill="#3a3a3a" textLength="10.5" lengthAdjust="spacing" stroke="#3a3a3a" stroke-width="0.2" >0</text>
<text x="1867.3" y="1613" font-size="17.5" fill="#3a3a3a" textLength="10.5" lengthAdjust="spacing" stroke="#3a3a3a" stroke-width="0.2" >6</text>
<text x="1867.3" y="1650.3" font-size="17.5" fill="#3a3a3a" textLength="21" lengthAdjust="spacing" stroke="#3a3a3a" stroke-width="0.2" >12</text>
<text x="1867.3" y="1688" font-size="17.5" fill="#3a3a3a" textLength="21" lengthAdjust="spacing" stroke="#3a3a3a" stroke-width="0.2" >18</text>
<text x="1867.3" y="1723" font-size="17.5" fill="#3a3a3a" textLength="21" lengthAdjust="spacing" stroke="#3a3a3a" stroke-width="0.2" >24</text>
<text x="1867.3" y="1760.3" font-size="17.5" fill="#3a3a3a" textLength="21" lengthAdjust="spacing" stroke="#3a3a3a" stroke-width="0.2" >30</text>
<text x="1867.3" y="1793.8" font-size="17.5" fill="#3a3a3a" textLength="21" lengthAdjust="spacing" stroke="#3a3a3a" stroke-width="0.2" >36</text>
<text x="1867.3" y="1821.3" font-size="17.5" fill="#3a3a3a" textLength="21" lengthAdjust="spacing" stroke="#3a3a3a" stroke-width="0.2" >42</text>
<text x="1867.3" y="1845.8" font-size="17.5" fill="#3a3a3a" textLength="21" lengthAdjust="spacing" stroke="#3a3a3a" stroke-width="0.2" >48</text>
<text x="1867.3" y="1887.1" font-size="17.5" fill="#3a3a3a" textLength="21" lengthAdjust="spacing" stroke="#3a3a3a" stroke-width="0.2" >60</text>
<polygon points="1808.7,1559 1808.7,1584 1830.9,1571.5" fill="#0e0e0e" />
<path d="M1770.8 1733.4A24.5 24.5 0 0 1 1777.7 1777.3" fill="none" stroke="#151515" stroke-width="5" stroke-linecap="butt"/>
<path d="M1757.2 1733.4A24.5 24.5 0 0 0 1750.3 1777.3" fill="none" stroke="#151515" stroke-width="5" />
<line x1="1764" y1="1730" x2="1764" y2="1758" stroke="#151515" stroke-width="4.2" />
<polygon points="1756.3,1719 1771.7,1719 1764,1727" fill="#151515" />
<rect x="1740.7" y="1788.3" width="46.6" height="46.4" fill="#ffb700" stroke="#787878" stroke-width="2.2"/>
<text x="1764" y="1820.3" font-size="24.5" fill="#151515" text-anchor="middle" font-weight="bold" >9</text>
<rect x="1740.7" y="1844" width="46.6" height="26" fill="#d8d8d8" stroke="#787878" stroke-width="2.2"/>
<text x="1764" y="1864.7" font-size="21.5" fill="#151515" text-anchor="middle" stroke="#151515" stroke-width="0.5" >S</text>
<rect x="1740.7" y="1880" width="46.6" height="25.8" fill="#d8d8d8" stroke="#787878" stroke-width="2.2"/>
<circle cx="1764" cy="1893" r="7.3" fill="#151515" />
<path d="M1763.5 1887.5q5.5 2.5 3.5 7q-1.2 2.8 -4 3" fill="none" stroke="#e4e4e4" stroke-width="2" />
<rect x="1910.3" y="1468.7" width="194.7" height="48.3" fill="#e9ffa9"/>
<text x="1917.8" y="1506.7" font-size="21.5" fill="#4c5532" textLength="115.6" lengthAdjust="spacing" stroke="#4c5532" stroke-width="0.8" >Synth Riser</text>
<circle cx="2085.9" cy="1499" r="12" fill="none" stroke="#4c5532" stroke-width="2.2" />
<polygon points="2078.4,1495.5 2093.4,1495.5 2085.9,1506.5" fill="#4c5532" />
<rect x="1910.3" y="1517" width="194.7" height="4.5" fill="#7d7d7d"/>
<rect x="1910.3" y="1521.5" width="194.7" height="398.5" fill="#a9a9a9"/>
<rect x="1910.3" y="1920" width="194.7" height="2.5" fill="#7d7d7d"/>
<rect x="1910.3" y="1922.5" width="194.7" height="13" fill="#e9ffa9"/>
<rect x="1925.8" y="1531.3" width="71.7" height="26.2" fill="#dcdcdc" rx="13.1" stroke="#555" stroke-width="1.8"/>
<text x="1961.6" y="1552.7" font-size="21.5" fill="#151515" text-anchor="middle" textLength="51" lengthAdjust="spacing" stroke="#151515" stroke-width="0.5" >-47.4</text>
<rect x="1925.8" y="1569.7" width="71.7" height="25.6" fill="#dcdcdc" stroke="#666" stroke-width="1.8"/>
<text x="1961.6" y="1590.7" font-size="21.5" fill="#151515" text-anchor="middle" textLength="49" lengthAdjust="spacing" stroke="#151515" stroke-width="0.5" >-18.0</text>
<line x1="2021.5" y1="1534" x2="2027.2" y2="1534" stroke="#5c5c5c" stroke-width="2.2" opacity="1"/>
<line x1="2021.5" y1="1571.7" x2="2027.2" y2="1571.7" stroke="#5c5c5c" stroke-width="2.2" opacity="1"/>
<line x1="2021.5" y1="1607" x2="2027.2" y2="1607" stroke="#5c5c5c" stroke-width="2.2" opacity="1"/>
<line x1="2021.5" y1="1644.5" x2="2027.2" y2="1644.5" stroke="#5c5c5c" stroke-width="2.2" opacity="1"/>
<line x1="2021.5" y1="1682" x2="2027.2" y2="1682" stroke="#5c5c5c" stroke-width="2.2" opacity="1"/>
<line x1="2021.5" y1="1717.5" x2="2027.2" y2="1717.5" stroke="#5c5c5c" stroke-width="2.2" opacity="1"/>
<line x1="2021.5" y1="1755" x2="2027.2" y2="1755" stroke="#5c5c5c" stroke-width="2.2" opacity="1"/>
<line x1="2021.5" y1="1788" x2="2027.2" y2="1788" stroke="#5c5c5c" stroke-width="2.2" opacity="1"/>
<line x1="2021.5" y1="1815" x2="2027.2" y2="1815" stroke="#5c5c5c" stroke-width="2.2" opacity="1"/>
<line x1="2021.5" y1="1840" x2="2027.2" y2="1840" stroke="#5c5c5c" stroke-width="2.2" opacity="1"/>
<line x1="2021.5" y1="1863.7" x2="2027.2" y2="1863.7" stroke="#5c5c5c" stroke-width="2.2" opacity="0.45"/>
<line x1="2021.5" y1="1882" x2="2027.2" y2="1882" stroke="#5c5c5c" stroke-width="2.2" opacity="1"/>
<line x1="2021.5" y1="1898" x2="2027.2" y2="1898" stroke="#5c5c5c" stroke-width="2.2" opacity="0.45"/>
<rect x="2032.5" y="1531.5" width="25.3" height="374" fill="#444" rx="3"/>
<rect x="2032.5" y="1531.5" width="11.6" height="374" fill="#222" rx="2.5"/>
<rect x="2033.3" y="1844.5" width="10" height="60.2" fill="url(#mdim)" rx="2"/>
<rect x="2033.3" y="1852" width="10" height="52.7" fill="url(#mbright)" rx="2"/>
<rect x="2032.5" y="1783.6" width="11.6" height="2.8" fill="#10d048"/>
<rect x="2046.2" y="1531.5" width="11.6" height="374" fill="#222" rx="2.5"/>
<rect x="2047" y="1852.5" width="10" height="52.2" fill="url(#mdim)" rx="2"/>
<rect x="2047" y="1853" width="10" height="51.7" fill="url(#mbright)" rx="2"/>
<rect x="2046.2" y="1782.6" width="11.6" height="2.8" fill="#10d048"/>
<line x1="2032.5" y1="1571.7" x2="2057.8" y2="1571.7" stroke="#b8b8b8" stroke-width="2" />
<text x="2065.3" y="1548" font-size="17.5" fill="#3a3a3a" textLength="10.5" lengthAdjust="spacing" stroke="#3a3a3a" stroke-width="0.2" >6</text>
<text x="2065.3" y="1577.1" font-size="17.5" fill="#3a3a3a" textLength="10.5" lengthAdjust="spacing" stroke="#3a3a3a" stroke-width="0.2" >0</text>
<text x="2065.3" y="1613" font-size="17.5" fill="#3a3a3a" textLength="10.5" lengthAdjust="spacing" stroke="#3a3a3a" stroke-width="0.2" >6</text>
<text x="2065.3" y="1650.3" font-size="17.5" fill="#3a3a3a" textLength="21" lengthAdjust="spacing" stroke="#3a3a3a" stroke-width="0.2" >12</text>
<text x="2065.3" y="1688" font-size="17.5" fill="#3a3a3a" textLength="21" lengthAdjust="spacing" stroke="#3a3a3a" stroke-width="0.2" >18</text>
<text x="2065.3" y="1723" font-size="17.5" fill="#3a3a3a" textLength="21" lengthAdjust="spacing" stroke="#3a3a3a" stroke-width="0.2" >24</text>
<text x="2065.3" y="1760.3" font-size="17.5" fill="#3a3a3a" textLength="21" lengthAdjust="spacing" stroke="#3a3a3a" stroke-width="0.2" >30</text>
<text x="2065.3" y="1793.8" font-size="17.5" fill="#3a3a3a" textLength="21" lengthAdjust="spacing" stroke="#3a3a3a" stroke-width="0.2" >36</text>
<text x="2065.3" y="1821.3" font-size="17.5" fill="#3a3a3a" textLength="21" lengthAdjust="spacing" stroke="#3a3a3a" stroke-width="0.2" >42</text>
<text x="2065.3" y="1845.8" font-size="17.5" fill="#3a3a3a" textLength="21" lengthAdjust="spacing" stroke="#3a3a3a" stroke-width="0.2" >48</text>
<text x="2065.3" y="1887.1" font-size="17.5" fill="#3a3a3a" textLength="21" lengthAdjust="spacing" stroke="#3a3a3a" stroke-width="0.2" >60</text>
<polygon points="2006.7,1669.2 2006.7,1694.2 2028.9,1681.7" fill="#0e0e0e" />
<path d="M1968.8 1733.4A24.5 24.5 0 0 1 1975.7 1777.3" fill="none" stroke="#151515" stroke-width="5" stroke-linecap="butt"/>
<path d="M1955.2 1733.4A24.5 24.5 0 0 0 1948.3 1777.3" fill="none" stroke="#151515" stroke-width="5" />
<line x1="1962" y1="1730" x2="1962" y2="1758" stroke="#151515" stroke-width="4.2" />
<polygon points="1954.3,1719 1969.7,1719 1962,1727" fill="#151515" />
<rect x="1938.7" y="1788.3" width="46.6" height="46.4" fill="#ffb700" stroke="#787878" stroke-width="2.2"/>
<text x="1962" y="1820.3" font-size="24.5" fill="#151515" text-anchor="middle" font-weight="bold" >10</text>
<rect x="1938.7" y="1844" width="46.6" height="26" fill="#d8d8d8" stroke="#787878" stroke-width="2.2"/>
<text x="1962" y="1864.7" font-size="21.5" fill="#151515" text-anchor="middle" stroke="#151515" stroke-width="0.5" >S</text>
<rect x="1938.7" y="1880" width="46.6" height="25.8" fill="#d8d8d8" stroke="#787878" stroke-width="2.2"/>
<circle cx="1962" cy="1893" r="7.3" fill="#151515" />
<path d="M1961.5 1887.5q5.5 2.5 3.5 7q-1.2 2.8 -4 3" fill="none" stroke="#e4e4e4" stroke-width="2" />
<rect x="2108.3" y="1468.7" width="194.7" height="48.3" fill="#fdf27c"/>
<text x="2115.8" y="1506.7" font-size="21.5" fill="#4f4a22" textLength="47.8" lengthAdjust="spacing" stroke="#4f4a22" stroke-width="0.8" >Keys</text>
<rect x="2108.3" y="1517" width="194.7" height="4.5" fill="#7d7d7d"/>
<rect x="2108.3" y="1521.5" width="194.7" height="398.5" fill="#a9a9a9"/>
<rect x="2108.3" y="1920" width="194.7" height="2.5" fill="#7d7d7d"/>
<rect x="2108.3" y="1922.5" width="194.7" height="13" fill="#fdf27c"/>
<rect x="2123.8" y="1531.3" width="71.7" height="26.2" fill="#dcdcdc" rx="13.1" stroke="#555" stroke-width="1.8"/>
<text x="2159.6" y="1552.7" font-size="21.5" fill="#151515" text-anchor="middle" textLength="51" lengthAdjust="spacing" stroke="#151515" stroke-width="0.5" >-19.4</text>
<rect x="2123.8" y="1569.7" width="71.7" height="25.6" fill="#dcdcdc" stroke="#666" stroke-width="1.8"/>
<text x="2159.6" y="1590.7" font-size="21.5" fill="#151515" text-anchor="middle" textLength="38" lengthAdjust="spacing" stroke="#151515" stroke-width="0.5" >-6.6</text>
<line x1="2219.5" y1="1534" x2="2225.2" y2="1534" stroke="#5c5c5c" stroke-width="2.2" opacity="1"/>
<line x1="2219.5" y1="1571.7" x2="2225.2" y2="1571.7" stroke="#5c5c5c" stroke-width="2.2" opacity="1"/>
<line x1="2219.5" y1="1607" x2="2225.2" y2="1607" stroke="#5c5c5c" stroke-width="2.2" opacity="1"/>
<line x1="2219.5" y1="1644.5" x2="2225.2" y2="1644.5" stroke="#5c5c5c" stroke-width="2.2" opacity="1"/>
<line x1="2219.5" y1="1682" x2="2225.2" y2="1682" stroke="#5c5c5c" stroke-width="2.2" opacity="1"/>
<line x1="2219.5" y1="1717.5" x2="2225.2" y2="1717.5" stroke="#5c5c5c" stroke-width="2.2" opacity="1"/>
<line x1="2219.5" y1="1755" x2="2225.2" y2="1755" stroke="#5c5c5c" stroke-width="2.2" opacity="1"/>
<line x1="2219.5" y1="1788" x2="2225.2" y2="1788" stroke="#5c5c5c" stroke-width="2.2" opacity="1"/>
<line x1="2219.5" y1="1815" x2="2225.2" y2="1815" stroke="#5c5c5c" stroke-width="2.2" opacity="1"/>
<line x1="2219.5" y1="1840" x2="2225.2" y2="1840" stroke="#5c5c5c" stroke-width="2.2" opacity="1"/>
<line x1="2219.5" y1="1863.7" x2="2225.2" y2="1863.7" stroke="#5c5c5c" stroke-width="2.2" opacity="0.45"/>
<line x1="2219.5" y1="1882" x2="2225.2" y2="1882" stroke="#5c5c5c" stroke-width="2.2" opacity="1"/>
<line x1="2219.5" y1="1898" x2="2225.2" y2="1898" stroke="#5c5c5c" stroke-width="2.2" opacity="0.45"/>
<rect x="2230.5" y="1531.5" width="25.3" height="374" fill="#444" rx="3"/>
<rect x="2230.5" y="1531.5" width="11.6" height="374" fill="#222" rx="2.5"/>
<rect x="2231.3" y="1724.5" width="10" height="180.2" fill="url(#mdim)" rx="2"/>
<rect x="2231.3" y="1757.5" width="10" height="147.2" fill="url(#mbright)" rx="2"/>
<rect x="2230.5" y="1706.6" width="11.6" height="2.8" fill="#10d048"/>
<rect x="2244.2" y="1531.5" width="11.6" height="374" fill="#222" rx="2.5"/>
<rect x="2245" y="1732" width="10" height="172.7" fill="url(#mdim)" rx="2"/>
<rect x="2245" y="1757.5" width="10" height="147.2" fill="url(#mbright)" rx="2"/>
<rect x="2244.2" y="1688.6" width="11.6" height="2.8" fill="#10d048"/>
<line x1="2230.5" y1="1571.7" x2="2255.8" y2="1571.7" stroke="#b8b8b8" stroke-width="2" />
<text x="2263.3" y="1548" font-size="17.5" fill="#3a3a3a" textLength="10.5" lengthAdjust="spacing" stroke="#3a3a3a" stroke-width="0.2" >6</text>
<text x="2263.3" y="1577.1" font-size="17.5" fill="#3a3a3a" textLength="10.5" lengthAdjust="spacing" stroke="#3a3a3a" stroke-width="0.2" >0</text>
<text x="2263.3" y="1613" font-size="17.5" fill="#3a3a3a" textLength="10.5" lengthAdjust="spacing" stroke="#3a3a3a" stroke-width="0.2" >6</text>
<text x="2263.3" y="1650.3" font-size="17.5" fill="#3a3a3a" textLength="21" lengthAdjust="spacing" stroke="#3a3a3a" stroke-width="0.2" >12</text>
<text x="2263.3" y="1688" font-size="17.5" fill="#3a3a3a" textLength="21" lengthAdjust="spacing" stroke="#3a3a3a" stroke-width="0.2" >18</text>
<text x="2263.3" y="1723" font-size="17.5" fill="#3a3a3a" textLength="21" lengthAdjust="spacing" stroke="#3a3a3a" stroke-width="0.2" >24</text>
<text x="2263.3" y="1760.3" font-size="17.5" fill="#3a3a3a" textLength="21" lengthAdjust="spacing" stroke="#3a3a3a" stroke-width="0.2" >30</text>
<text x="2263.3" y="1793.8" font-size="17.5" fill="#3a3a3a" textLength="21" lengthAdjust="spacing" stroke="#3a3a3a" stroke-width="0.2" >36</text>
<text x="2263.3" y="1821.3" font-size="17.5" fill="#3a3a3a" textLength="21" lengthAdjust="spacing" stroke="#3a3a3a" stroke-width="0.2" >42</text>
<text x="2263.3" y="1845.8" font-size="17.5" fill="#3a3a3a" textLength="21" lengthAdjust="spacing" stroke="#3a3a3a" stroke-width="0.2" >48</text>
<text x="2263.3" y="1887.1" font-size="17.5" fill="#3a3a3a" textLength="21" lengthAdjust="spacing" stroke="#3a3a3a" stroke-width="0.2" >60</text>
<polygon points="2204.7,1598.5 2204.7,1623.5 2226.9,1611" fill="#0e0e0e" />
<path d="M2166.8 1733.4A24.5 24.5 0 0 1 2173.7 1777.3" fill="none" stroke="#151515" stroke-width="5" stroke-linecap="butt"/>
<path d="M2153.2 1733.4A24.5 24.5 0 0 0 2146.3 1777.3" fill="none" stroke="#151515" stroke-width="5" />
<line x1="2160" y1="1730" x2="2160" y2="1758" stroke="#151515" stroke-width="4.2" />
<polygon points="2152.3,1719 2167.7,1719 2160,1727" fill="#151515" />
<rect x="2136.7" y="1788.3" width="46.6" height="46.4" fill="#ffb700" stroke="#787878" stroke-width="2.2"/>
<text x="2160" y="1820.3" font-size="24.5" fill="#151515" text-anchor="middle" font-weight="bold" >11</text>
<rect x="2136.7" y="1844" width="46.6" height="26" fill="#d8d8d8" stroke="#787878" stroke-width="2.2"/>
<text x="2160" y="1864.7" font-size="21.5" fill="#151515" text-anchor="middle" stroke="#151515" stroke-width="0.5" >S</text>
<rect x="2136.7" y="1880" width="46.6" height="25.8" fill="#d8d8d8" stroke="#787878" stroke-width="2.2"/>
<circle cx="2160" cy="1893" r="7.3" fill="#151515" />
<path d="M2159.5 1887.5q5.5 2.5 3.5 7q-1.2 2.8 -4 3" fill="none" stroke="#e4e4e4" stroke-width="2" />
<rect x="2306.5" y="1468.7" width="463.1" height="12.3" fill="#ffa574"/>
<rect x="2306.5" y="1468.7" width="193" height="48.3" fill="#ffa574"/>
<text x="2314" y="1506.7" font-size="21.5" fill="#5a2f18" textLength="46.7" lengthAdjust="spacing" stroke="#5a2f18" stroke-width="0.8" >Pads</text>
<circle cx="2482.1" cy="1499" r="12" fill="none" stroke="#5a2f18" stroke-width="2.2" />
<line x1="2475.6" y1="1494.5" x2="2487.1" y2="1494.5" stroke="#5a2f18" stroke-width="2" />
<line x1="2479.1" y1="1498.5" x2="2488.6" y2="1498.5" stroke="#5a2f18" stroke-width="2" />
<line x1="2479.1" y1="1502" x2="2488.6" y2="1502" stroke="#5a2f18" stroke-width="2" />
<line x1="2479.1" y1="1505.5" x2="2488.6" y2="1505.5" stroke="#5a2f18" stroke-width="2" />
<rect x="2306.5" y="1517" width="193" height="4.5" fill="#7d7d7d"/>
<rect x="2306.5" y="1521.5" width="193" height="398.5" fill="#a9a9a9"/>
<rect x="2306.5" y="1920" width="193" height="2.5" fill="#7d7d7d"/>
<rect x="2306.5" y="1922.5" width="193" height="13" fill="#ffa574"/>
<rect x="2322" y="1531.3" width="71.7" height="26.2" fill="#dcdcdc" rx="13.1" stroke="#555" stroke-width="1.8"/>
<text x="2357.8" y="1552.7" font-size="21.5" fill="#151515" text-anchor="middle" textLength="51" lengthAdjust="spacing" stroke="#151515" stroke-width="0.5" >-5.84</text>
<rect x="2322" y="1569.7" width="71.7" height="25.6" fill="#dcdcdc" stroke="#666" stroke-width="1.8"/>
<text x="2357.8" y="1590.7" font-size="21.5" fill="#151515" text-anchor="middle" textLength="11" lengthAdjust="spacing" stroke="#151515" stroke-width="0.5" >0</text>
<line x1="2417.7" y1="1534" x2="2423.4" y2="1534" stroke="#5c5c5c" stroke-width="2.2" opacity="1"/>
<line x1="2417.7" y1="1571.7" x2="2423.4" y2="1571.7" stroke="#5c5c5c" stroke-width="2.2" opacity="1"/>
<line x1="2417.7" y1="1607" x2="2423.4" y2="1607" stroke="#5c5c5c" stroke-width="2.2" opacity="1"/>
<line x1="2417.7" y1="1644.5" x2="2423.4" y2="1644.5" stroke="#5c5c5c" stroke-width="2.2" opacity="1"/>
<line x1="2417.7" y1="1682" x2="2423.4" y2="1682" stroke="#5c5c5c" stroke-width="2.2" opacity="1"/>
<line x1="2417.7" y1="1717.5" x2="2423.4" y2="1717.5" stroke="#5c5c5c" stroke-width="2.2" opacity="1"/>
<line x1="2417.7" y1="1755" x2="2423.4" y2="1755" stroke="#5c5c5c" stroke-width="2.2" opacity="1"/>
<line x1="2417.7" y1="1788" x2="2423.4" y2="1788" stroke="#5c5c5c" stroke-width="2.2" opacity="1"/>
<line x1="2417.7" y1="1815" x2="2423.4" y2="1815" stroke="#5c5c5c" stroke-width="2.2" opacity="1"/>
<line x1="2417.7" y1="1840" x2="2423.4" y2="1840" stroke="#5c5c5c" stroke-width="2.2" opacity="1"/>
<line x1="2417.7" y1="1863.7" x2="2423.4" y2="1863.7" stroke="#5c5c5c" stroke-width="2.2" opacity="0.45"/>
<line x1="2417.7" y1="1882" x2="2423.4" y2="1882" stroke="#5c5c5c" stroke-width="2.2" opacity="1"/>
<line x1="2417.7" y1="1898" x2="2423.4" y2="1898" stroke="#5c5c5c" stroke-width="2.2" opacity="0.45"/>
<rect x="2428.7" y="1531.5" width="25.3" height="374" fill="#444" rx="3"/>
<rect x="2428.7" y="1531.5" width="11.6" height="374" fill="#222" rx="2.5"/>
<rect x="2429.5" y="1635" width="10" height="269.7" fill="url(#mdim)" rx="2"/>
<rect x="2429.5" y="1658" width="10" height="246.7" fill="url(#mbright)" rx="2"/>
<rect x="2428.7" y="1594.6" width="11.6" height="2.8" fill="#f08000"/>
<rect x="2442.4" y="1531.5" width="11.6" height="374" fill="#222" rx="2.5"/>
<rect x="2443.2" y="1622.5" width="10" height="282.2" fill="url(#mdim)" rx="2"/>
<rect x="2443.2" y="1658" width="10" height="246.7" fill="url(#mbright)" rx="2"/>
<rect x="2442.4" y="1594.6" width="11.6" height="2.8" fill="#f08000"/>
<line x1="2428.7" y1="1571.7" x2="2454" y2="1571.7" stroke="#b8b8b8" stroke-width="2" />
<text x="2461.5" y="1548" font-size="17.5" fill="#3a3a3a" textLength="10.5" lengthAdjust="spacing" stroke="#3a3a3a" stroke-width="0.2" >6</text>
<text x="2461.5" y="1577.1" font-size="17.5" fill="#3a3a3a" textLength="10.5" lengthAdjust="spacing" stroke="#3a3a3a" stroke-width="0.2" >0</text>
<text x="2461.5" y="1613" font-size="17.5" fill="#3a3a3a" textLength="10.5" lengthAdjust="spacing" stroke="#3a3a3a" stroke-width="0.2" >6</text>
<text x="2461.5" y="1650.3" font-size="17.5" fill="#3a3a3a" textLength="21" lengthAdjust="spacing" stroke="#3a3a3a" stroke-width="0.2" >12</text>
<text x="2461.5" y="1688" font-size="17.5" fill="#3a3a3a" textLength="21" lengthAdjust="spacing" stroke="#3a3a3a" stroke-width="0.2" >18</text>
<text x="2461.5" y="1723" font-size="17.5" fill="#3a3a3a" textLength="21" lengthAdjust="spacing" stroke="#3a3a3a" stroke-width="0.2" >24</text>
<text x="2461.5" y="1760.3" font-size="17.5" fill="#3a3a3a" textLength="21" lengthAdjust="spacing" stroke="#3a3a3a" stroke-width="0.2" >30</text>
<text x="2461.5" y="1793.8" font-size="17.5" fill="#3a3a3a" textLength="21" lengthAdjust="spacing" stroke="#3a3a3a" stroke-width="0.2" >36</text>
<text x="2461.5" y="1821.3" font-size="17.5" fill="#3a3a3a" textLength="21" lengthAdjust="spacing" stroke="#3a3a3a" stroke-width="0.2" >42</text>
<text x="2461.5" y="1845.8" font-size="17.5" fill="#3a3a3a" textLength="21" lengthAdjust="spacing" stroke="#3a3a3a" stroke-width="0.2" >48</text>
<text x="2461.5" y="1887.1" font-size="17.5" fill="#3a3a3a" textLength="21" lengthAdjust="spacing" stroke="#3a3a3a" stroke-width="0.2" >60</text>
<polygon points="2402.9,1559 2402.9,1584 2425.1,1571.5" fill="#0e0e0e" />
<path d="M2365 1733.4A24.5 24.5 0 0 1 2371.9 1777.3" fill="none" stroke="#151515" stroke-width="5" stroke-linecap="butt"/>
<path d="M2351.4 1733.4A24.5 24.5 0 0 0 2344.5 1777.3" fill="none" stroke="#151515" stroke-width="5" />
<line x1="2358.2" y1="1730" x2="2358.2" y2="1758" stroke="#151515" stroke-width="4.2" />
<polygon points="2350.5,1719 2365.9,1719 2358.2,1727" fill="#151515" />
<rect x="2334.9" y="1788.3" width="46.6" height="46.4" fill="#ffb700" stroke="#787878" stroke-width="2.2"/>
<text x="2358.2" y="1820.3" font-size="24.5" fill="#151515" text-anchor="middle" font-weight="bold" >12</text>
<rect x="2334.9" y="1844" width="46.6" height="26" fill="#d8d8d8" stroke="#787878" stroke-width="2.2"/>
<text x="2358.2" y="1864.7" font-size="21.5" fill="#151515" text-anchor="middle" stroke="#151515" stroke-width="0.5" >S</text>
<rect x="2499.5" y="1477.5" width="270.1" height="3.5" fill="#7d7d7d"/>
<rect x="2499.5" y="1477.5" width="4" height="39.5" fill="#7d7d7d"/>
<rect x="2503.5" y="1481" width="194.7" height="36" fill="#ffa574"/>
<text x="2511" y="1506.7" font-size="21.5" fill="#5a2f18" textLength="91.7" lengthAdjust="spacing" stroke="#5a2f18" stroke-width="0.8" >Drift Pad</text>
<rect x="2503.5" y="1517" width="194.7" height="4.5" fill="#7d7d7d"/>
<rect x="2503.5" y="1521.5" width="194.7" height="398.5" fill="#c2c2c2"/>
<rect x="2503.5" y="1920" width="194.7" height="2.5" fill="#7d7d7d"/>
<rect x="2503.5" y="1922.5" width="194.7" height="13" fill="#ffa574"/>
<rect x="2519" y="1531.3" width="71.7" height="26.2" fill="#dcdcdc" rx="13.1" stroke="#555" stroke-width="1.8"/>
<text x="2554.8" y="1552.7" font-size="21.5" fill="#151515" text-anchor="middle" textLength="51" lengthAdjust="spacing" stroke="#151515" stroke-width="0.5" >-5.83</text>
<rect x="2519" y="1569.7" width="71.7" height="25.6" fill="#dcdcdc" stroke="#666" stroke-width="1.8"/>
<text x="2554.8" y="1590.7" font-size="21.5" fill="#151515" text-anchor="middle" textLength="11" lengthAdjust="spacing" stroke="#151515" stroke-width="0.5" >0</text>
<line x1="2614.7" y1="1534" x2="2620.4" y2="1534" stroke="#5c5c5c" stroke-width="2.2" opacity="1"/>
<line x1="2614.7" y1="1571.7" x2="2620.4" y2="1571.7" stroke="#5c5c5c" stroke-width="2.2" opacity="1"/>
<line x1="2614.7" y1="1607" x2="2620.4" y2="1607" stroke="#5c5c5c" stroke-width="2.2" opacity="1"/>
<line x1="2614.7" y1="1644.5" x2="2620.4" y2="1644.5" stroke="#5c5c5c" stroke-width="2.2" opacity="1"/>
<line x1="2614.7" y1="1682" x2="2620.4" y2="1682" stroke="#5c5c5c" stroke-width="2.2" opacity="1"/>
<line x1="2614.7" y1="1717.5" x2="2620.4" y2="1717.5" stroke="#5c5c5c" stroke-width="2.2" opacity="1"/>
<line x1="2614.7" y1="1755" x2="2620.4" y2="1755" stroke="#5c5c5c" stroke-width="2.2" opacity="1"/>
<line x1="2614.7" y1="1788" x2="2620.4" y2="1788" stroke="#5c5c5c" stroke-width="2.2" opacity="1"/>
<line x1="2614.7" y1="1815" x2="2620.4" y2="1815" stroke="#5c5c5c" stroke-width="2.2" opacity="1"/>
<line x1="2614.7" y1="1840" x2="2620.4" y2="1840" stroke="#5c5c5c" stroke-width="2.2" opacity="1"/>
<line x1="2614.7" y1="1863.7" x2="2620.4" y2="1863.7" stroke="#5c5c5c" stroke-width="2.2" opacity="0.45"/>
<line x1="2614.7" y1="1882" x2="2620.4" y2="1882" stroke="#5c5c5c" stroke-width="2.2" opacity="1"/>
<line x1="2614.7" y1="1898" x2="2620.4" y2="1898" stroke="#5c5c5c" stroke-width="2.2" opacity="0.45"/>
<rect x="2625.7" y="1531.5" width="25.3" height="374" fill="#444" rx="3"/>
<rect x="2625.7" y="1531.5" width="11.6" height="374" fill="#222" rx="2.5"/>
<rect x="2626.5" y="1635" width="10" height="269.7" fill="url(#mdim)" rx="2"/>
<rect x="2626.5" y="1660" width="10" height="244.7" fill="url(#mbright)" rx="2"/>
<rect x="2625.7" y="1595.6" width="11.6" height="2.8" fill="#f08000"/>
<rect x="2639.4" y="1531.5" width="11.6" height="374" fill="#222" rx="2.5"/>
<rect x="2640.2" y="1621" width="10" height="283.7" fill="url(#mdim)" rx="2"/>
<rect x="2640.2" y="1660" width="10" height="244.7" fill="url(#mbright)" rx="2"/>
<rect x="2639.4" y="1592.6" width="11.6" height="2.8" fill="#f08000"/>
<line x1="2625.7" y1="1571.7" x2="2651" y2="1571.7" stroke="#b8b8b8" stroke-width="2" />
<text x="2658.5" y="1548" font-size="17.5" fill="#3a3a3a" textLength="10.5" lengthAdjust="spacing" stroke="#3a3a3a" stroke-width="0.2" >6</text>
<text x="2658.5" y="1577.1" font-size="17.5" fill="#3a3a3a" textLength="10.5" lengthAdjust="spacing" stroke="#3a3a3a" stroke-width="0.2" >0</text>
<text x="2658.5" y="1613" font-size="17.5" fill="#3a3a3a" textLength="10.5" lengthAdjust="spacing" stroke="#3a3a3a" stroke-width="0.2" >6</text>
<text x="2658.5" y="1650.3" font-size="17.5" fill="#3a3a3a" textLength="21" lengthAdjust="spacing" stroke="#3a3a3a" stroke-width="0.2" >12</text>
<text x="2658.5" y="1688" font-size="17.5" fill="#3a3a3a" textLength="21" lengthAdjust="spacing" stroke="#3a3a3a" stroke-width="0.2" >18</text>
<text x="2658.5" y="1723" font-size="17.5" fill="#3a3a3a" textLength="21" lengthAdjust="spacing" stroke="#3a3a3a" stroke-width="0.2" >24</text>
<text x="2658.5" y="1760.3" font-size="17.5" fill="#3a3a3a" textLength="21" lengthAdjust="spacing" stroke="#3a3a3a" stroke-width="0.2" >30</text>
<text x="2658.5" y="1793.8" font-size="17.5" fill="#3a3a3a" textLength="21" lengthAdjust="spacing" stroke="#3a3a3a" stroke-width="0.2" >36</text>
<text x="2658.5" y="1821.3" font-size="17.5" fill="#3a3a3a" textLength="21" lengthAdjust="spacing" stroke="#3a3a3a" stroke-width="0.2" >42</text>
<text x="2658.5" y="1845.8" font-size="17.5" fill="#3a3a3a" textLength="21" lengthAdjust="spacing" stroke="#3a3a3a" stroke-width="0.2" >48</text>
<text x="2658.5" y="1887.1" font-size="17.5" fill="#3a3a3a" textLength="21" lengthAdjust="spacing" stroke="#3a3a3a" stroke-width="0.2" >60</text>
<polygon points="2599.9,1559 2599.9,1584 2622.1,1571.5" fill="#0e0e0e" />
<path d="M2562 1733.4A24.5 24.5 0 0 1 2568.9 1777.3" fill="none" stroke="#151515" stroke-width="5" stroke-linecap="butt"/>
<path d="M2548.4 1733.4A24.5 24.5 0 0 0 2541.5 1777.3" fill="none" stroke="#151515" stroke-width="5" />
<line x1="2555.2" y1="1730" x2="2555.2" y2="1758" stroke="#151515" stroke-width="4.2" />
<polygon points="2547.5,1719 2562.9,1719 2555.2,1727" fill="#151515" />
<rect x="2531.9" y="1788.3" width="46.6" height="46.4" fill="#ffb700" stroke="#787878" stroke-width="2.2"/>
<text x="2555.2" y="1820.3" font-size="24.5" fill="#151515" text-anchor="middle" font-weight="bold" >13</text>
<rect x="2531.9" y="1844" width="46.6" height="26" fill="#d8d8d8" stroke="#787878" stroke-width="2.2"/>
<text x="2555.2" y="1864.7" font-size="21.5" fill="#151515" text-anchor="middle" stroke="#151515" stroke-width="0.5" >S</text>
<rect x="2531.9" y="1880" width="46.6" height="25.8" fill="#d8d8d8" stroke="#787878" stroke-width="2.2"/>
<circle cx="2555.2" cy="1893" r="7.3" fill="#151515" />
<path d="M2554.7 1887.5q5.5 2.5 3.5 7q-1.2 2.8 -4 3" fill="none" stroke="#e4e4e4" stroke-width="2" />
<rect x="2701.7" y="1481" width="194.7" height="36" fill="#ffa574"/>
<text x="2709.2" y="1506.7" font-size="21.5" fill="#5a2f18" textLength="86.7" lengthAdjust="spacing" stroke="#5a2f18" stroke-width="0.8" >Rain Pad</text>
<rect x="2701.7" y="1517" width="194.7" height="4.5" fill="#7d7d7d"/>
<rect x="2701.7" y="1521.5" width="194.7" height="398.5" fill="#a9a9a9"/>
<rect x="2701.7" y="1920" width="194.7" height="2.5" fill="#7d7d7d"/>
<rect x="2701.7" y="1922.5" width="194.7" height="13" fill="#ffa574"/>
<rect x="2717.2" y="1531.3" width="71.7" height="26.2" fill="#dcdcdc" rx="13.1" stroke="#555" stroke-width="1.8"/>
<text x="2753" y="1552.7" font-size="21.5" fill="#151515" text-anchor="middle" textLength="51" lengthAdjust="spacing" stroke="#151515" stroke-width="0.5" >-13.1</text>
<rect x="2717.2" y="1569.7" width="71.7" height="25.6" fill="#dcdcdc" stroke="#666" stroke-width="1.8"/>
<text x="2753" y="1590.7" font-size="21.5" fill="#151515" text-anchor="middle" textLength="11" lengthAdjust="spacing" stroke="#151515" stroke-width="0.5" >0</text>
<line x1="2812.9" y1="1534" x2="2818.6" y2="1534" stroke="#5c5c5c" stroke-width="2.2" opacity="1"/>
<line x1="2812.9" y1="1571.7" x2="2818.6" y2="1571.7" stroke="#5c5c5c" stroke-width="2.2" opacity="1"/>
<line x1="2812.9" y1="1607" x2="2818.6" y2="1607" stroke="#5c5c5c" stroke-width="2.2" opacity="1"/>
<line x1="2812.9" y1="1644.5" x2="2818.6" y2="1644.5" stroke="#5c5c5c" stroke-width="2.2" opacity="1"/>
<line x1="2812.9" y1="1682" x2="2818.6" y2="1682" stroke="#5c5c5c" stroke-width="2.2" opacity="1"/>
<line x1="2812.9" y1="1717.5" x2="2818.6" y2="1717.5" stroke="#5c5c5c" stroke-width="2.2" opacity="1"/>
<line x1="2812.9" y1="1755" x2="2818.6" y2="1755" stroke="#5c5c5c" stroke-width="2.2" opacity="1"/>
<line x1="2812.9" y1="1788" x2="2818.6" y2="1788" stroke="#5c5c5c" stroke-width="2.2" opacity="1"/>
<line x1="2812.9" y1="1815" x2="2818.6" y2="1815" stroke="#5c5c5c" stroke-width="2.2" opacity="1"/>
<line x1="2812.9" y1="1840" x2="2818.6" y2="1840" stroke="#5c5c5c" stroke-width="2.2" opacity="1"/>
<line x1="2812.9" y1="1863.7" x2="2818.6" y2="1863.7" stroke="#5c5c5c" stroke-width="2.2" opacity="0.45"/>
<line x1="2812.9" y1="1882" x2="2818.6" y2="1882" stroke="#5c5c5c" stroke-width="2.2" opacity="1"/>
<line x1="2812.9" y1="1898" x2="2818.6" y2="1898" stroke="#5c5c5c" stroke-width="2.2" opacity="0.45"/>
<rect x="2823.9" y="1531.5" width="25.3" height="374" fill="#444" rx="3"/>
<rect x="2823.9" y="1531.5" width="11.6" height="374" fill="#222" rx="2.5"/>
<rect x="2824.7" y="1760" width="10" height="144.7" fill="url(#mdim)" rx="2"/>
<rect x="2824.7" y="1800" width="10" height="104.7" fill="url(#mbright)" rx="2"/>
<rect x="2823.9" y="1698.6" width="11.6" height="2.8" fill="#10d048"/>
<rect x="2837.6" y="1531.5" width="11.6" height="374" fill="#222" rx="2.5"/>
<rect x="2838.4" y="1760" width="10" height="144.7" fill="url(#mdim)" rx="2"/>
<rect x="2838.4" y="1800" width="10" height="104.7" fill="url(#mbright)" rx="2"/>
<rect x="2837.6" y="1698.6" width="11.6" height="2.8" fill="#10d048"/>
<line x1="2823.9" y1="1571.7" x2="2849.2" y2="1571.7" stroke="#b8b8b8" stroke-width="2" />
<text x="2856.7" y="1548" font-size="17.5" fill="#3a3a3a" textLength="10.5" lengthAdjust="spacing" stroke="#3a3a3a" stroke-width="0.2" >6</text>
<text x="2856.7" y="1577.1" font-size="17.5" fill="#3a3a3a" textLength="10.5" lengthAdjust="spacing" stroke="#3a3a3a" stroke-width="0.2" >0</text>
<text x="2856.7" y="1613" font-size="17.5" fill="#3a3a3a" textLength="10.5" lengthAdjust="spacing" stroke="#3a3a3a" stroke-width="0.2" >6</text>
<text x="2856.7" y="1650.3" font-size="17.5" fill="#3a3a3a" textLength="21" lengthAdjust="spacing" stroke="#3a3a3a" stroke-width="0.2" >12</text>
<text x="2856.7" y="1688" font-size="17.5" fill="#3a3a3a" textLength="21" lengthAdjust="spacing" stroke="#3a3a3a" stroke-width="0.2" >18</text>
<text x="2856.7" y="1723" font-size="17.5" fill="#3a3a3a" textLength="21" lengthAdjust="spacing" stroke="#3a3a3a" stroke-width="0.2" >24</text>
<text x="2856.7" y="1760.3" font-size="17.5" fill="#3a3a3a" textLength="21" lengthAdjust="spacing" stroke="#3a3a3a" stroke-width="0.2" >30</text>
<text x="2856.7" y="1793.8" font-size="17.5" fill="#3a3a3a" textLength="21" lengthAdjust="spacing" stroke="#3a3a3a" stroke-width="0.2" >36</text>
<text x="2856.7" y="1821.3" font-size="17.5" fill="#3a3a3a" textLength="21" lengthAdjust="spacing" stroke="#3a3a3a" stroke-width="0.2" >42</text>
<text x="2856.7" y="1845.8" font-size="17.5" fill="#3a3a3a" textLength="21" lengthAdjust="spacing" stroke="#3a3a3a" stroke-width="0.2" >48</text>
<text x="2856.7" y="1887.1" font-size="17.5" fill="#3a3a3a" textLength="21" lengthAdjust="spacing" stroke="#3a3a3a" stroke-width="0.2" >60</text>
<polygon points="2798.1,1559 2798.1,1584 2820.3,1571.5" fill="#0e0e0e" />
<path d="M2760.2 1733.4A24.5 24.5 0 0 1 2767.1 1777.3" fill="none" stroke="#151515" stroke-width="5" stroke-linecap="butt"/>
<path d="M2746.6 1733.4A24.5 24.5 0 0 0 2739.7 1777.3" fill="none" stroke="#151515" stroke-width="5" />
<line x1="2753.4" y1="1730" x2="2753.4" y2="1758" stroke="#151515" stroke-width="4.2" />
<polygon points="2745.7,1719 2761.1,1719 2753.4,1727" fill="#151515" />
<rect x="2730.1" y="1788.3" width="46.6" height="46.4" fill="#ffb700" stroke="#787878" stroke-width="2.2"/>
<text x="2753.4" y="1820.3" font-size="24.5" fill="#151515" text-anchor="middle" font-weight="bold" >14</text>
<rect x="2730.1" y="1844" width="46.6" height="26" fill="#d8d8d8" stroke="#787878" stroke-width="2.2"/>
<text x="2753.4" y="1864.7" font-size="21.5" fill="#151515" text-anchor="middle" stroke="#151515" stroke-width="0.5" >S</text>
<rect x="2730.1" y="1880" width="46.6" height="25.8" fill="#d8d8d8" stroke="#787878" stroke-width="2.2"/>
<circle cx="2753.4" cy="1893" r="7.3" fill="#151515" />
<path d="M2752.9 1887.5q5.5 2.5 3.5 7q-1.2 2.8 -4 3" fill="none" stroke="#e4e4e4" stroke-width="2" />
</g>
<rect x="2769.6" y="1468.7" width="5.4" height="466.8" fill="#7d7d7d"/>
<rect x="2775" y="1468.7" width="206" height="48.3" fill="#ffffff"/>
<text x="2786" y="1506.7" font-size="21.5" fill="#333" textLength="47.3" lengthAdjust="spacing" stroke="#333" stroke-width="0.8" >Main</text>
<rect x="2775" y="1517" width="206" height="4.5" fill="#7d7d7d"/>
<rect x="2775" y="1521.5" width="206" height="398.5" fill="#a9a9a9"/>
<rect x="2775" y="1920" width="206" height="2.5" fill="#7d7d7d"/>
<rect x="2775" y="1922.5" width="206" height="13" fill="#ffffff"/>
<rect x="2796.5" y="1531.3" width="71.7" height="26.2" fill="#dcdcdc" rx="13.1" stroke="#555" stroke-width="1.8"/>
<text x="2832.3" y="1552.7" font-size="21.5" fill="#151515" text-anchor="middle" textLength="51" lengthAdjust="spacing" stroke="#151515" stroke-width="0.5" >-0.30</text>
<rect x="2796.5" y="1569.7" width="71.7" height="25.6" fill="#dcdcdc" stroke="#666" stroke-width="1.8"/>
<text x="2832.3" y="1590.7" font-size="21.5" fill="#151515" text-anchor="middle" textLength="11" lengthAdjust="spacing" stroke="#151515" stroke-width="0.5" >0</text>
<line x1="2892.2" y1="1534" x2="2897.9" y2="1534" stroke="#5c5c5c" stroke-width="2.2" opacity="1"/>
<line x1="2892.2" y1="1571.7" x2="2897.9" y2="1571.7" stroke="#5c5c5c" stroke-width="2.2" opacity="1"/>
<line x1="2892.2" y1="1607" x2="2897.9" y2="1607" stroke="#5c5c5c" stroke-width="2.2" opacity="1"/>
<line x1="2892.2" y1="1644.5" x2="2897.9" y2="1644.5" stroke="#5c5c5c" stroke-width="2.2" opacity="1"/>
<line x1="2892.2" y1="1682" x2="2897.9" y2="1682" stroke="#5c5c5c" stroke-width="2.2" opacity="1"/>
<line x1="2892.2" y1="1717.5" x2="2897.9" y2="1717.5" stroke="#5c5c5c" stroke-width="2.2" opacity="1"/>
<line x1="2892.2" y1="1755" x2="2897.9" y2="1755" stroke="#5c5c5c" stroke-width="2.2" opacity="1"/>
<line x1="2892.2" y1="1788" x2="2897.9" y2="1788" stroke="#5c5c5c" stroke-width="2.2" opacity="1"/>
<line x1="2892.2" y1="1815" x2="2897.9" y2="1815" stroke="#5c5c5c" stroke-width="2.2" opacity="1"/>
<line x1="2892.2" y1="1840" x2="2897.9" y2="1840" stroke="#5c5c5c" stroke-width="2.2" opacity="1"/>
<line x1="2892.2" y1="1863.7" x2="2897.9" y2="1863.7" stroke="#5c5c5c" stroke-width="2.2" opacity="0.45"/>
<line x1="2892.2" y1="1882" x2="2897.9" y2="1882" stroke="#5c5c5c" stroke-width="2.2" opacity="1"/>
<line x1="2892.2" y1="1898" x2="2897.9" y2="1898" stroke="#5c5c5c" stroke-width="2.2" opacity="0.45"/>
<rect x="2903.2" y="1531.5" width="25.3" height="374" fill="#444" rx="3"/>
<rect x="2903.2" y="1531.5" width="11.6" height="374" fill="#222" rx="2.5"/>
<rect x="2904" y="1589.5" width="10" height="315.2" fill="url(#mdim)" rx="2"/>
<rect x="2904" y="1589.5" width="10" height="315.2" fill="url(#mbright)" rx="2"/>
<rect x="2903.2" y="1570.6" width="11.6" height="2.8" fill="#e83a10"/>
<rect x="2916.9" y="1531.5" width="11.6" height="374" fill="#222" rx="2.5"/>
<rect x="2917.7" y="1581" width="10" height="323.7" fill="url(#mdim)" rx="2"/>
<rect x="2917.7" y="1581" width="10" height="323.7" fill="url(#mbright)" rx="2"/>
<rect x="2916.9" y="1572.6" width="11.6" height="2.8" fill="#e83a10"/>
<line x1="2903.2" y1="1571.7" x2="2928.5" y2="1571.7" stroke="#b8b8b8" stroke-width="2" />
<text x="2936" y="1548" font-size="17.5" fill="#3a3a3a" textLength="10.5" lengthAdjust="spacing" stroke="#3a3a3a" stroke-width="0.2" >6</text>
<text x="2936" y="1577.1" font-size="17.5" fill="#3a3a3a" textLength="10.5" lengthAdjust="spacing" stroke="#3a3a3a" stroke-width="0.2" >0</text>
<text x="2936" y="1613" font-size="17.5" fill="#3a3a3a" textLength="10.5" lengthAdjust="spacing" stroke="#3a3a3a" stroke-width="0.2" >6</text>
<text x="2936" y="1650.3" font-size="17.5" fill="#3a3a3a" textLength="21" lengthAdjust="spacing" stroke="#3a3a3a" stroke-width="0.2" >12</text>
<text x="2936" y="1688" font-size="17.5" fill="#3a3a3a" textLength="21" lengthAdjust="spacing" stroke="#3a3a3a" stroke-width="0.2" >18</text>
<text x="2936" y="1723" font-size="17.5" fill="#3a3a3a" textLength="21" lengthAdjust="spacing" stroke="#3a3a3a" stroke-width="0.2" >24</text>
<text x="2936" y="1760.3" font-size="17.5" fill="#3a3a3a" textLength="21" lengthAdjust="spacing" stroke="#3a3a3a" stroke-width="0.2" >30</text>
<text x="2936" y="1793.8" font-size="17.5" fill="#3a3a3a" textLength="21" lengthAdjust="spacing" stroke="#3a3a3a" stroke-width="0.2" >36</text>
<text x="2936" y="1821.3" font-size="17.5" fill="#3a3a3a" textLength="21" lengthAdjust="spacing" stroke="#3a3a3a" stroke-width="0.2" >42</text>
<text x="2936" y="1845.8" font-size="17.5" fill="#3a3a3a" textLength="21" lengthAdjust="spacing" stroke="#3a3a3a" stroke-width="0.2" >48</text>
<text x="2936" y="1887.1" font-size="17.5" fill="#3a3a3a" textLength="21" lengthAdjust="spacing" stroke="#3a3a3a" stroke-width="0.2" >60</text>
<polygon points="2877.4,1559 2877.4,1584 2899.6,1571.5" fill="#0e0e0e" />
<path d="M2839.5 1733.4A24.5 24.5 0 0 1 2846.4 1777.3" fill="none" stroke="#151515" stroke-width="5" stroke-linecap="butt"/>
<path d="M2825.9 1733.4A24.5 24.5 0 0 0 2819 1777.3" fill="none" stroke="#151515" stroke-width="5" />
<line x1="2832.7" y1="1730" x2="2832.7" y2="1758" stroke="#151515" stroke-width="4.2" />
<polygon points="2825,1719 2840.4,1719 2832.7,1727" fill="#151515" />
<path d="M2981 1925.5v10h-10a10 10 0 0 0 10 -10z" fill="#898989"/>
<rect x="2807.1" y="1809.8" width="51.2" height="24.5" fill="#f2f2f2" stroke="#555" stroke-width="1.8"/>
<text x="2832.7" y="1829.7" font-size="21.5" fill="#151515" text-anchor="middle" textLength="42" lengthAdjust="spacing" stroke="#151515" stroke-width="0.5" >Solo</text>
<path d="M2817 1892.8A24.5 24.5 0 1 1 2856.4 1880.3" fill="none" stroke="#1c8cf0" stroke-width="5" />
<path d="M2856.4 1880.3A24.5 24.5 0 0 1 2848.4 1892.8" fill="none" stroke="#222" stroke-width="5" />
<line x1="2834.7" y1="1871" x2="2858.7" y2="1878.5" stroke="#1a1a1a" stroke-width="4.2" />
<path d="M2826.2 1892a6 6 0 1 1 12 0" fill="none" stroke="#333" stroke-width="2.2" />
<rect x="2825.2" y="1891" width="3.5" height="5.5" fill="#333"/>
<rect x="2836.7" y="1891" width="3.5" height="5.5" fill="#333"/>
<rect x="19" y="1954.8" width="512.5" height="390.4" fill="#a9a9a9" rx="7"/>
<path d="M19 1990.4V1961.8q0 -7 7 -7H524.5q7 0 7 7V1990.4z" fill="#bebebe" />
<circle cx="38.5" cy="1972.2" r="12.2" fill="#ffb700" stroke="#5a5a5a" stroke-width="1.8" />
<text x="60.9" y="1979.9" font-size="21.5" fill="#151515" textLength="53.7" lengthAdjust="spacing" stroke="#151515" stroke-width="0.7" >Scale</text>
<rect x="432.2" y="1959" width="25.8" height="26.5" fill="#c993ff" stroke="#444" stroke-width="1.5"/>
<text x="435.5" y="1982.4" font-size="18" fill="#151515" stroke="#151515" stroke-width="0.9" >♭</text>
<text x="445" y="1972.2" font-size="14.5" fill="#151515" font-weight="bold" stroke="#151515" stroke-width="0.4" >#</text>
<circle cx="477.2" cy="1972.2" r="12.2" fill="#d8d8d8" stroke="#333" stroke-width="1.8" />
<path d="M473.9 1977.8A6.5 6.5 0 0 1 475 1966.1" fill="none" stroke="#151515" stroke-width="2.3" />
<path d="M480.4 1966.6A6.5 6.5 0 0 1 479.4 1978.3" fill="none" stroke="#151515" stroke-width="2.3" />
<polygon points="476.2,1962.7 476.2,1969.7 480.7,1966.2" fill="#151515" />
<polygon points="478.2,1981.7 478.2,1974.7 473.7,1978.2" fill="#151515" />
<circle cx="511.4" cy="1972.2" r="12.2" fill="#d8d8d8" stroke="#333" stroke-width="1.8" />
<rect x="504.4" y="1965.2" width="14" height="14" fill="#151515" rx="1.5"/>
<rect x="507.4" y="1965.2" width="7" height="5" fill="#d8d8d8"/>
<rect x="511.9" y="1965.7" width="2" height="3.5" fill="#151515"/>
<rect x="27.2" y="1998.3" width="313.7" height="339" fill="#1f1f1f" rx="4"/>
<rect x="60.3" y="2006.3" width="22.4" height="21.8" fill="#676767"/>
<rect x="110.5" y="2006.3" width="22.4" height="21.8" fill="#676767"/>
<rect x="135.6" y="2006.3" width="22.4" height="21.8" fill="#676767"/>
<rect x="185.8" y="2006.3" width="22.4" height="21.8" fill="#676767"/>
<rect x="236" y="2006.3" width="22.4" height="21.8" fill="#676767"/>
<rect x="286.2" y="2006.3" width="22.4" height="21.8" fill="#676767"/>
<rect x="311.3" y="2006.3" width="22.4" height="21.8" fill="#676767"/>
<rect x="35.2" y="2031.3" width="22.4" height="21.8" fill="#676767"/>
<rect x="60.3" y="2031.3" width="22.4" height="21.8" fill="#676767"/>
<rect x="85.4" y="2031.3" width="22.4" height="21.8" fill="#676767"/>
<rect x="110.5" y="2031.3" width="22.4" height="21.8" fill="#676767"/>
<rect x="135.6" y="2031.3" width="22.4" height="21.8" fill="#676767"/>
<rect x="160.7" y="2031.3" width="22.4" height="21.8" fill="#676767"/>
<rect x="185.8" y="2031.3" width="22.4" height="21.8" fill="#676767"/>
<rect x="210.9" y="2031.3" width="22.4" height="21.8" fill="#676767"/>
<rect x="236" y="2031.3" width="22.4" height="21.8" fill="#676767"/>
<rect x="261.1" y="2031.3" width="22.4" height="21.8" fill="#676767"/>
<rect x="286.2" y="2031.3" width="22.4" height="21.8" fill="#676767"/>
<rect x="311.3" y="2031.3" width="22.4" height="21.8" fill="#676767"/>
<rect x="35.2" y="2056.3" width="22.4" height="21.8" fill="#676767"/>
<rect x="60.3" y="2056.3" width="22.4" height="21.8" fill="#676767"/>
<rect x="85.4" y="2056.3" width="22.4" height="21.8" fill="#676767"/>
<rect x="110.5" y="2056.3" width="22.4" height="21.8" fill="#676767"/>
<rect x="135.6" y="2056.3" width="22.4" height="21.8" fill="#676767"/>
<rect x="160.7" y="2056.3" width="22.4" height="21.8" fill="#676767"/>
<rect x="185.8" y="2056.3" width="22.4" height="21.8" fill="#676767"/>
<rect x="210.9" y="2056.3" width="22.4" height="21.8" fill="#676767"/>
<rect x="236" y="2056.3" width="22.4" height="21.8" fill="#676767"/>
<rect x="261.1" y="2056.3" width="22.4" height="21.8" fill="#676767"/>
<rect x="286.2" y="2056.3" width="22.4" height="21.8" fill="#cc99ff"/>
<rect x="311.3" y="2056.3" width="22.4" height="21.8" fill="#cc99ff"/>
<rect x="60.3" y="2081.3" width="22.4" height="21.8" fill="#676767"/>
<rect x="110.5" y="2081.3" width="22.4" height="21.8" fill="#676767"/>
<rect x="135.6" y="2081.3" width="22.4" height="21.8" fill="#676767"/>
<rect x="185.8" y="2081.3" width="22.4" height="21.8" fill="#676767"/>
<rect x="236" y="2081.3" width="22.4" height="21.8" fill="#676767"/>
<rect x="286.2" y="2081.3" width="22.4" height="21.8" fill="#676767"/>
<rect x="311.3" y="2081.3" width="22.4" height="21.8" fill="#676767"/>
<rect x="35.2" y="2106.3" width="22.4" height="21.8" fill="#676767"/>
<rect x="60.3" y="2106.3" width="22.4" height="21.8" fill="#676767"/>
<rect x="85.4" y="2106.3" width="22.4" height="21.8" fill="#676767"/>
<rect x="110.5" y="2106.3" width="22.4" height="21.8" fill="#676767"/>
<rect x="135.6" y="2106.3" width="22.4" height="21.8" fill="#676767"/>
<rect x="160.7" y="2106.3" width="22.4" height="21.8" fill="#676767"/>
<rect x="185.8" y="2106.3" width="22.4" height="21.8" fill="#676767"/>
<rect x="210.9" y="2106.3" width="22.4" height="21.8" fill="#676767"/>
<rect x="236" y="2106.3" width="22.4" height="21.8" fill="#cc99ff"/>
<rect x="261.1" y="2106.3" width="22.4" height="21.8" fill="#cc99ff"/>
<rect x="286.2" y="2106.3" width="22.4" height="21.8" fill="#676767"/>
<rect x="311.3" y="2106.3" width="22.4" height="21.8" fill="#676767"/>
<rect x="60.3" y="2131.3" width="22.4" height="21.8" fill="#676767"/>
<rect x="110.5" y="2131.3" width="22.4" height="21.8" fill="#676767"/>
<rect x="135.6" y="2131.3" width="22.4" height="21.8" fill="#676767"/>
<rect x="185.8" y="2131.3" width="22.4" height="21.8" fill="#676767"/>
<rect x="210.9" y="2131.3" width="22.4" height="21.8" fill="#cc99ff"/>
<rect x="236" y="2131.3" width="22.4" height="21.8" fill="#676767"/>
<rect x="286.2" y="2131.3" width="22.4" height="21.8" fill="#676767"/>
<rect x="311.3" y="2131.3" width="22.4" height="21.8" fill="#676767"/>
<rect x="35.2" y="2156.3" width="22.4" height="21.8" fill="#676767"/>
<rect x="60.3" y="2156.3" width="22.4" height="21.8" fill="#676767"/>
<rect x="85.4" y="2156.3" width="22.4" height="21.8" fill="#676767"/>
<rect x="110.5" y="2156.3" width="22.4" height="21.8" fill="#676767"/>
<rect x="135.6" y="2156.3" width="22.4" height="21.8" fill="#676767"/>
<rect x="160.7" y="2156.3" width="22.4" height="21.8" fill="#676767"/>
<rect x="185.8" y="2156.3" width="22.4" height="21.8" fill="#676767"/>
<rect x="210.9" y="2156.3" width="22.4" height="21.8" fill="#676767"/>
<rect x="236" y="2156.3" width="22.4" height="21.8" fill="#676767"/>
<rect x="261.1" y="2156.3" width="22.4" height="21.8" fill="#676767"/>
<rect x="286.2" y="2156.3" width="22.4" height="21.8" fill="#676767"/>
<rect x="311.3" y="2156.3" width="22.4" height="21.8" fill="#676767"/>
<rect x="60.3" y="2181.3" width="22.4" height="21.8" fill="#676767"/>
<rect x="110.5" y="2181.3" width="22.4" height="21.8" fill="#676767"/>
<rect x="135.6" y="2181.3" width="22.4" height="21.8" fill="#676767"/>
<rect x="160.7" y="2181.3" width="22.4" height="21.8" fill="#00e8ff"/>
<rect x="185.8" y="2181.3" width="22.4" height="21.8" fill="#cc99ff"/>
<rect x="236" y="2181.3" width="22.4" height="21.8" fill="#676767"/>
<rect x="286.2" y="2181.3" width="22.4" height="21.8" fill="#676767"/>
<rect x="311.3" y="2181.3" width="22.4" height="21.8" fill="#676767"/>
<rect x="35.2" y="2206.3" width="22.4" height="21.8" fill="#676767"/>
<rect x="60.3" y="2206.3" width="22.4" height="21.8" fill="#676767"/>
<rect x="85.4" y="2206.3" width="22.4" height="21.8" fill="#676767"/>
<rect x="110.5" y="2206.3" width="22.4" height="21.8" fill="#676767"/>
<rect x="135.6" y="2206.3" width="22.4" height="21.8" fill="#676767"/>
<rect x="160.7" y="2206.3" width="22.4" height="21.8" fill="#676767"/>
<rect x="185.8" y="2206.3" width="22.4" height="21.8" fill="#676767"/>
<rect x="210.9" y="2206.3" width="22.4" height="21.8" fill="#676767"/>
<rect x="236" y="2206.3" width="22.4" height="21.8" fill="#676767"/>
<rect x="261.1" y="2206.3" width="22.4" height="21.8" fill="#676767"/>
<rect x="286.2" y="2206.3" width="22.4" height="21.8" fill="#676767"/>
<rect x="311.3" y="2206.3" width="22.4" height="21.8" fill="#676767"/>
<rect x="35.2" y="2231.3" width="22.4" height="21.8" fill="#676767"/>
<rect x="60.3" y="2231.3" width="22.4" height="21.8" fill="#676767"/>
<rect x="85.4" y="2231.3" width="22.4" height="21.8" fill="#676767"/>
<rect x="110.5" y="2231.3" width="22.4" height="21.8" fill="#cc99ff"/>
<rect x="135.6" y="2231.3" width="22.4" height="21.8" fill="#cc99ff"/>
<rect x="160.7" y="2231.3" width="22.4" height="21.8" fill="#676767"/>
<rect x="185.8" y="2231.3" width="22.4" height="21.8" fill="#676767"/>
<rect x="210.9" y="2231.3" width="22.4" height="21.8" fill="#676767"/>
<rect x="236" y="2231.3" width="22.4" height="21.8" fill="#676767"/>
<rect x="261.1" y="2231.3" width="22.4" height="21.8" fill="#676767"/>
<rect x="286.2" y="2231.3" width="22.4" height="21.8" fill="#676767"/>
<rect x="311.3" y="2231.3" width="22.4" height="21.8" fill="#676767"/>
<rect x="60.3" y="2256.3" width="22.4" height="21.8" fill="#676767"/>
<rect x="85.4" y="2256.3" width="22.4" height="21.8" fill="#cc99ff"/>
<rect x="110.5" y="2256.3" width="22.4" height="21.8" fill="#676767"/>
<rect x="135.6" y="2256.3" width="22.4" height="21.8" fill="#676767"/>
<rect x="185.8" y="2256.3" width="22.4" height="21.8" fill="#676767"/>
<rect x="236" y="2256.3" width="22.4" height="21.8" fill="#676767"/>
<rect x="286.2" y="2256.3" width="22.4" height="21.8" fill="#676767"/>
<rect x="311.3" y="2256.3" width="22.4" height="21.8" fill="#676767"/>
<rect x="35.2" y="2281.3" width="22.4" height="21.8" fill="#676767"/>
<rect x="60.3" y="2281.3" width="22.4" height="21.8" fill="#676767"/>
<rect x="85.4" y="2281.3" width="22.4" height="21.8" fill="#676767"/>
<rect x="110.5" y="2281.3" width="22.4" height="21.8" fill="#676767"/>
<rect x="135.6" y="2281.3" width="22.4" height="21.8" fill="#676767"/>
<rect x="160.7" y="2281.3" width="22.4" height="21.8" fill="#676767"/>
<rect x="185.8" y="2281.3" width="22.4" height="21.8" fill="#676767"/>
<rect x="210.9" y="2281.3" width="22.4" height="21.8" fill="#676767"/>
<rect x="236" y="2281.3" width="22.4" height="21.8" fill="#676767"/>
<rect x="261.1" y="2281.3" width="22.4" height="21.8" fill="#676767"/>
<rect x="286.2" y="2281.3" width="22.4" height="21.8" fill="#676767"/>
<rect x="311.3" y="2281.3" width="22.4" height="21.8" fill="#676767"/>
<rect x="35.2" y="2306.3" width="22.4" height="21.8" fill="#cc99ff"/>
<rect x="60.3" y="2306.3" width="22.4" height="21.8" fill="#cc99ff"/>
<rect x="110.5" y="2306.3" width="22.4" height="21.8" fill="#676767"/>
<rect x="135.6" y="2306.3" width="22.4" height="21.8" fill="#676767"/>
<rect x="185.8" y="2306.3" width="22.4" height="21.8" fill="#676767"/>
<rect x="236" y="2306.3" width="22.4" height="21.8" fill="#676767"/>
<rect x="286.2" y="2306.3" width="22.4" height="21.8" fill="#676767"/>
<rect x="311.3" y="2306.3" width="22.4" height="21.8" fill="#676767"/>
<polygon points="9.5,2037.4 9.5,2042.6 13.5,2040" fill="#555" />
<polygon points="9.5,2047.9 9.5,2053.1 13.5,2050.5" fill="#555" />
<polygon points="9.5,2058.3 9.5,2063.5 13.5,2060.9" fill="#555" />
<polygon points="9.5,2068.8 9.5,2074 13.5,2071.4" fill="#555" />
<polygon points="9.5,2079.2 9.5,2084.4 13.5,2081.8" fill="#555" />
<polygon points="9.5,2089.7 9.5,2094.9 13.5,2092.3" fill="#f0a800" />
<polygon points="9.5,2100.2 9.5,2105.4 13.5,2102.8" fill="#f0a800" />
<polygon points="9.5,2110.6 9.5,2115.8 13.5,2113.2" fill="#f0a800" />
<polygon points="9.5,2121.1 9.5,2126.3 13.5,2123.7" fill="#f0a800" />
<polygon points="9.5,2131.5 9.5,2136.7 13.5,2134.1" fill="#f0a800" />
<polygon points="9.5,2142 9.5,2147.2 13.5,2144.6" fill="#f0a800" />
<polygon points="9.5,2152.5 9.5,2157.7 13.5,2155.1" fill="#f0a800" />
<polygon points="9.5,2162.9 9.5,2168.1 13.5,2165.5" fill="#f0a800" />
<polygon points="9.5,2173.4 9.5,2178.6 13.5,2176" fill="#f0a800" />
<polygon points="9.5,2183.8 9.5,2189 13.5,2186.4" fill="#f0a800" />
<polygon points="9.5,2194.3 9.5,2199.5 13.5,2196.9" fill="#f0a800" />
<polygon points="9.5,2204.8 9.5,2210 13.5,2207.4" fill="#f0a800" />
<polygon points="9.5,2215.2 9.5,2220.4 13.5,2217.8" fill="#f0a800" />
<polygon points="9.5,2225.7 9.5,2230.9 13.5,2228.3" fill="#f0a800" />
<polygon points="9.5,2236.1 9.5,2241.3 13.5,2238.7" fill="#f0a800" />
<polygon points="9.5,2246.6 9.5,2251.8 13.5,2249.2" fill="#f0a800" />
<polygon points="9.5,2257.1 9.5,2262.3 13.5,2259.7" fill="#f0a800" />
<text x="353.3" y="2019.9" font-size="21.5" fill="#151515" textLength="17" lengthAdjust="spacing" stroke="#151515" stroke-width="0.5" >In</text>
<text x="416.7" y="2019.9" font-size="21.5" fill="#151515" textLength="36.7" lengthAdjust="spacing" stroke="#151515" stroke-width="0.5" >Out</text>
<line x1="350.4" y1="2030.2" x2="523" y2="2030.2" stroke="#808080" stroke-width="1.8" />
<rect x="350.4" y="2040" width="171.3" height="25.6" fill="#a9a9a9" stroke="#7e7e7e" stroke-width="2"/>
<text x="357" y="2061.5" font-size="21.5" fill="#8c8c8c" textLength="24" lengthAdjust="spacing" stroke="#8c8c8c" stroke-width="0.2" >C#</text>
<polygon points="503.5,2048.3 516.5,2048.3 510,2058.8" fill="#808080" />
<circle cx="356.5" cy="2045.5" r="5.2" fill="#c993ff" stroke="#222" stroke-width="1.8" />
<rect x="350.4" y="2073" width="171.3" height="26.8" fill="#a9a9a9" stroke="#7e7e7e" stroke-width="2"/>
<text x="357" y="2095.1" font-size="21.5" fill="#8c8c8c" textLength="56" lengthAdjust="spacing" stroke="#8c8c8c" stroke-width="0.2" >Minor</text>
<polygon points="503.5,2081.9 516.5,2081.9 510,2092.4" fill="#808080" />
<circle cx="356.5" cy="2078.5" r="5.2" fill="#c993ff" stroke="#222" stroke-width="1.8" />
<text x="437.6" y="2134" font-size="21.5" fill="#151515" text-anchor="middle" textLength="104" lengthAdjust="spacing" stroke="#151515" stroke-width="0.5" >Transpose</text>
<polygon points="428.6,2139.5 444,2139.5 436.3,2148" fill="#151515" />
<path d="M443.1 2154.4A24.5 24.5 0 0 1 450 2198.3" fill="none" stroke="#151515" stroke-width="5" />
<path d="M429.5 2154.4A24.5 24.5 0 0 0 422.6 2198.3" fill="none" stroke="#151515" stroke-width="5" />
<line x1="436.3" y1="2151" x2="436.3" y2="2179" stroke="#151515" stroke-width="4.2" />
<text x="436.3" y="2221" font-size="21.5" fill="#151515" text-anchor="middle" textLength="36.5" lengthAdjust="spacing" stroke="#151515" stroke-width="0.5" >0 st</text>
<rect x="391.8" y="2240" width="89" height="26" fill="#cbcbcb" stroke="#808080" stroke-width="2"/>
<text x="436.3" y="2260.7" font-size="21.5" fill="#8c8c8c" text-anchor="middle" textLength="41.5" lengthAdjust="spacing" stroke="#8c8c8c" stroke-width="0.2" >Fold</text>
<text x="350.4" y="2304.7" font-size="21.5" fill="#151515" textLength="69.4" lengthAdjust="spacing" stroke="#151515" stroke-width="0.5" >Lowest</text>
<text x="440" y="2304.7" font-size="21.5" fill="#151515" textLength="62" lengthAdjust="spacing" stroke="#151515" stroke-width="0.5" >Range</text>
<circle cx="515.2" cy="2297" r="4.3" fill="#808080" />
<rect x="350.4" y="2312.5" width="81.8" height="24" fill="#dedede" stroke="#808080" stroke-width="1.8"/>
<text x="391.3" y="2332.2" font-size="21.5" fill="#151515" text-anchor="middle" textLength="33.6" lengthAdjust="spacing" stroke="#151515" stroke-width="0.5" >C-2</text>
<rect x="440" y="2312.5" width="81.7" height="24" fill="#0ccfe6" stroke="#2a8a96" stroke-width="1.8"/>
<text x="480.8" y="2332.2" font-size="21.5" fill="#151515" text-anchor="middle" textLength="72.5" lengthAdjust="spacing" stroke="#151515" stroke-width="0.5" >+128 st</text>
<circle cx="540.4" cy="2039.6" r="3.3" fill="#222" />
<circle cx="540.4" cy="2050.1" r="3.3" fill="#222" />
<circle cx="540.4" cy="2060.5" r="3.3" fill="#222" />
<circle cx="540.4" cy="2071" r="3.3" fill="#222" />
<circle cx="540.4" cy="2081.5" r="3.3" fill="#222" />
<circle cx="540.4" cy="2091.9" r="3.3" fill="#ffb000" />
<circle cx="540.4" cy="2102.4" r="3.3" fill="#ffb000" />
<circle cx="540.4" cy="2112.9" r="3.3" fill="#ffb000" />
<circle cx="540.4" cy="2123.4" r="3.3" fill="#ffb000" />
<circle cx="540.4" cy="2133.8" r="3.3" fill="#ffb000" />
<circle cx="540.4" cy="2144.3" r="3.3" fill="#ffb000" />
<circle cx="540.4" cy="2154.8" r="3.3" fill="#ffb000" />
<circle cx="540.4" cy="2165.2" r="3.3" fill="#ffb000" />
<circle cx="540.4" cy="2175.7" r="3.3" fill="#ffb000" />
<circle cx="540.4" cy="2186.2" r="3.3" fill="#ffb000" />
<circle cx="540.4" cy="2196.7" r="3.3" fill="#ffb000" />
<circle cx="540.4" cy="2207.1" r="3.3" fill="#ffb000" />
<circle cx="540.4" cy="2217.6" r="3.3" fill="#ffb000" />
<circle cx="540.4" cy="2228.1" r="3.3" fill="#ffb000" />
<circle cx="540.4" cy="2238.5" r="3.3" fill="#ffb000" />
<circle cx="540.4" cy="2249" r="3.3" fill="#ffb000" />
<circle cx="540.4" cy="2259.5" r="3.3" fill="#ffb000" />
<rect x="550.2" y="1954.8" width="2044.8" height="390.4" fill="#a9a9a9" rx="7"/>
<path d="M550.2 1990.4V1961.8q0 -7 7 -7H2588q7 0 7 7V1990.4z" fill="#bebebe" />
<circle cx="569.4" cy="1972.2" r="12.2" fill="#ffb700" stroke="#5a5a5a" stroke-width="1.8" />
<circle cx="603" cy="1972.2" r="12.2" fill="#d8d8d8" stroke="#333" stroke-width="1.8" />
<polygon points="599,1965.2 599,1979.2 610.5,1972.2" fill="#151515" />
<text x="625.3" y="1979.9" font-size="21.5" fill="#151515" textLength="216.8" lengthAdjust="spacing" stroke="#151515" stroke-width="0.7" >Drifting Ambient Pad</text>
<path d="M920.3 1991V1966q0 -6.3 6.3 -6.3H1017.2q6.3 0 6.3 6.3V1991z" fill="#222222" />
<rect x="933.5" y="1965.3" width="12" height="12" fill="#ffb700"/>
<text x="955" y="1979.9" font-size="21.5" fill="#c6c6c6" textLength="53" lengthAdjust="spacing" stroke="#c6c6c6" stroke-width="0.3" >Osc 1</text>
<rect x="1028.7" y="1959.7" width="101.3" height="24.8" fill="#adadad" rx="4"/>
<rect x="1041.2" y="1965.3" width="13" height="12.5" fill="#ffb700" stroke="#6b5a2a" stroke-width="1.6"/>
<text x="1062.8" y="1979.9" font-size="21.5" fill="#333" textLength="54" lengthAdjust="spacing" stroke="#333" stroke-width="0.3" >Osc 2</text>
<path d="M1898.6 1991V1966q0 -6.3 6.3 -6.3H2050.1q6.3 0 6.3 6.3V1991z" fill="#222222" />
<text x="1913" y="1979.9" font-size="21.5" fill="#c6c6c6" textLength="130" lengthAdjust="spacing" stroke="#c6c6c6" stroke-width="0.3" >Mod Sources</text>
<rect x="2061.6" y="1959.7" width="92.1" height="24.8" fill="#adadad" rx="4"/>
<text x="2076" y="1979.9" font-size="21.5" fill="#333" textLength="64.3" lengthAdjust="spacing" stroke="#333" stroke-width="0.3" >Matrix</text>
<rect x="2158.9" y="1959.7" width="73.5" height="24.8" fill="#adadad" rx="4"/>
<text x="2173.4" y="1979.9" font-size="21.5" fill="#333" textLength="45" lengthAdjust="spacing" stroke="#333" stroke-width="0.3" >MIDI</text>
<rect x="2237.6" y="1959.7" width="73" height="24.8" fill="#adadad" rx="4"/>
<text x="2252" y="1979.9" font-size="21.5" fill="#333" textLength="43.5" lengthAdjust="spacing" stroke="#333" stroke-width="0.3" >MPE</text>
<circle cx="2542" cy="1972.2" r="12.2" fill="#d8d8d8" stroke="#333" stroke-width="1.8" />
<path d="M2538.8 1977.8A6.5 6.5 0 0 1 2539.8 1966.1" fill="none" stroke="#151515" stroke-width="2.3" />
<path d="M2545.2 1966.6A6.5 6.5 0 0 1 2544.2 1978.3" fill="none" stroke="#151515" stroke-width="2.3" />
<polygon points="2541,1962.7 2541,1969.7 2545.5,1966.2" fill="#151515" />
<polygon points="2543,1981.7 2543,1974.7 2538.5,1978.2" fill="#151515" />
<circle cx="2575.6" cy="1972.2" r="12.2" fill="#d8d8d8" stroke="#333" stroke-width="1.8" />
<rect x="2568.6" y="1965.2" width="14" height="14" fill="#151515" rx="1.5"/>
<rect x="2571.6" y="1965.2" width="7" height="5" fill="#d8d8d8"/>
<rect x="2576.1" y="1965.7" width="2" height="3.5" fill="#151515"/>
<rect x="554.9" y="1994" width="120.6" height="269.5" fill="#b6b6b6" rx="6"/>
<rect x="554.9" y="2268.7" width="120.6" height="72.3" fill="#b6b6b6" rx="6"/>
<rect x="561.6" y="2005.7" width="106.1" height="23.3" fill="#ffb700" stroke="#5c4a1a" stroke-width="1.8"/>
<text x="614.6" y="2025" font-size="21.5" fill="#151515" text-anchor="middle" textLength="36" lengthAdjust="spacing" stroke="#151515" stroke-width="0.5" >Sub</text>
<text x="567.8" y="2057.4" font-size="21.5" fill="#151515" textLength="44" lengthAdjust="spacing" stroke="#151515" stroke-width="0.5" >Gain</text>
<path d="M580.3 2102.7A17.3 17.3 0 1 1 603.5 2086.4" fill="none" stroke="#1d1d1d" stroke-width="4.8" />
<path d="M586.2 2103.7A17.3 17.3 0 0 1 580.3 2102.7" fill="none" stroke="#10dcf4" stroke-width="4.8" />
<line x1="586.2" y1="2086.4" x2="579.5" y2="2104.7" stroke="#1d1d1d" stroke-width="4.5" />
<circle cx="581.6" cy="2105.5" r="2.8" fill="#10dcf4" />
<text x="595.2" y="2111.3" font-size="21.5" fill="#151515" textLength="62" lengthAdjust="spacing" stroke="#151515" stroke-width="0.5" >-20 dB</text>
<text x="567.8" y="2136.1" font-size="21.5" fill="#151515" textLength="46.6" lengthAdjust="spacing" stroke="#151515" stroke-width="0.5" >Tone</text>
<path d="M586.2 2183.5A17.3 17.3 0 1 1 603.5 2166.2" fill="none" stroke="#1d1d1d" stroke-width="4.8" />
<line x1="586.2" y1="2166.2" x2="586.2" y2="2185.7" stroke="#1d1d1d" stroke-width="4.5" />
<text x="594.2" y="2189.9" font-size="21.5" fill="#151515" textLength="52.8" lengthAdjust="spacing" stroke="#151515" stroke-width="0.5" >0.0 %</text>
<text x="561.6" y="2215.3" font-size="21.5" fill="#151515" textLength="70" lengthAdjust="spacing" stroke="#151515" stroke-width="0.5" >Octave</text>
<rect x="561.6" y="2226.2" width="31.1" height="24.4" fill="#dedede" stroke="#666" stroke-width="1.8"/>
<text x="577.2" y="2246.1" font-size="21.5" fill="#151515" text-anchor="middle" stroke="#151515" stroke-width="0.5" >0</text>
<rect x="599.4" y="2226.2" width="31" height="24.4" fill="#ffb700" stroke="#666" stroke-width="1.8"/>
<text x="614.9" y="2246.1" font-size="21.5" fill="#151515" text-anchor="middle" stroke="#151515" stroke-width="0.5" >-1</text>
<rect x="636.6" y="2226.2" width="31.1" height="24.4" fill="#dedede" stroke="#666" stroke-width="1.8"/>
<text x="652.2" y="2246.1" font-size="21.5" fill="#151515" text-anchor="middle" stroke="#151515" stroke-width="0.5" >-2</text>
<text x="561.6" y="2292.9" font-size="21.5" fill="#151515" textLength="102.5" lengthAdjust="spacing" stroke="#151515" stroke-width="0.5" >Transpose</text>
<rect x="561.6" y="2303.9" width="106.1" height="23.3" fill="#dedede" stroke="#666" stroke-width="1.8"/>
<text x="614.6" y="2323.2" font-size="21.5" fill="#151515" text-anchor="middle" textLength="36" lengthAdjust="spacing" stroke="#151515" stroke-width="0.5" >0 st</text>
<rect x="679.6" y="1990.4" width="626.4" height="350.6" fill="#222222" rx="3"/>
<text x="692" y="2019.1" font-size="21.5" fill="#ffb41a" textLength="62.6" lengthAdjust="spacing" stroke="#ffb41a" stroke-width="0.6" >Basics</text>
<polygon points="808.7,2010.2 818.7,2010.2 813.7,2016.2" fill="#ffb41a" />
<line x1="834.4" y1="2001" x2="834.4" y2="2022" stroke="#555" stroke-width="2" />
<text x="846.3" y="2019.1" font-size="21.5" fill="#ffb41a" textLength="103.5" lengthAdjust="spacing" stroke="#ffb41a" stroke-width="0.6" >Pulse Dual</text>
<polygon points="1038.2,2010.2 1048.2,2010.2 1043.2,2016.2" fill="#ffb41a" />
<polygon points="1195.5,2006 1195.5,2016 1188,2011" fill="#bbb" />
<polygon points="1210,2006 1210,2016 1217.5,2011" fill="#bbb" />
<line x1="1229.5" y1="2001" x2="1229.5" y2="2022" stroke="#555" stroke-width="2" />
<line x1="1241.4" y1="2001" x2="1263" y2="2001" stroke="#ffb41a" stroke-width="2.6" />
<line x1="1241.4" y1="2007.2" x2="1263" y2="2007.2" stroke="#ffb41a" stroke-width="2.6" />
<line x1="1241.4" y1="2013.4" x2="1263" y2="2013.4" stroke="#ffb41a" stroke-width="2.6" />
<line x1="1241.4" y1="2019.6" x2="1263" y2="2019.6" stroke="#ffb41a" stroke-width="2.6" />
<circle cx="1283.3" cy="2011" r="9.6" fill="none" stroke="#bbb" stroke-width="2.4" />
<text x="742.8" y="2052.7" font-size="21.5" fill="#ffb41a" text-anchor="middle" stroke="#ffb41a" stroke-width="0.6" >C</text>
<line x1="721" y1="2060.3" x2="764.5" y2="2060.3" stroke="#7a5a16" stroke-width="2.2" />
<circle cx="742.8" cy="2060.3" r="2.2" fill="#ffb41a" />
<rect x="737.6" y="2077.2" width="11.4" height="179.6" fill="#2c2c2c" stroke="#777" stroke-width="1.6"/>
<rect x="741" y="2080" width="4.8" height="174" fill="#ffb41a"/>
<polygon points="765,2076 765,2088.5 752,2082.3" fill="#808080" />
<text x="743.7" y="2293.5" font-size="21.5" fill="#ffb41a" text-anchor="middle" textLength="62" lengthAdjust="spacing" stroke="#ffb41a" stroke-width="0.6" >0.0 dB</text>
<text x="692" y="2328.1" font-size="21.5" fill="#ffb41a" textLength="52.3" lengthAdjust="spacing" stroke="#ffb41a" stroke-width="0.6" >None</text>
<polygon points="773,2319.2 783,2319.2 778,2325.2" fill="#ffb41a" />
<text x="803.8" y="2328.1" font-size="21.5" fill="#c4c4c4" textLength="103.5" lengthAdjust="spacing" stroke="#c4c4c4" stroke-width="0.3" >FX 1 0.0 %</text>
<text x="935.8" y="2328.1" font-size="21.5" fill="#c4c4c4" textLength="102" lengthAdjust="spacing" stroke="#c4c4c4" stroke-width="0.3" >FX 2 0.0 %</text>
<line x1="1058.7" y1="2310" x2="1058.7" y2="2331" stroke="#666" stroke-width="2" />
<text x="1066.5" y="2328.1" font-size="21.5" fill="#c4c4c4" textLength="48" lengthAdjust="spacing" stroke="#c4c4c4" stroke-width="0.3" >Semi</text>
<text x="1123.4" y="2328.1" font-size="21.5" fill="#ffb41a" textLength="36" lengthAdjust="spacing" stroke="#ffb41a" stroke-width="0.6" >0 st</text>
<text x="1189.6" y="2328.1" font-size="21.5" fill="#c4c4c4" textLength="36" lengthAdjust="spacing" stroke="#c4c4c4" stroke-width="0.3" >Det</text>
<text x="1233" y="2328.1" font-size="21.5" fill="#ffb41a" textLength="39" lengthAdjust="spacing" stroke="#ffb41a" stroke-width="0.6" >0 ct</text>
<text x="1244" y="2296" font-size="21.5" fill="#ffb41a" text-anchor="middle" textLength="46.6" lengthAdjust="spacing" stroke="#ffb41a" stroke-width="0.6" >51 %</text>
<line x1="1244.5" y1="2034.7" x2="1244.5" y2="2142" stroke="#666" stroke-width="2.4" />
<line x1="1244.5" y1="2142" x2="1244.5" y2="2255.7" stroke="#ffb41a" stroke-width="2.6" />
<rect x="1239.5" y="2137" width="10" height="10" fill="#3a2a00" stroke="#ffb41a" stroke-width="2"/>
<path d="M808.3 2056.7L810 2045L900 2064.3L903.3 2065L903.3 2065L905 2065L906.7 2064.3L908.3 2063.7L995 2046L1000 2083.3L1086.7 2063.7L1091.7 2062.3L1091.7 2062.3L1093.3 2062.3L1095 2063L1096.7 2063.7L1183.3 2081.7" fill="none" stroke="#707070" stroke-width="2.1" stroke-linejoin="round"/>
<path d="M808.3 2066.1L810.3 2053.8L895.5 2072.1L899.3 2073.7L902.7 2074.2L905.3 2073.7L910.4 2073.6L912.5 2072L994.8 2055.7L1000.2 2091.5L1082.5 2073.2L1087.7 2071.2L1091 2071.7L1093.8 2071.2L1098.7 2072.2L1101 2073.8L1183.3 2091" fill="none" stroke="#707070" stroke-width="2.1" stroke-linejoin="round"/>
<path d="M808.3 2075.6L810.5 2062.6L891 2079.8L895.3 2082.3L902.1 2083.4L905.6 2082.3L914 2082.9L916.7 2080.4L994.7 2065.4L1000.3 2099.7L1078.3 2082.8L1083.7 2080.2L1090.4 2081.1L1094.3 2080L1102.4 2081.5L1105.3 2083.9L1183.3 2100.4" fill="none" stroke="#707070" stroke-width="2.1" stroke-linejoin="round"/>
<path d="M808.3 2085L810.8 2071.4L886.5 2087.6L891.3 2091L901.4 2092.6L906 2091L917.7 2092.1L920.8 2088.8L994.5 2075L1000.5 2107.9L1074.2 2092.4L1079.6 2089.1L1089.7 2090.5L1094.8 2088.9L1106.1 2090.7L1109.6 2094.1L1183.3 2109.7" fill="none" stroke="#707070" stroke-width="2.1" stroke-linejoin="round"/>
<path d="M808.3 2094.5L811 2080.3L882.1 2095.4L887.3 2099.6L900.8 2101.8L906.3 2099.6L921.4 2101.4L925 2097.1L994.4 2084.7L1000.6 2116L1070 2102L1075.6 2098L1089.1 2099.9L1095.3 2097.7L1109.7 2099.9L1114 2104.2L1183.3 2119.1" fill="none" stroke="#707070" stroke-width="2.1" stroke-linejoin="round"/>
<path d="M808.3 2103.9L811.3 2089.1L877.6 2103.1L883.3 2108.3L900.1 2111L906.6 2108.3L925.1 2110.6L929.2 2105.5L994.2 2094.4L1000.8 2124.2L1065.8 2111.6L1071.6 2106.9L1088.5 2109.3L1095.7 2106.6L1113.4 2109.2L1118.3 2114.3L1183.3 2128.5" fill="none" stroke="#707070" stroke-width="2.1" stroke-linejoin="round"/>
<path d="M808.3 2113.4L811.5 2097.9L873.1 2110.9L879.3 2116.9L899.5 2120.2L906.9 2116.9L928.8 2119.9L933.3 2113.9L994 2104.1L1001 2132.4L1061.7 2121.2L1067.6 2115.8L1087.8 2118.7L1096.2 2115.4L1117.1 2118.4L1122.6 2124.4L1183.3 2137.8" fill="none" stroke="#707070" stroke-width="2.1" stroke-linejoin="round"/>
<path d="M808.3 2122.9L811.8 2106.7L868.6 2118.6L875.3 2125.6L898.8 2129.4L907.2 2125.6L932.5 2129.2L937.5 2122.2L993.9 2113.8L1001.1 2140.5L1057.5 2130.8L1063.6 2124.7L1087.2 2128.1L1096.7 2124.3L1120.8 2127.6L1127 2134.6L1183.3 2147.2" fill="none" stroke="#707070" stroke-width="2.1" stroke-linejoin="round"/>
<path d="M808.3 2132.3L812.1 2115.5L864.1 2126.4L871.3 2134.2L898.2 2138.6L907.6 2134.2L936.2 2138.4L941.7 2130.6L993.7 2123.4L1001.3 2148.7L1053.3 2140.3L1059.6 2133.6L1086.5 2137.5L1097.2 2133.1L1124.5 2136.8L1131.3 2144.7L1183.3 2156.5" fill="none" stroke="#707070" stroke-width="2.1" stroke-linejoin="round"/>
<path d="M808.3 2141.8L812.3 2124.3L859.6 2134.1L867.3 2142.9L897.6 2147.8L907.9 2142.9L939.8 2147.7L945.8 2139L993.6 2133.1L1001.4 2156.9L1049.2 2149.9L1055.6 2142.5L1085.9 2146.9L1097.7 2141.9L1128.2 2146.1L1135.6 2154.8L1183.3 2165.9" fill="none" stroke="#707070" stroke-width="2.1" stroke-linejoin="round"/>
<path d="M808.3 2151.2L812.6 2133.1L855.1 2141.9L863.3 2151.5L896.9 2157L908.2 2151.5L943.5 2157L950 2147.3L993.4 2142.8L1001.6 2165.1L1045 2159.5L1051.6 2151.4L1085.3 2156.2L1098.1 2150.8L1131.9 2155.3L1139.9 2164.9L1183.3 2175.3" fill="none" stroke="#707070" stroke-width="2.1" stroke-linejoin="round"/>
<path d="M808.3 2160.1L812.6 2141.3L851.5 2149.3L859.7 2159.2L896.8 2165.3L908.2 2159.9L946.7 2166L953.3 2156L993.3 2152.8L1001.6 2172.1L1041.6 2167.5L1048.1 2159.5L1085.1 2164.9L1098.4 2159.6L1135.1 2164.5L1143.3 2173.6L1183.3 2183.7" fill="none" stroke="#707070" stroke-width="2.1" stroke-linejoin="round"/>
<path d="M808.3 2168.5L812.5 2148.9L848.5 2156.4L856.4 2166.2L897.1 2173L907.9 2168.1L949.4 2174.8L956.1 2164.8L993.3 2163L1001.5 2178.5L1038.7 2174.6L1044.9 2167.1L1085.2 2173L1098.5 2168.3L1138 2173.7L1146.1 2181.2L1183.3 2191.4" fill="none" stroke="#707070" stroke-width="2.1" stroke-linejoin="round"/>
<path d="M808.3 2177L812.5 2156.6L845.4 2163.6L853.1 2173.2L897.4 2180.7L907.6 2176.3L952.2 2183.6L958.9 2173.6L993.3 2173.1L1001.3 2184.8L1035.8 2181.6L1041.7 2174.6L1085.3 2181.1L1098.7 2177L1140.9 2182.9L1148.9 2188.8L1183.3 2199.2" fill="none" stroke="#707070" stroke-width="2.1" stroke-linejoin="round"/>
<path d="M808.3 2185.5L812.4 2164.3L842.4 2170.7L849.8 2180.2L897.6 2188.4L907.4 2184.5L955 2192.4L961.7 2182.4L993.3 2183.3L1001.2 2191.2L1032.9 2188.6L1038.6 2182.1L1085.5 2189.2L1098.8 2185.8L1143.8 2192.1L1151.7 2196.4L1183.3 2206.9" fill="none" stroke="#707070" stroke-width="2.1" stroke-linejoin="round"/>
<path d="M808.3 2193.9L812.3 2172L839.3 2177.9L846.5 2187.2L897.9 2196.1L907.1 2192.7L957.8 2201.2L964.4 2191.2L993.3 2193.5L1001.1 2197.5L1029.9 2195.6L1035.4 2189.7L1085.6 2197.4L1098.9 2194.5L1146.7 2201.3L1154.4 2204L1183.3 2214.7" fill="none" stroke="#707070" stroke-width="2.1" stroke-linejoin="round"/>
<path d="M808.3 2202.4L812.2 2179.6L836.3 2185L843.1 2194.3L898.1 2203.8L906.9 2200.9L960.6 2210L967.2 2200L993.3 2203.7L1000.9 2203.9L1027 2202.6L1032.2 2197.2L1085.7 2205.5L1099.1 2203.2L1149.6 2210.6L1157.2 2211.7L1183.3 2222.4" fill="none" stroke="#707070" stroke-width="2.1" stroke-linejoin="round"/>
<path d="M808.3 2210.9L812.1 2187.3L833.3 2192.1L839.8 2201.3L898.4 2211.5L906.6 2209.1L963.3 2218.8L970 2208.8L993.3 2213.9L1000.8 2210.2L1024.1 2209.6L1029 2204.8L1085.9 2213.6L1099.2 2212L1152.5 2219.8L1160 2219.3L1183.3 2230.2" fill="none" stroke="#707070" stroke-width="2.1" stroke-linejoin="round"/>
<path d="M808.3 2219.3L812.1 2195L830.2 2199.3L836.5 2208.3L898.7 2219.2L906.3 2217.3L966.1 2227.6L972.8 2217.6L993.3 2224.1L1000.7 2216.6L1021.2 2216.6L1025.9 2212.3L1086 2221.7L1099.3 2220.7L1155.4 2229L1162.8 2226.9L1183.3 2237.9" fill="none" stroke="#707070" stroke-width="2.1" stroke-linejoin="round"/>
<path d="M808.3 2227.8L812 2202.6L827.2 2206.4L833.2 2215.3L898.9 2226.9L906.1 2225.5L968.9 2236.4L975.6 2226.4L993.3 2234.3L1000.5 2222.9L1018.3 2223.6L1022.7 2219.8L1086.1 2229.8L1099.5 2229.4L1158.4 2238.2L1165.6 2234.5L1183.3 2245.7" fill="none" stroke="#707070" stroke-width="2.1" stroke-linejoin="round"/>
<path d="M808.3 2236.3L811.9 2210.3L824.1 2213.6L829.9 2222.3L899.2 2234.6L905.8 2233.7L971.7 2245.2L978.3 2235.2L993.3 2244.4L1000.4 2229.3L1015.4 2230.6L1019.5 2227.4L1086.3 2238L1099.6 2238.1L1161.3 2247.4L1168.3 2242.1L1183.3 2253.4" fill="none" stroke="#707070" stroke-width="2.1" stroke-linejoin="round"/>
<path d="M808.3 2244.7L811.8 2218L821.1 2220.7L826.6 2229.3L899.5 2242.3L905.5 2241.9L974.4 2254L981.1 2244L993.3 2254.6L1000.3 2235.6L1012.5 2237.6L1016.3 2234.9L1086.4 2246.1L1099.7 2246.9L1164.2 2256.6L1171.1 2249.8L1183.3 2261.2" fill="none" stroke="#707070" stroke-width="2.1" stroke-linejoin="round"/>
<path d="M808.3 2253.2L811.7 2225.7L818 2227.9L823.3 2236.3L899.7 2250L905.3 2250.1L977.2 2262.9L983.9 2252.9L993.3 2264.8L1000.1 2242L1009.6 2244.7L1013.2 2242.5L1086.5 2254.2L1099.9 2255.6L1167.1 2265.8L1173.9 2257.4L1183.3 2268.9" fill="none" stroke="#707070" stroke-width="2.1" stroke-linejoin="round"/>
<path d="M808.3 2261.7L811.7 2233.3L815 2235L820 2243.3L900 2257.7L905 2258.3L980 2271.7L986.7 2261.7L993.3 2275L1000 2248.3L1006.7 2251.7L1010 2250L1086.7 2262.3L1100 2264.3L1170 2275L1176.7 2265L1183.3 2276.7" fill="none" stroke="#707070" stroke-width="2.1" stroke-linejoin="round"/>
<path d="M808.3 2155L812.7 2136.7L853.3 2145L861.7 2155L896.7 2160.7L908.3 2155L945 2160.7L951.7 2150.7L993.3 2146.7L1001.7 2168.3L1043.3 2163.3L1050 2155L1085 2160L1098.3 2154.3L1133.3 2159L1141.7 2169L1183.3 2179" fill="none" stroke="#ffb41a" stroke-width="3.6" stroke-linejoin="round"/>
<rect x="1310.8" y="1990.4" width="482.4" height="195.6" fill="#222222" rx="3"/>
<rect x="1310.8" y="2186" width="482.4" height="155" fill="#b0b0b0" rx="4"/>
<rect x="1320.6" y="2002" width="18.6" height="18.7" fill="#ffb41a"/>
<path d="M1353.7 2005h21q5.5 0 7 4l3 8.5" fill="none" stroke="#ffb41a" stroke-width="2.6" />
<polygon points="1391.5,2011.5 1400.5,2011.5 1396,2016.9" fill="#ffb41a" />
<rect x="1415.8" y="2000.6" width="30.1" height="22.2" fill="#ffb41a"/>
<text x="1430.8" y="2019.4" font-size="21.5" fill="#1a1a1a" text-anchor="middle" textLength="25" lengthAdjust="spacing" stroke="#1a1a1a" stroke-width="0.5" >24</text>
<text x="1459.8" y="2019.4" font-size="21.5" fill="#ffb41a" textLength="56.5" lengthAdjust="spacing" stroke="#ffb41a" stroke-width="0.6" >Clean</text>
<polygon points="1520,2011.5 1529,2011.5 1524.5,2016.9" fill="#ffb41a" />
<line x1="1552" y1="2001" x2="1552" y2="2022" stroke="#666" stroke-width="2" />
<rect x="1568.5" y="2002" width="19.2" height="18.7" fill="#ffb41a"/>
<path d="M1601 2005.5q5.5 0 9 6.5t7.5 6.5t7.5 -6.5t9 -6.5" fill="none" stroke="#ffb41a" stroke-width="2.6" />
<polygon points="1638.5,2011.5 1647.5,2011.5 1643,2016.9" fill="#ffb41a" />
<rect x="1664.3" y="2000.6" width="29.5" height="22.2" fill="#10dcf4"/>
<text x="1679" y="2019.4" font-size="21.5" fill="#1a1a1a" text-anchor="middle" textLength="25" lengthAdjust="spacing" stroke="#1a1a1a" stroke-width="0.5" >12</text>
<text x="1708.3" y="2019.4" font-size="21.5" fill="#ffb41a" textLength="56.5" lengthAdjust="spacing" stroke="#ffb41a" stroke-width="0.6" >Clean</text>
<polygon points="1768.2,2011.5 1777.2,2011.5 1772.7,2016.9" fill="#ffb41a" />
<path d="M1310.8 2090.6H1512C1540 2090.6 1547.5 2098 1550 2125L1551 2153.5H1555L1556 2125C1558.5 2098 1566 2091.5 1594 2091.2H1760C1778 2091 1787.5 2087 1791 2058V2153.5" fill="none" stroke="#10dcf4" stroke-width="3" />
<circle cx="1553" cy="2094.2" r="13" fill="#ffb41a" />
<text x="1553" y="2099.9" font-size="15" fill="#1a1a1a" text-anchor="middle" stroke="#1a1a1a" stroke-width="0.4" >2</text>
<circle cx="1732" cy="2092.7" r="12" fill="#222" stroke="#ffb41a" stroke-width="2.6" />
<text x="1732" y="2098.4" font-size="15" fill="#ffb41a" text-anchor="middle" stroke="#ffb41a" stroke-width="0.4" >1</text>
<line x1="1310.8" y1="2154.3" x2="1793.2" y2="2154.3" stroke="#5a5a5a" stroke-width="1.8" />
<line x1="1325" y1="2172" x2="1331" y2="2172" stroke="#c4c4c4" stroke-width="2" />
<rect x="1331" y="2168" width="7" height="8" fill="none" stroke="#c4c4c4" stroke-width="1.8"/>
<line x1="1338" y1="2172" x2="1341" y2="2172" stroke="#c4c4c4" stroke-width="2" />
<rect x="1341" y="2168" width="7" height="8" fill="none" stroke="#c4c4c4" stroke-width="1.8"/>
<line x1="1348" y1="2172" x2="1359" y2="2172" stroke="#c4c4c4" stroke-width="2" />
<text x="1372.9" y="2179.6" font-size="21.5" fill="#c4c4c4" textLength="57.4" lengthAdjust="spacing" stroke="#c4c4c4" stroke-width="0.4" >Serial</text>
<polygon points="1450.5,2171.5 1459.5,2171.5 1455,2176.9" fill="#c4c4c4" />
<text x="1327.8" y="2215.3" font-size="21.5" fill="#151515" textLength="34.7" lengthAdjust="spacing" stroke="#151515" stroke-width="0.5" >Res</text>
<text x="1421" y="2215.3" font-size="21.5" fill="#151515" textLength="106" lengthAdjust="spacing" stroke="#151515" stroke-width="0.5" >Frequency</text>
<text x="1575.3" y="2215.3" font-size="21.5" fill="#151515" textLength="105.5" lengthAdjust="spacing" stroke="#151515" stroke-width="0.5" >Frequency</text>
<text x="1692.8" y="2215.3" font-size="21.5" fill="#151515" textLength="33.6" lengthAdjust="spacing" stroke="#151515" stroke-width="0.5" >Res</text>
<path d="M1333 2234.1A17.3 17.3 0 0 1 1364.1 2244.5" fill="none" stroke="#1d1d1d" stroke-width="4.8" />
<path d="M1346.8 2261.8A17.3 17.3 0 0 1 1333 2234.1" fill="none" stroke="#10dcf4" stroke-width="4.8" />
<line x1="1346.8" y1="2244.5" x2="1331.2" y2="2232.8" stroke="#1d1d1d" stroke-width="4.5" />
<text x="1354.8" y="2269.7" font-size="21.5" fill="#151515" textLength="46.5" lengthAdjust="spacing" stroke="#151515" stroke-width="0.5" >61 %</text>
<path d="M1506.5 2278.5A35.5 35.5 0 0 1 1494.7 2292.6" fill="none" stroke="#1d1d1d" stroke-width="6.4" />
<path d="M1453.9 2292.6A35.5 35.5 0 1 1 1507 2277.4" fill="none" stroke="#10dcf4" stroke-width="6.4" />
<line x1="1481.7" y1="2266.6" x2="1509.9" y2="2278.6" stroke="#1d1d1d" stroke-width="5.6" />
<text x="1474.6" y="2321.4" font-size="21.5" fill="#151515" text-anchor="middle" textLength="84.4" lengthAdjust="spacing" stroke="#151515" stroke-width="0.5" >10.0 kHz</text>
<line x1="1551" y1="2195" x2="1551" y2="2333" stroke="#888" stroke-width="2" />
<path d="M1629.5 2228A35.5 35.5 0 0 1 1648.7 2292.6" fill="none" stroke="#1d1d1d" stroke-width="6.4" />
<path d="M1607.9 2292.6A35.5 35.5 0 0 1 1628.3 2228" fill="none" stroke="#10dcf4" stroke-width="6.4" />
<line x1="1628.3" y1="2255.5" x2="1628.3" y2="2224.8" stroke="#1d1d1d" stroke-width="5.6" />
<text x="1627.5" y="2321.4" font-size="21.5" fill="#151515" text-anchor="middle" textLength="66.3" lengthAdjust="spacing" stroke="#151515" stroke-width="0.5" >640 Hz</text>
<path d="M1695.9 2236.4A17.3 17.3 0 0 1 1728.5 2244.5" fill="none" stroke="#1d1d1d" stroke-width="4.8" />
<path d="M1711.2 2261.8A17.3 17.3 0 0 1 1695.9 2236.4" fill="none" stroke="#10dcf4" stroke-width="4.8" />
<line x1="1711.2" y1="2244.5" x2="1694" y2="2235.3" stroke="#1d1d1d" stroke-width="4.5" />
<text x="1719.7" y="2269.7" font-size="21.5" fill="#151515" textLength="45.5" lengthAdjust="spacing" stroke="#151515" stroke-width="0.5" >57 %</text>
<rect x="1798.9" y="1990.4" width="658.7" height="350.6" fill="#222222" rx="3"/>
<text x="1839.5" y="2019.1" font-size="21.5" fill="#10dcf4" textLength="46" lengthAdjust="spacing" stroke="#10dcf4" stroke-width="0.6" >Amp</text>
<text x="1969" y="2019.1" font-size="21.5" fill="#c4c4c4" textLength="51.7" lengthAdjust="spacing" stroke="#c4c4c4" stroke-width="0.4" >Env 2</text>
<text x="2100.4" y="2019.1" font-size="21.5" fill="#c4c4c4" textLength="52.3" lengthAdjust="spacing" stroke="#c4c4c4" stroke-width="0.4" >Env 3</text>
<text x="2231.4" y="2019.1" font-size="21.5" fill="#c4c4c4" textLength="54.3" lengthAdjust="spacing" stroke="#c4c4c4" stroke-width="0.4" >LFO 1</text>
<text x="2364.4" y="2019.1" font-size="21.5" fill="#c4c4c4" textLength="54.9" lengthAdjust="spacing" stroke="#c4c4c4" stroke-width="0.4" >LFO 2</text>
<line x1="1798.9" y1="2030" x2="2457.6" y2="2030" stroke="#5a5a5a" stroke-width="1.8" />
<line x1="1798.9" y1="2030" x2="1928.6" y2="2030" stroke="#10dcf4" stroke-width="2.4" />
<text x="2354.6" y="2060.5" font-size="21.5" fill="#10dcf4" textLength="51.7" lengthAdjust="spacing" stroke="#10dcf4" stroke-width="0.6" >None</text>
<polygon points="2433.9,2052.5 2442.9,2052.5 2438.4,2057.9" fill="#10dcf4" />
<path d="M1825 2069.4H1843M1825 2069.4V2087.4" fill="none" stroke="#10dcf4" stroke-width="2.6" stroke-linecap="square"/>
<path d="M2424.4 2069.4H2406.4M2424.4 2069.4V2087.4" fill="none" stroke="#10dcf4" stroke-width="2.6" stroke-linecap="square"/>
<path d="M1825 2242.8H1843M1825 2242.8V2224.8" fill="none" stroke="#10dcf4" stroke-width="2.6" stroke-linecap="square"/>
<path d="M2424.4 2242.8H2406.4M2424.4 2242.8V2224.8" fill="none" stroke="#10dcf4" stroke-width="2.6" stroke-linecap="square"/>
<path d="M1835.4 2236L1966.9 2078.7C1980 2105 2010 2121 2045.5 2124.8H2220C2235 2190 2270 2224 2334.9 2233.5" fill="none" stroke="#10dcf4" stroke-width="3.2" stroke-linejoin="round"/>
<rect x="1961.4" y="2073.2" width="11" height="11" fill="#3a2a00" stroke="#ffb41a" stroke-width="2.2"/>
<rect x="2040" y="2119.3" width="11" height="11" fill="#3a2a00" stroke="#ffb41a" stroke-width="2.2"/>
<rect x="2329.4" y="2228" width="11" height="11" fill="#3a2a00" stroke="#ffb41a" stroke-width="2.2"/>
<path d="M1903.2 2152.4l5 5l-5 5l-5 -5z" fill="#5a2a33" stroke="#ff7a90" stroke-width="1.8" />
<path d="M2007.2 2108.4l5 5l-5 5l-5 -5z" fill="#5a2a33" stroke="#ff7a90" stroke-width="1.8" />
<path d="M2277.4 2213l5 5l-5 5l-5 -5z" fill="#5a2a33" stroke="#ff7a90" stroke-width="1.8" />
<text x="2070.9" y="2263.4" font-size="21.5" fill="#ffffff" textLength="48" lengthAdjust="spacing" stroke="#ffffff" stroke-width="0.8" >Time</text>
<text x="2129.4" y="2263.4" font-size="21.5" fill="#9a9a9a" textLength="55.4" lengthAdjust="spacing" stroke="#9a9a9a" stroke-width="0.4" >Slope</text>
<line x1="1798.9" y1="2273.9" x2="2457.6" y2="2273.9" stroke="#5a5a5a" stroke-width="1.8" />
<line x1="2064" y1="2273.9" x2="2127" y2="2273.9" stroke="#f0f0f0" stroke-width="2.6" />
<text x="1948.2" y="2300.7" font-size="21.5" fill="#c4c4c4" text-anchor="middle" stroke="#c4c4c4" stroke-width="0.4" >A</text>
<text x="2042.4" y="2300.7" font-size="21.5" fill="#c4c4c4" text-anchor="middle" stroke="#c4c4c4" stroke-width="0.4" >D</text>
<text x="2134.6" y="2300.7" font-size="21.5" fill="#c4c4c4" text-anchor="middle" stroke="#c4c4c4" stroke-width="0.4" >S</text>
<text x="2229.3" y="2300.7" font-size="21.5" fill="#c4c4c4" text-anchor="middle" stroke="#c4c4c4" stroke-width="0.4" >R</text>
<text x="1946.7" y="2328.1" font-size="21.5" fill="#10dcf4" textLength="57.5" lengthAdjust="spacing" stroke="#10dcf4" stroke-width="0.6" >4.62 s</text>
<text x="2039.9" y="2328.1" font-size="21.5" fill="#10dcf4" textLength="70" lengthAdjust="spacing" stroke="#10dcf4" stroke-width="0.6" >600 ms</text>
<text x="2134" y="2328.1" font-size="21.5" fill="#10dcf4" textLength="69.4" lengthAdjust="spacing" stroke="#10dcf4" stroke-width="0.6" >-6.0 dB</text>
<text x="2227.2" y="2328.1" font-size="21.5" fill="#10dcf4" textLength="58.5" lengthAdjust="spacing" stroke="#10dcf4" stroke-width="0.6" >2.90 s</text>
<rect x="2463.3" y="1994" width="126.2" height="347" fill="#b6b6b6" rx="6"/>
<text x="2469.5" y="2017.6" font-size="21.5" fill="#151515" textLength="72.5" lengthAdjust="spacing" stroke="#151515" stroke-width="0.5" >Volume</text>
<rect x="2469.5" y="2024.4" width="114.9" height="24.3" fill="#dedede" stroke="#666" stroke-width="1.8"/>
<rect x="2470.5" y="2025.4" width="84.4" height="22.3" fill="#0ccfe6"/>
<text x="2527" y="2044.2" font-size="21.5" fill="#151515" text-anchor="middle" textLength="68" lengthAdjust="spacing" stroke="#151515" stroke-width="0.5" >-5.0 dB</text>
<line x1="2469.5" y1="2054.9" x2="2584.4" y2="2054.9" stroke="#8a8a8a" stroke-width="1.8" />
<rect x="2469.5" y="2067.8" width="63.1" height="24.9" fill="#ffb700" stroke="#5c4a1a" stroke-width="1.8"/>
<text x="2501" y="2087.9" font-size="21.5" fill="#151515" text-anchor="middle" textLength="42" lengthAdjust="spacing" stroke="#151515" stroke-width="0.5" >Poly</text>
<rect x="2542" y="2067.8" width="42.4" height="24.9" fill="#dedede" stroke="#666" stroke-width="1.8"/>
<text x="2547" y="2087.9" font-size="21.5" fill="#151515" stroke="#151515" stroke-width="0.5" >8</text>
<polygon points="2565,2075.5 2579,2075.5 2572,2086.5" fill="#151515" />
<text x="2469.5" y="2115.9" font-size="21.5" fill="#151515" textLength="50.7" lengthAdjust="spacing" stroke="#151515" stroke-width="0.5" >Glide</text>
<rect x="2469.5" y="2121.2" width="114.9" height="25.8" fill="#a9a9a9" stroke="#666" stroke-width="1.8"/>
<text x="2527" y="2141.7" font-size="21.5" fill="#151515" text-anchor="middle" textLength="76" lengthAdjust="spacing" stroke="#151515" stroke-width="0.5" >0.00 ms</text>
<line x1="2469.5" y1="2160" x2="2584.4" y2="2160" stroke="#8a8a8a" stroke-width="1.8" />
<text x="2469.5" y="2188.4" font-size="21.5" fill="#151515" textLength="68.3" lengthAdjust="spacing" stroke="#151515" stroke-width="0.5" >Unison</text>
<rect x="2469.5" y="2194.7" width="114.9" height="24.8" fill="#dedede" stroke="#666" stroke-width="1.8"/>
<text x="2473" y="2214.7" font-size="21.5" fill="#151515" textLength="88.5" lengthAdjust="spacing" stroke="#151515" stroke-width="0.5" >Shimmer</text>
<polygon points="2567,2201.5 2581,2201.5 2574,2212.5" fill="#151515" />
<text x="2469.5" y="2242.7" font-size="21.5" fill="#151515" textLength="64.7" lengthAdjust="spacing" stroke="#151515" stroke-width="0.5" >Voices</text>
<rect x="2469.5" y="2249" width="114.9" height="24.9" fill="#dedede" stroke="#666" stroke-width="1.8"/>
<rect x="2470.5" y="2250" width="18.6" height="22.9" fill="#0ccfe6"/>
<text x="2524.5" y="2269.2" font-size="21.5" fill="#151515" text-anchor="middle" stroke="#151515" stroke-width="0.5" >3</text>
<text x="2469.5" y="2297.1" font-size="21.5" fill="#151515" textLength="77.6" lengthAdjust="spacing" stroke="#151515" stroke-width="0.5" >Amount</text>
<rect x="2469.5" y="2303.4" width="114.9" height="23.8" fill="#dedede" stroke="#666" stroke-width="1.8"/>
<rect x="2470.5" y="2304.4" width="41.4" height="21.8" fill="#0ccfe6"/>
<text x="2528" y="2323" font-size="21.5" fill="#151515" text-anchor="middle" textLength="46.5" lengthAdjust="spacing" stroke="#151515" stroke-width="0.5" >38 %</text>
<rect x="2600.4" y="2035.8" width="4.4" height="226.2" fill="#222"/>
<rect x="2600.4" y="2085" width="4.4" height="177" fill="url(#dvm)"/>
<rect x="2600.4" y="2063" width="4.4" height="2.5" fill="#f07000"/>
<rect x="2606.4" y="2035.8" width="4.4" height="226.2" fill="#222"/>
<rect x="2606.4" y="2085" width="4.4" height="177" fill="url(#dvm)"/>
<rect x="2606.4" y="2063" width="4.4" height="2.5" fill="#f07000"/>
<rect x="2600.4" y="2059.5" width="10.4" height="2" fill="#9a9a9a"/>
<rect x="2615.2" y="1954.8" width="365.8" height="390.4" fill="#a9a9a9" rx="7"/>
<path d="M2615.2 1990.4V1961.8q0 -7 7 -7H2974q7 0 7 7V1990.4z" fill="#bebebe" />
<circle cx="2634.6" cy="1972.2" r="12.2" fill="#ffb700" stroke="#5a5a5a" stroke-width="1.8" />
<text x="2657" y="1979.9" font-size="21.5" fill="#151515" textLength="126.8" lengthAdjust="spacing" stroke="#151515" stroke-width="0.7" >Droney Cave</text>
<rect x="2619" y="1994" width="114" height="347" fill="#b6b6b6" rx="6"/>
<text x="2677" y="2017.6" font-size="21.5" fill="#151515" text-anchor="middle" textLength="48.7" lengthAdjust="spacing" stroke="#151515" stroke-width="0.5" >Send</text>
<path d="M2696.7 2036A25 25 0 0 1 2691.6 2068.4" fill="none" stroke="#1d1d1d" stroke-width="5.2" />
<path d="M2659.4 2068.4A25 25 0 1 1 2696.7 2036" fill="none" stroke="#10dcf4" stroke-width="5.2" />
<line x1="2677.3" y1="2048.3" x2="2700.2" y2="2036.1" stroke="#1d1d1d" stroke-width="5" />
<text x="2677" y="2092.6" font-size="21.5" fill="#151515" text-anchor="middle" textLength="68.6" lengthAdjust="spacing" stroke="#151515" stroke-width="0.5" >-3.1 dB</text>
<text x="2678" y="2139.2" font-size="21.5" fill="#151515" text-anchor="middle" textLength="87.2" lengthAdjust="spacing" stroke="#151515" stroke-width="0.5" >Predelay</text>
<path d="M2650.9 2175.4A25 25 0 1 1 2691.6 2190.3" fill="none" stroke="#1d1d1d" stroke-width="5.2" />
<path d="M2659.4 2190.3A25 25 0 0 1 2650.9 2175.4" fill="none" stroke="#10dcf4" stroke-width="5.2" />
<line x1="2675.5" y1="2171.1" x2="2647.9" y2="2176" stroke="#1d1d1d" stroke-width="5" />
<text x="2676.5" y="2213.5" font-size="21.5" fill="#151515" text-anchor="middle" textLength="75" lengthAdjust="spacing" stroke="#151515" stroke-width="0.5" >10.0 ms</text>
<rect x="2628.1" y="2226" width="43.5" height="24.6" fill="#ffb700" stroke="#5c4a1a" stroke-width="1.8"/>
<text x="2650" y="2246" font-size="21.5" fill="#151515" text-anchor="middle" textLength="28" lengthAdjust="spacing" stroke="#151515" stroke-width="0.5" >ms</text>
<rect x="2680.4" y="2226" width="44" height="24.6" fill="#dedede" stroke="#666" stroke-width="1.8"/>
<text x="2702.4" y="2245.8" font-size="21" fill="#151515" text-anchor="middle" stroke="#151515" stroke-width="0.3" >♪</text>
<text x="2676" y="2301" font-size="21.5" fill="#151515" text-anchor="middle" textLength="95.8" lengthAdjust="spacing" stroke="#151515" stroke-width="0.5" >Feedback</text>
<rect x="2628.1" y="2307.5" width="95.8" height="24.1" fill="#dedede" stroke="#666" stroke-width="1.8"/>
<text x="2676" y="2327.2" font-size="21.5" fill="#151515" text-anchor="middle" textLength="52.8" lengthAdjust="spacing" stroke="#151515" stroke-width="0.5" >0.0 %</text>
<clipPath id="dcclip"><rect x="2737.6" y="1989.7" width="243.4" height="235"/></clipPath>
<rect x="2737.6" y="1989.7" width="243.4" height="235" fill="#222222" rx="4"/>
<path d="M2745 2070.1L2746.5 2068L2748 2066.3L2749.5 2065.9L2751 2064.5L2752.5 2054.4L2754 2053.6L2755.5 2057.8L2757 2057.3L2758.5 2025L2760 2000L2761.5 2000L2763 2000L2764.5 2030L2766 2059.9L2767.5 2058.1L2769 2058.8L2770.5 2062.1L2773.5 2061.5L2776.5 2062.3L2779.5 2060.4L2782.5 2060.9L2785.5 2063.2L2788.5 2060.7L2791.5 2062.4L2794.5 2061.9L2797.5 2060.7L2800.5 2063L2803.5 2062.1L2806.5 2061.4L2809.5 2060.6L2812.5 2062.9L2815.5 2064L2818.5 2064.5L2821.5 2062L2824.5 2061.7L2827.5 2062.5L2830.5 2063L2833.5 2062.3L2836.5 2063.6L2839.5 2065.1L2842.5 2063.3L2845.5 2062.8L2848.5 2064.4L2851.5 2065.6L2854.5 2065.2L2857.5 2065.7L2860.5 2065.5L2863.5 2064.8L2866.5 2065.9L2869.5 2064.6L2872.5 2063.9L2875.5 2065.5L2878.5 2065.4L2881.5 2063.8L2884.5 2066.1L2887.5 2066L2890.5 2065.1L2893.5 2066.7L2896.5 2065.8L2899.5 2064.4L2902.5 2065.6L2905.5 2065.3L2908.5 2064.8L2911.5 2065L2914.5 2066.2L2917.5 2067L2920.5 2067.2L2923.5 2066.9L2926.5 2066.6L2929.5 2067.5L2932.5 2067.3L2935.5 2067.5L2938.5 2066.3L2941.5 2067.1L2944.5 2067L2947.5 2066L2950.5 2066.9L2953.5 2067.7L2956.5 2067.2L2959.5 2066.3L2962.5 2068L2965.5 2067L2968.5 2067.1L2971.5 2067.1L2974.5 2066.6L2977.5 2067.8L2980.5 2068L2980.5 2077.1L2977.5 2076.4L2974.5 2077.1L2971.5 2077.7L2968.5 2075.9L2965.5 2076.2L2962.5 2077.9L2959.5 2076.3L2956.5 2076.6L2953.5 2076.3L2950.5 2077.2L2947.5 2078.3L2944.5 2076.5L2941.5 2077.1L2938.5 2076.7L2935.5 2078.4L2932.5 2077.3L2929.5 2076.9L2926.5 2076.7L2923.5 2077L2920.5 2076.9L2917.5 2078.3L2914.5 2077.8L2911.5 2078.8L2908.5 2078.9L2905.5 2077.1L2902.5 2078.6L2899.5 2078.9L2896.5 2078.7L2893.5 2078.4L2890.5 2078L2887.5 2078.7L2884.5 2078.1L2881.5 2078L2878.5 2080.1L2875.5 2078.9L2872.5 2080.2L2869.5 2080.4L2866.5 2079.2L2863.5 2080.6L2860.5 2078.8L2857.5 2080.5L2854.5 2078.6L2851.5 2079.8L2848.5 2080.5L2845.5 2079.4L2842.5 2081.8L2839.5 2081L2836.5 2081L2833.5 2082.1L2830.5 2080.5L2827.5 2081.1L2824.5 2080.3L2821.5 2081.3L2818.5 2081.8L2815.5 2081.3L2812.5 2082.4L2809.5 2080.1L2806.5 2080.9L2803.5 2083.3L2800.5 2082.3L2797.5 2082.9L2794.5 2081.4L2791.5 2082.8L2788.5 2082.2L2785.5 2081.4L2782.5 2081L2779.5 2082.4L2776.5 2083.5L2773.5 2084.8L2770.5 2081.7L2769 2082.6L2767.5 2081.5L2766 2083.3L2764.5 2115.7L2763 2146.9L2761.5 2146.9L2760 2146.9L2758.5 2120.9L2757 2088.5L2755.5 2086.9L2754 2093.5L2752.5 2089.8L2751 2081L2749.5 2079.4L2748 2077.3L2746.5 2075.2L2745 2073.7z" fill="#ffb41a" clip-path="url(#dcclip)"/>
<rect x="2752.3" y="2160" width="19.4" height="19.4" fill="#ffb41a"/>
<text x="2785.5" y="2178" font-size="21.5" fill="#c4c4c4" textLength="67.8" lengthAdjust="spacing" stroke="#c4c4c4" stroke-width="0.4" >Attack</text>
<text x="2893.9" y="2178" font-size="21.5" fill="#c4c4c4" textLength="60.8" lengthAdjust="spacing" stroke="#c4c4c4" stroke-width="0.4" >Decay</text>
<text x="2782.9" y="2211.7" font-size="21.5" fill="#ffb41a" textLength="77.4" lengthAdjust="spacing" stroke="#ffb41a" stroke-width="0.7" >0.00 ms</text>
<text x="2896" y="2211.7" font-size="21.5" fill="#ffb41a" textLength="58.2" lengthAdjust="spacing" stroke="#ffb41a" stroke-width="0.7" >20.0 s</text>
<path d="M2737.6 2341V2234q0 -5.5 5.5 -5.5H2981V2341z" fill="#b6b6b6" />
<text x="2748.4" y="2259" font-size="21.5" fill="#151515" textLength="146.2" lengthAdjust="spacing" stroke="#151515" stroke-width="0.5" >Convolution IR</text>
<rect x="2745.9" y="2273.9" width="239.1" height="24.5" fill="#dedede" stroke="#666" stroke-width="1.8" clip-path="url(#dvclip)"/>
<text x="2751" y="2294" font-size="21.5" fill="#151515" textLength="47.9" lengthAdjust="spacing" stroke="#151515" stroke-width="0.5" >Halls</text>
<rect x="2745.9" y="2306.2" width="239.1" height="25.8" fill="#dedede" stroke="#666" stroke-width="1.8" clip-path="url(#dvclip)"/>
<text x="2751" y="2326.9" font-size="21.5" fill="#151515" textLength="152" lengthAdjust="spacing" stroke="#151515" stroke-width="0.5" >Berliner Hall LR</text>
<circle cx="38.5" cy="2384" r="16" fill="#a6a6a6" />
<rect x="36.5" y="2381" width="4" height="11" fill="#8b8b8b"/>
<circle cx="38.5" cy="2375.5" r="2.6" fill="#8b8b8b" />
<rect x="87.8" y="2364.6" width="1766.4" height="39.2" fill="#a9a9a9" rx="7"/>
<rect x="1872.7" y="2364.6" width="458.6" height="39.2" fill="#bcbcbc" rx="6"/>
<path d="M1913 2364.6H1879q-6.3 0 -6.3 6.3V2397.5q0 6.3 6.3 6.3H1913z" fill="#a9a9a9" />
<line x1="1913" y1="2364.6" x2="1913" y2="2403.8" stroke="#8b8b8b" stroke-width="1.6" />
<polygon points="1886,2377 1886,2391.5 1898.5,2384.2" fill="#151515" />
<rect x="2151" y="2367" width="74" height="34.5" fill="#a1cdd3"/>
<line x1="2151" y1="2364.6" x2="2151" y2="2403.8" stroke="#222" stroke-width="2.2" />
<line x1="1967" y1="2376" x2="2040" y2="2376" stroke="#8f8f8f" stroke-width="1.6" />
<line x1="2072" y1="2386" x2="2104" y2="2386" stroke="#8f8f8f" stroke-width="1.6" />
<line x1="1916" y1="2400.5" x2="2280" y2="2400.5" stroke="#8f8f8f" stroke-width="1.6" />
<rect x="2370" y="2364.6" width="141.6" height="39.2" fill="#a9a9a9"/>
<rect x="2350.4" y="2364.6" width="39.9" height="39.2" fill="#ffb700" rx="3"/>
<rect x="2380" y="2364.6" width="10.3" height="39.2" fill="#ffb700"/>
<polygon points="2362.5,2391 2378.5,2391 2370.5,2377.5" fill="#151515" />
<text x="2404.8" y="2391.9" font-size="21.5" fill="#151515" textLength="90.6" lengthAdjust="spacing" stroke="#151515" stroke-width="0.6" >Drift Pad</text>
<rect x="2511.6" y="2363" width="264" height="42" fill="#8f8f8f" stroke="#484848" stroke-width="3"/>
<rect x="2516" y="2367" width="25" height="35" fill="#2a2a2a"/>
<rect x="2517.5" y="2369" width="2.6" height="2.6" fill="#5a5a5a"/>
<rect x="2517.5" y="2373.1" width="2.6" height="2.6" fill="#5a5a5a"/>
<rect x="2517.5" y="2377.2" width="2.6" height="2.6" fill="#5a5a5a"/>
<rect x="2517.5" y="2381.3" width="2.6" height="2.6" fill="#5a5a5a"/>
<rect x="2517.5" y="2385.4" width="2.6" height="2.6" fill="#5a5a5a"/>
<rect x="2517.5" y="2389.5" width="2.6" height="2.6" fill="#5a5a5a"/>
<rect x="2517.5" y="2393.6" width="2.6" height="2.6" fill="#5a5a5a"/>
<rect x="2517.5" y="2397.7" width="2.6" height="2.6" fill="#5a5a5a"/>
<rect x="2521.4" y="2369" width="2.6" height="2.6" fill="#5a5a5a"/>
<rect x="2521.4" y="2373.1" width="2.6" height="2.6" fill="#5a5a5a"/>
<rect x="2521.4" y="2377.2" width="2.6" height="2.6" fill="#5a5a5a"/>
<rect x="2521.4" y="2381.3" width="2.6" height="2.6" fill="#5a5a5a"/>
<rect x="2521.4" y="2385.4" width="2.6" height="2.6" fill="#5a5a5a"/>
<rect x="2521.4" y="2389.5" width="2.6" height="2.6" fill="#5a5a5a"/>
<rect x="2521.4" y="2393.6" width="2.6" height="2.6" fill="#5a5a5a"/>
<rect x="2521.4" y="2397.7" width="2.6" height="2.6" fill="#5a5a5a"/>
<rect x="2525.3" y="2369" width="2.6" height="2.6" fill="#5a5a5a"/>
<rect x="2525.3" y="2373.1" width="2.6" height="2.6" fill="#5a5a5a"/>
<rect x="2525.3" y="2377.2" width="2.6" height="2.6" fill="#5a5a5a"/>
<rect x="2525.3" y="2381.3" width="2.6" height="2.6" fill="#5a5a5a"/>
<rect x="2525.3" y="2385.4" width="2.6" height="2.6" fill="#5a5a5a"/>
<rect x="2525.3" y="2389.5" width="2.6" height="2.6" fill="#5a5a5a"/>
<rect x="2525.3" y="2393.6" width="2.6" height="2.6" fill="#5a5a5a"/>
<rect x="2525.3" y="2397.7" width="2.6" height="2.6" fill="#5a5a5a"/>
<rect x="2529.2" y="2369" width="2.6" height="2.6" fill="#5a5a5a"/>
<rect x="2529.2" y="2373.1" width="2.6" height="2.6" fill="#5a5a5a"/>
<rect x="2529.2" y="2377.2" width="2.6" height="2.6" fill="#5a5a5a"/>
<rect x="2529.2" y="2381.3" width="2.6" height="2.6" fill="#5a5a5a"/>
<rect x="2529.2" y="2385.4" width="2.6" height="2.6" fill="#5a5a5a"/>
<rect x="2529.2" y="2389.5" width="2.6" height="2.6" fill="#5a5a5a"/>
<rect x="2529.2" y="2393.6" width="2.6" height="2.6" fill="#5a5a5a"/>
<rect x="2529.2" y="2397.7" width="2.6" height="2.6" fill="#5a5a5a"/>
<rect x="2533.1" y="2369" width="2.6" height="2.6" fill="#5a5a5a"/>
<rect x="2533.1" y="2373.1" width="2.6" height="2.6" fill="#5a5a5a"/>
<rect x="2533.1" y="2377.2" width="2.6" height="2.6" fill="#5a5a5a"/>
<rect x="2533.1" y="2381.3" width="2.6" height="2.6" fill="#5a5a5a"/>
<rect x="2533.1" y="2385.4" width="2.6" height="2.6" fill="#5a5a5a"/>
<rect x="2533.1" y="2389.5" width="2.6" height="2.6" fill="#5a5a5a"/>
<rect x="2533.1" y="2393.6" width="2.6" height="2.6" fill="#5a5a5a"/>
<rect x="2533.1" y="2397.7" width="2.6" height="2.6" fill="#5a5a5a"/>
<rect x="2537" y="2369" width="2.6" height="2.6" fill="#5a5a5a"/>
<rect x="2537" y="2373.1" width="2.6" height="2.6" fill="#5a5a5a"/>
<rect x="2537" y="2377.2" width="2.6" height="2.6" fill="#5a5a5a"/>
<rect x="2537" y="2381.3" width="2.6" height="2.6" fill="#5a5a5a"/>
<rect x="2537" y="2385.4" width="2.6" height="2.6" fill="#5a5a5a"/>
<rect x="2537" y="2389.5" width="2.6" height="2.6" fill="#5a5a5a"/>
<rect x="2537" y="2393.6" width="2.6" height="2.6" fill="#5a5a5a"/>
<rect x="2537" y="2397.7" width="2.6" height="2.6" fill="#5a5a5a"/>
<rect x="2517" y="2397" width="4" height="4" fill="#cc99ff"/>
<rect x="2520.6" y="2391.5" width="4" height="4" fill="#cc99ff"/>
<rect x="2524.2" y="2386" width="4" height="4" fill="#cc99ff"/>
<rect x="2527.8" y="2380.5" width="4" height="4" fill="#cc99ff"/>
<rect x="2531.4" y="2375" width="4" height="4" fill="#cc99ff"/>
<rect x="2535" y="2369.5" width="4" height="4" fill="#cc99ff"/>
<rect x="2543" y="2367" width="17" height="35" fill="#b4b4b4"/>
<circle cx="2551.5" cy="2386" r="4" fill="none" stroke="#777" stroke-width="1.4" />
<rect x="2545" y="2396" width="13" height="3" fill="#19d6ee"/>
<rect x="2563" y="2367" width="10" height="35" fill="#b9b9b9"/>
<rect x="2564" y="2371" width="8" height="3" fill="#ffb700"/>
<rect x="2564" y="2392" width="8" height="3" fill="#ffb700"/>
<rect x="2575" y="2368" width="57" height="34" fill="#2a2a2a"/>
<rect x="2575" y="2368" width="57" height="4" fill="#6b5a2a"/>
<rect x="2575" y="2397" width="57" height="3" fill="#5a4a20"/>
<line x1="2584" y1="2383" x2="2620" y2="2385" stroke="#c89020" stroke-width="2" />
<rect x="2578" y="2372" width="3" height="26" fill="#c89020"/>
<rect x="2634" y="2368" width="45" height="18" fill="#2a2a2a"/>
<line x1="2636" y1="2376" x2="2677" y2="2376" stroke="#19d6ee" stroke-width="1.6" />
<circle cx="2657" cy="2376" r="2" fill="#ffb700" />
<rect x="2634" y="2387" width="45" height="15" fill="#b4b4b4"/>
<circle cx="2648" cy="2395" r="4" fill="none" stroke="#19d6ee" stroke-width="1.6" />
<circle cx="2664" cy="2395" r="4" fill="none" stroke="#19d6ee" stroke-width="1.6" />
<rect x="2681" y="2368" width="60" height="34" fill="#2a2a2a"/>
<rect x="2681" y="2368" width="60" height="3" fill="#2a6a72"/>
<rect x="2700" y="2396" width="30" height="2.5" fill="#2a7a84"/>
<path d="M2686 2396L2698 2374C2702 2380 2708 2382 2722 2382C2726 2392 2732 2396 2738 2397" fill="none" stroke="#19d6ee" stroke-width="1.8" />
<rect x="2743" y="2367" width="14" height="35" fill="#b4b4b4"/>
<rect x="2745" y="2372" width="9" height="3" fill="#19d6ee"/>
<rect x="2745" y="2380" width="9" height="3" fill="#ffb700"/>
<rect x="2759" y="2367" width="14" height="35" fill="#b9b9b9"/>
<rect x="2761" y="2374" width="8" height="2.5" fill="#19d6ee"/>
<rect x="2761" y="2390" width="8" height="2.5" fill="#ffb700"/>
<rect x="2777" y="2367" width="91" height="21" fill="#2a2a2a"/>
<rect x="2780" y="2375.5" width="86" height="4" fill="#c89020"/>
<rect x="2777" y="2389" width="91" height="13" fill="#b4b4b4"/>
<circle cx="2783" cy="2395.5" r="2.6" fill="none" stroke="#19d6ee" stroke-width="1.4" />
<circle cx="2792.6" cy="2395.5" r="2.6" fill="none" stroke="#19d6ee" stroke-width="1.4" />
<circle cx="2802.2" cy="2395.5" r="2.6" fill="none" stroke="#19d6ee" stroke-width="1.4" />
<circle cx="2811.8" cy="2395.5" r="2.6" fill="none" stroke="#19d6ee" stroke-width="1.4" />
<circle cx="2821.4" cy="2395.5" r="2.6" fill="none" stroke="#19d6ee" stroke-width="1.4" />
<circle cx="2831" cy="2395.5" r="2.6" fill="none" stroke="#19d6ee" stroke-width="1.4" />
<circle cx="2840.6" cy="2395.5" r="2.6" fill="none" stroke="#19d6ee" stroke-width="1.4" />
<circle cx="2850.2" cy="2395.5" r="2.6" fill="none" stroke="#19d6ee" stroke-width="1.4" />
<circle cx="2859.8" cy="2395.5" r="2.6" fill="none" stroke="#19d6ee" stroke-width="1.4" />
<rect x="2870" y="2367" width="10" height="35" fill="#b9b9b9"/>
<rect x="2871.5" y="2372" width="7" height="2.5" fill="#19d6ee"/>
<rect x="2871.5" y="2392" width="7" height="2.5" fill="#19d6ee"/>
<rect x="2918" y="2380" width="5" height="18" fill="#ffb700"/>
<rect x="2926.6" y="2370" width="5" height="28" fill="#ffb700"/>
<rect x="2935.2" y="2384" width="5" height="14" fill="#ffb700"/>
<rect x="2943.8" y="2375" width="5" height="23" fill="#ffb700"/>
<polygon points="2961,2381 2975,2381 2968,2390" fill="#b2b2b2" />
</g></svg></body></html>
